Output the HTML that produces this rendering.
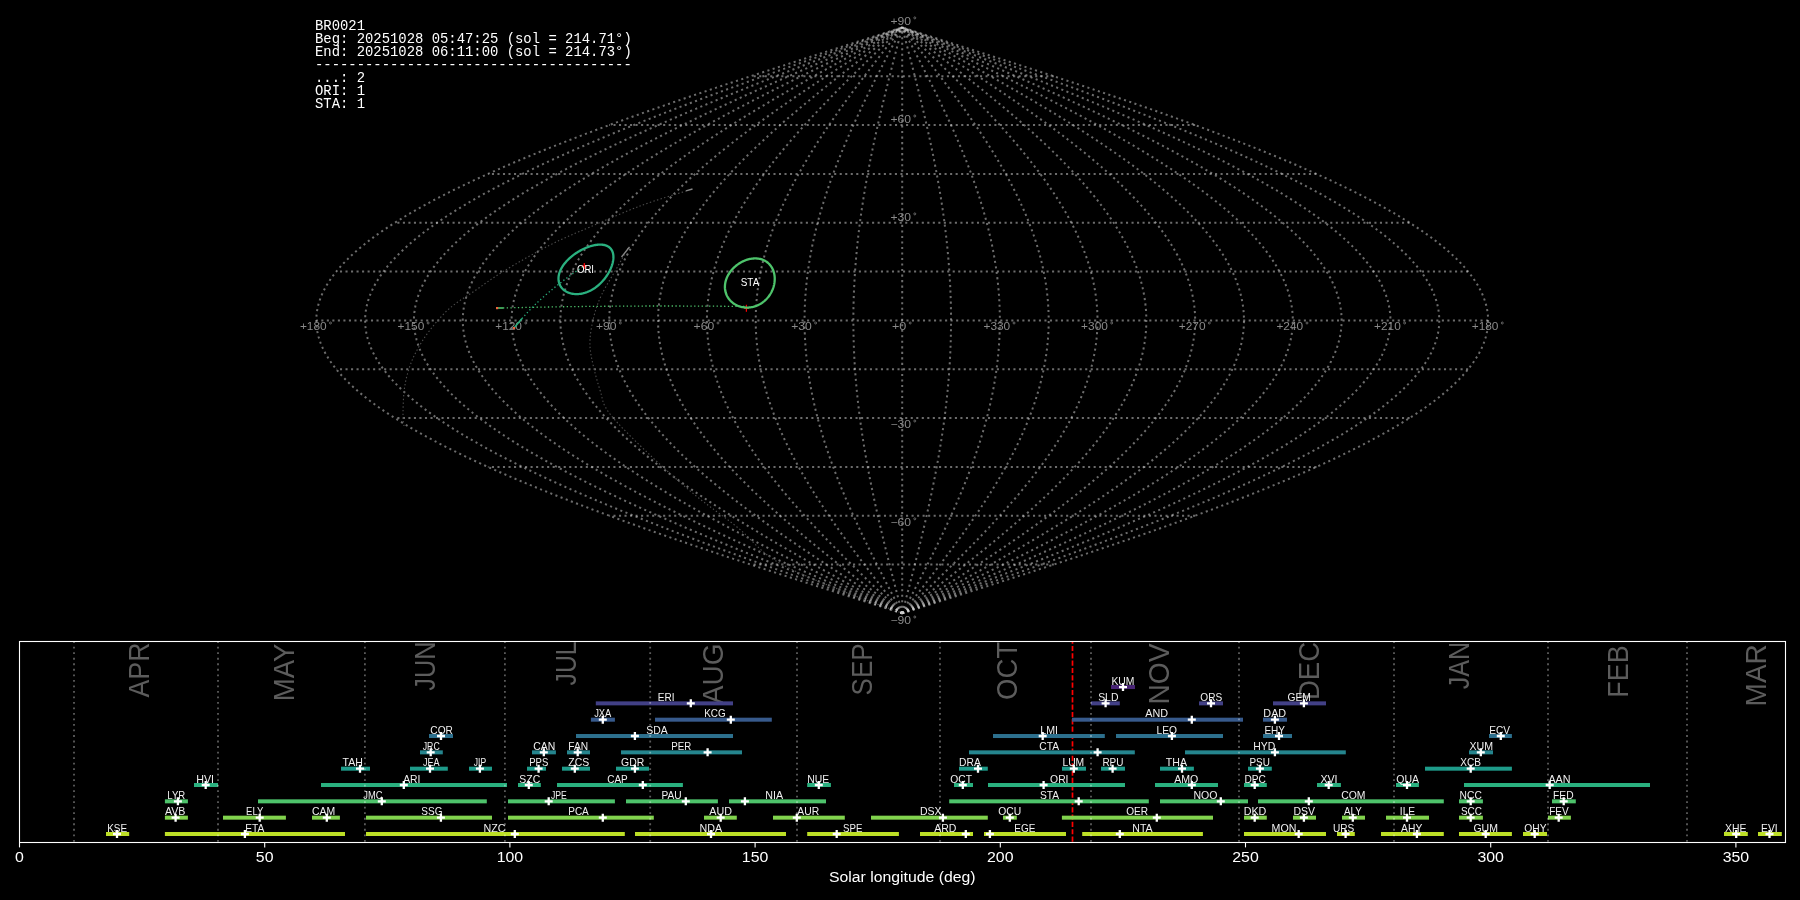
<!DOCTYPE html>
<html><head><meta charset="utf-8"><style>html,body{margin:0;padding:0;background:#000;width:1800px;height:900px;overflow:hidden;position:relative}</style></head><body>
<svg width="1800" height="900" viewBox="0 0 1800 900" style="position:absolute;left:0;top:0;will-change:transform;font-family:'Liberation Sans', sans-serif">
<rect x="0" y="0" width="1800" height="900" fill="#000"/>
<path d="M1053.84,564.52 L1049.63,564.52 L1045.42,564.52 L1041.21,564.52 L1036.99,564.52 L1032.78,564.52 L1028.57,564.52 L1024.36,564.52 L1020.14,564.52 L1015.93,564.52 L1011.72,564.52 L1007.51,564.52 L1003.29,564.52 L999.08,564.52 L994.87,564.52 L990.66,564.52 L986.45,564.52 L982.23,564.52 L978.02,564.52 L973.81,564.52 L969.60,564.52 L965.38,564.52 L961.17,564.52 L956.96,564.52 L952.75,564.52 L948.54,564.52 L944.32,564.52 L940.11,564.52 L935.90,564.52 L931.69,564.52 L927.47,564.52 L923.26,564.52 L919.05,564.52 L914.84,564.52 L910.62,564.52 L906.41,564.52 L902.20,564.52 L897.99,564.52 L893.78,564.52 L889.56,564.52 L885.35,564.52 L881.14,564.52 L876.93,564.52 L872.71,564.52 L868.50,564.52 L864.29,564.52 L860.08,564.52 L855.86,564.52 L851.65,564.52 L847.44,564.52 L843.23,564.52 L839.02,564.52 L834.80,564.52 L830.59,564.52 L826.38,564.52 L822.17,564.52 L817.95,564.52 L813.74,564.52 L809.53,564.52 L805.32,564.52 L801.11,564.52 L796.89,564.52 L792.68,564.52 L788.47,564.52 L784.26,564.52 L780.04,564.52 L775.83,564.52 L771.62,564.52 L767.41,564.52 L763.19,564.52 L758.98,564.52 L754.77,564.52 L750.56,564.52" fill="none" stroke="#d8d8d8" stroke-opacity="0.5" stroke-width="2" stroke-dasharray="2.08 3.44"/>
<path d="M1195.15,515.70 L1187.01,515.70 L1178.88,515.70 L1170.74,515.70 L1162.60,515.70 L1154.46,515.70 L1146.33,515.70 L1138.19,515.70 L1130.05,515.70 L1121.91,515.70 L1113.78,515.70 L1105.64,515.70 L1097.50,515.70 L1089.36,515.70 L1081.23,515.70 L1073.09,515.70 L1064.95,515.70 L1056.81,515.70 L1048.68,515.70 L1040.54,515.70 L1032.40,515.70 L1024.26,515.70 L1016.13,515.70 L1007.99,515.70 L999.85,515.70 L991.71,515.70 L983.58,515.70 L975.44,515.70 L967.30,515.70 L959.16,515.70 L951.03,515.70 L942.89,515.70 L934.75,515.70 L926.61,515.70 L918.48,515.70 L910.34,515.70 L902.20,515.70 L894.06,515.70 L885.93,515.70 L877.79,515.70 L869.65,515.70 L861.51,515.70 L853.38,515.70 L845.24,515.70 L837.10,515.70 L828.96,515.70 L820.83,515.70 L812.69,515.70 L804.55,515.70 L796.41,515.70 L788.27,515.70 L780.14,515.70 L772.00,515.70 L763.86,515.70 L755.73,515.70 L747.59,515.70 L739.45,515.70 L731.31,515.70 L723.17,515.70 L715.04,515.70 L706.90,515.70 L698.76,515.70 L690.62,515.70 L682.49,515.70 L674.35,515.70 L666.21,515.70 L658.08,515.70 L649.94,515.70 L641.80,515.70 L633.66,515.70 L625.52,515.70 L617.39,515.70 L609.25,515.70" fill="none" stroke="#d8d8d8" stroke-opacity="0.5" stroke-width="2" stroke-dasharray="2.08 3.44"/>
<path d="M1316.49,466.88 L1304.99,466.88 L1293.48,466.88 L1281.97,466.88 L1270.46,466.88 L1258.95,466.88 L1247.44,466.88 L1235.94,466.88 L1224.43,466.88 L1212.92,466.88 L1201.41,466.88 L1189.90,466.88 L1178.40,466.88 L1166.89,466.88 L1155.38,466.88 L1143.87,466.88 L1132.36,466.88 L1120.86,466.88 L1109.35,466.88 L1097.84,466.88 L1086.33,466.88 L1074.82,466.88 L1063.31,466.88 L1051.81,466.88 L1040.30,466.88 L1028.79,466.88 L1017.28,466.88 L1005.77,466.88 L994.27,466.88 L982.76,466.88 L971.25,466.88 L959.74,466.88 L948.23,466.88 L936.72,466.88 L925.22,466.88 L913.71,466.88 L902.20,466.88 L890.69,466.88 L879.18,466.88 L867.68,466.88 L856.17,466.88 L844.66,466.88 L833.15,466.88 L821.64,466.88 L810.13,466.88 L798.63,466.88 L787.12,466.88 L775.61,466.88 L764.10,466.88 L752.59,466.88 L741.09,466.88 L729.58,466.88 L718.07,466.88 L706.56,466.88 L695.05,466.88 L683.54,466.88 L672.04,466.88 L660.53,466.88 L649.02,466.88 L637.51,466.88 L626.00,466.88 L614.50,466.88 L602.99,466.88 L591.48,466.88 L579.97,466.88 L568.46,466.88 L556.96,466.88 L545.45,466.88 L533.94,466.88 L522.43,466.88 L510.92,466.88 L499.41,466.88 L487.91,466.88" fill="none" stroke="#d8d8d8" stroke-opacity="0.5" stroke-width="2" stroke-dasharray="2.08 3.44"/>
<path d="M1409.60,418.05 L1395.51,418.05 L1381.42,418.05 L1367.32,418.05 L1353.23,418.05 L1339.13,418.05 L1325.04,418.05 L1310.94,418.05 L1296.85,418.05 L1282.75,418.05 L1268.66,418.05 L1254.56,418.05 L1240.47,418.05 L1226.37,418.05 L1212.28,418.05 L1198.19,418.05 L1184.09,418.05 L1170.00,418.05 L1155.90,418.05 L1141.81,418.05 L1127.71,418.05 L1113.62,418.05 L1099.52,418.05 L1085.43,418.05 L1071.33,418.05 L1057.24,418.05 L1043.15,418.05 L1029.05,418.05 L1014.96,418.05 L1000.86,418.05 L986.77,418.05 L972.67,418.05 L958.58,418.05 L944.48,418.05 L930.39,418.05 L916.29,418.05 L902.20,418.05 L888.11,418.05 L874.01,418.05 L859.92,418.05 L845.82,418.05 L831.73,418.05 L817.63,418.05 L803.54,418.05 L789.44,418.05 L775.35,418.05 L761.25,418.05 L747.16,418.05 L733.07,418.05 L718.97,418.05 L704.88,418.05 L690.78,418.05 L676.69,418.05 L662.59,418.05 L648.50,418.05 L634.40,418.05 L620.31,418.05 L606.21,418.05 L592.12,418.05 L578.03,418.05 L563.93,418.05 L549.84,418.05 L535.74,418.05 L521.65,418.05 L507.55,418.05 L493.46,418.05 L479.36,418.05 L465.27,418.05 L451.17,418.05 L437.08,418.05 L422.98,418.05 L408.89,418.05 L394.80,418.05" fill="none" stroke="#d8d8d8" stroke-opacity="0.5" stroke-width="2" stroke-dasharray="2.08 3.44"/>
<path d="M1468.14,369.22 L1452.42,369.22 L1436.70,369.22 L1420.97,369.22 L1405.25,369.22 L1389.53,369.22 L1373.81,369.22 L1358.09,369.22 L1342.37,369.22 L1326.65,369.22 L1310.93,369.22 L1295.21,369.22 L1279.49,369.22 L1263.77,369.22 L1248.05,369.22 L1232.33,369.22 L1216.61,369.22 L1200.89,369.22 L1185.17,369.22 L1169.45,369.22 L1153.73,369.22 L1138.01,369.22 L1122.29,369.22 L1106.57,369.22 L1090.85,369.22 L1075.12,369.22 L1059.40,369.22 L1043.68,369.22 L1027.96,369.22 L1012.24,369.22 L996.52,369.22 L980.80,369.22 L965.08,369.22 L949.36,369.22 L933.64,369.22 L917.92,369.22 L902.20,369.22 L886.48,369.22 L870.76,369.22 L855.04,369.22 L839.32,369.22 L823.60,369.22 L807.88,369.22 L792.16,369.22 L776.44,369.22 L760.72,369.22 L745.00,369.22 L729.28,369.22 L713.55,369.22 L697.83,369.22 L682.11,369.22 L666.39,369.22 L650.67,369.22 L634.95,369.22 L619.23,369.22 L603.51,369.22 L587.79,369.22 L572.07,369.22 L556.35,369.22 L540.63,369.22 L524.91,369.22 L509.19,369.22 L493.47,369.22 L477.75,369.22 L462.03,369.22 L446.31,369.22 L430.59,369.22 L414.87,369.22 L399.15,369.22 L383.43,369.22 L367.70,369.22 L351.98,369.22 L336.26,369.22" fill="none" stroke="#d8d8d8" stroke-opacity="0.5" stroke-width="2" stroke-dasharray="2.08 3.44"/>
<path d="M1488.10,320.40 L1471.83,320.40 L1455.55,320.40 L1439.28,320.40 L1423.00,320.40 L1406.72,320.40 L1390.45,320.40 L1374.17,320.40 L1357.90,320.40 L1341.62,320.40 L1325.35,320.40 L1309.08,320.40 L1292.80,320.40 L1276.53,320.40 L1260.25,320.40 L1243.97,320.40 L1227.70,320.40 L1211.42,320.40 L1195.15,320.40 L1178.88,320.40 L1162.60,320.40 L1146.33,320.40 L1130.05,320.40 L1113.78,320.40 L1097.50,320.40 L1081.23,320.40 L1064.95,320.40 L1048.67,320.40 L1032.40,320.40 L1016.12,320.40 L999.85,320.40 L983.58,320.40 L967.30,320.40 L951.03,320.40 L934.75,320.40 L918.48,320.40 L902.20,320.40 L885.93,320.40 L869.65,320.40 L853.38,320.40 L837.10,320.40 L820.83,320.40 L804.55,320.40 L788.28,320.40 L772.00,320.40 L755.73,320.40 L739.45,320.40 L723.18,320.40 L706.90,320.40 L690.62,320.40 L674.35,320.40 L658.08,320.40 L641.80,320.40 L625.53,320.40 L609.25,320.40 L592.98,320.40 L576.70,320.40 L560.43,320.40 L544.15,320.40 L527.88,320.40 L511.60,320.40 L495.33,320.40 L479.05,320.40 L462.78,320.40 L446.50,320.40 L430.23,320.40 L413.95,320.40 L397.68,320.40 L381.40,320.40 L365.13,320.40 L348.85,320.40 L332.58,320.40 L316.30,320.40" fill="none" stroke="#d8d8d8" stroke-opacity="0.5" stroke-width="2" stroke-dasharray="2.08 3.44"/>
<path d="M1468.14,271.57 L1452.42,271.57 L1436.70,271.57 L1420.97,271.57 L1405.25,271.57 L1389.53,271.57 L1373.81,271.57 L1358.09,271.57 L1342.37,271.57 L1326.65,271.57 L1310.93,271.57 L1295.21,271.57 L1279.49,271.57 L1263.77,271.57 L1248.05,271.57 L1232.33,271.57 L1216.61,271.57 L1200.89,271.57 L1185.17,271.57 L1169.45,271.57 L1153.73,271.57 L1138.01,271.57 L1122.29,271.57 L1106.57,271.57 L1090.85,271.57 L1075.12,271.57 L1059.40,271.57 L1043.68,271.57 L1027.96,271.57 L1012.24,271.57 L996.52,271.57 L980.80,271.57 L965.08,271.57 L949.36,271.57 L933.64,271.57 L917.92,271.57 L902.20,271.57 L886.48,271.57 L870.76,271.57 L855.04,271.57 L839.32,271.57 L823.60,271.57 L807.88,271.57 L792.16,271.57 L776.44,271.57 L760.72,271.57 L745.00,271.57 L729.28,271.57 L713.55,271.57 L697.83,271.57 L682.11,271.57 L666.39,271.57 L650.67,271.57 L634.95,271.57 L619.23,271.57 L603.51,271.57 L587.79,271.57 L572.07,271.57 L556.35,271.57 L540.63,271.57 L524.91,271.57 L509.19,271.57 L493.47,271.57 L477.75,271.57 L462.03,271.57 L446.31,271.57 L430.59,271.57 L414.87,271.57 L399.15,271.57 L383.43,271.57 L367.70,271.57 L351.98,271.57 L336.26,271.57" fill="none" stroke="#d8d8d8" stroke-opacity="0.5" stroke-width="2" stroke-dasharray="2.08 3.44"/>
<path d="M1409.60,222.75 L1395.51,222.75 L1381.42,222.75 L1367.32,222.75 L1353.23,222.75 L1339.13,222.75 L1325.04,222.75 L1310.94,222.75 L1296.85,222.75 L1282.75,222.75 L1268.66,222.75 L1254.56,222.75 L1240.47,222.75 L1226.37,222.75 L1212.28,222.75 L1198.19,222.75 L1184.09,222.75 L1170.00,222.75 L1155.90,222.75 L1141.81,222.75 L1127.71,222.75 L1113.62,222.75 L1099.52,222.75 L1085.43,222.75 L1071.33,222.75 L1057.24,222.75 L1043.15,222.75 L1029.05,222.75 L1014.96,222.75 L1000.86,222.75 L986.77,222.75 L972.67,222.75 L958.58,222.75 L944.48,222.75 L930.39,222.75 L916.29,222.75 L902.20,222.75 L888.11,222.75 L874.01,222.75 L859.92,222.75 L845.82,222.75 L831.73,222.75 L817.63,222.75 L803.54,222.75 L789.44,222.75 L775.35,222.75 L761.25,222.75 L747.16,222.75 L733.07,222.75 L718.97,222.75 L704.88,222.75 L690.78,222.75 L676.69,222.75 L662.59,222.75 L648.50,222.75 L634.40,222.75 L620.31,222.75 L606.21,222.75 L592.12,222.75 L578.03,222.75 L563.93,222.75 L549.84,222.75 L535.74,222.75 L521.65,222.75 L507.55,222.75 L493.46,222.75 L479.36,222.75 L465.27,222.75 L451.17,222.75 L437.08,222.75 L422.98,222.75 L408.89,222.75 L394.80,222.75" fill="none" stroke="#d8d8d8" stroke-opacity="0.5" stroke-width="2" stroke-dasharray="2.08 3.44"/>
<path d="M1316.49,173.92 L1304.99,173.92 L1293.48,173.92 L1281.97,173.92 L1270.46,173.92 L1258.95,173.92 L1247.44,173.92 L1235.94,173.92 L1224.43,173.92 L1212.92,173.92 L1201.41,173.92 L1189.90,173.92 L1178.40,173.92 L1166.89,173.92 L1155.38,173.92 L1143.87,173.92 L1132.36,173.92 L1120.86,173.92 L1109.35,173.92 L1097.84,173.92 L1086.33,173.92 L1074.82,173.92 L1063.31,173.92 L1051.81,173.92 L1040.30,173.92 L1028.79,173.92 L1017.28,173.92 L1005.77,173.92 L994.27,173.92 L982.76,173.92 L971.25,173.92 L959.74,173.92 L948.23,173.92 L936.72,173.92 L925.22,173.92 L913.71,173.92 L902.20,173.92 L890.69,173.92 L879.18,173.92 L867.68,173.92 L856.17,173.92 L844.66,173.92 L833.15,173.92 L821.64,173.92 L810.13,173.92 L798.63,173.92 L787.12,173.92 L775.61,173.92 L764.10,173.92 L752.59,173.92 L741.09,173.92 L729.58,173.92 L718.07,173.92 L706.56,173.92 L695.05,173.92 L683.54,173.92 L672.04,173.92 L660.53,173.92 L649.02,173.92 L637.51,173.92 L626.00,173.92 L614.50,173.92 L602.99,173.92 L591.48,173.92 L579.97,173.92 L568.46,173.92 L556.96,173.92 L545.45,173.92 L533.94,173.92 L522.43,173.92 L510.92,173.92 L499.41,173.92 L487.91,173.92" fill="none" stroke="#d8d8d8" stroke-opacity="0.5" stroke-width="2" stroke-dasharray="2.08 3.44"/>
<path d="M1195.15,125.10 L1187.01,125.10 L1178.88,125.10 L1170.74,125.10 L1162.60,125.10 L1154.46,125.10 L1146.33,125.10 L1138.19,125.10 L1130.05,125.10 L1121.91,125.10 L1113.78,125.10 L1105.64,125.10 L1097.50,125.10 L1089.36,125.10 L1081.23,125.10 L1073.09,125.10 L1064.95,125.10 L1056.81,125.10 L1048.68,125.10 L1040.54,125.10 L1032.40,125.10 L1024.26,125.10 L1016.13,125.10 L1007.99,125.10 L999.85,125.10 L991.71,125.10 L983.58,125.10 L975.44,125.10 L967.30,125.10 L959.16,125.10 L951.03,125.10 L942.89,125.10 L934.75,125.10 L926.61,125.10 L918.48,125.10 L910.34,125.10 L902.20,125.10 L894.06,125.10 L885.93,125.10 L877.79,125.10 L869.65,125.10 L861.51,125.10 L853.38,125.10 L845.24,125.10 L837.10,125.10 L828.96,125.10 L820.83,125.10 L812.69,125.10 L804.55,125.10 L796.41,125.10 L788.27,125.10 L780.14,125.10 L772.00,125.10 L763.86,125.10 L755.73,125.10 L747.59,125.10 L739.45,125.10 L731.31,125.10 L723.17,125.10 L715.04,125.10 L706.90,125.10 L698.76,125.10 L690.62,125.10 L682.49,125.10 L674.35,125.10 L666.21,125.10 L658.08,125.10 L649.94,125.10 L641.80,125.10 L633.66,125.10 L625.52,125.10 L617.39,125.10 L609.25,125.10" fill="none" stroke="#d8d8d8" stroke-opacity="0.5" stroke-width="2" stroke-dasharray="2.08 3.44"/>
<path d="M1053.84,76.27 L1049.63,76.27 L1045.42,76.27 L1041.21,76.27 L1036.99,76.27 L1032.78,76.27 L1028.57,76.27 L1024.36,76.27 L1020.14,76.27 L1015.93,76.27 L1011.72,76.27 L1007.51,76.27 L1003.29,76.27 L999.08,76.27 L994.87,76.27 L990.66,76.27 L986.45,76.27 L982.23,76.27 L978.02,76.27 L973.81,76.27 L969.60,76.27 L965.38,76.27 L961.17,76.27 L956.96,76.27 L952.75,76.27 L948.54,76.27 L944.32,76.27 L940.11,76.27 L935.90,76.27 L931.69,76.27 L927.47,76.27 L923.26,76.27 L919.05,76.27 L914.84,76.27 L910.62,76.27 L906.41,76.27 L902.20,76.27 L897.99,76.27 L893.78,76.27 L889.56,76.27 L885.35,76.27 L881.14,76.27 L876.93,76.27 L872.71,76.27 L868.50,76.27 L864.29,76.27 L860.08,76.27 L855.86,76.27 L851.65,76.27 L847.44,76.27 L843.23,76.27 L839.02,76.27 L834.80,76.27 L830.59,76.27 L826.38,76.27 L822.17,76.27 L817.95,76.27 L813.74,76.27 L809.53,76.27 L805.32,76.27 L801.11,76.27 L796.89,76.27 L792.68,76.27 L788.47,76.27 L784.26,76.27 L780.04,76.27 L775.83,76.27 L771.62,76.27 L767.41,76.27 L763.19,76.27 L758.98,76.27 L754.77,76.27 L750.56,76.27" fill="none" stroke="#d8d8d8" stroke-opacity="0.5" stroke-width="2" stroke-dasharray="2.08 3.44"/>
<path d="M902.20,613.35 L907.31,611.72 L912.43,610.10 L917.54,608.47 L922.65,606.84 L927.76,605.21 L932.86,603.59 L937.97,601.96 L943.07,600.33 L948.17,598.70 L953.26,597.08 L958.36,595.45 L963.44,593.82 L968.53,592.19 L973.60,590.56 L978.68,588.94 L983.74,587.31 L988.80,585.68 L993.85,584.05 L998.90,582.43 L1003.94,580.80 L1008.97,579.17 L1013.99,577.54 L1019.01,575.92 L1024.02,574.29 L1029.01,572.66 L1034.00,571.03 L1038.98,569.41 L1043.94,567.78 L1048.90,566.15 L1053.84,564.52 L1058.77,562.90 L1063.70,561.27 L1068.60,559.64 L1073.50,558.01 L1078.38,556.39 L1083.25,554.76 L1088.11,553.13 L1092.95,551.50 L1097.78,549.88 L1102.59,548.25 L1107.39,546.62 L1112.17,545.00 L1116.93,543.37 L1121.68,541.74 L1126.41,540.11 L1131.13,538.48 L1135.83,536.86 L1140.51,535.23 L1145.17,533.60 L1149.81,531.97 L1154.44,530.35 L1159.04,528.72 L1163.63,527.09 L1168.19,525.46 L1172.74,523.84 L1177.26,522.21 L1181.77,520.58 L1186.25,518.95 L1190.71,517.33 L1195.15,515.70 L1199.57,514.07 L1203.96,512.44 L1208.33,510.82 L1212.68,509.19 L1217.00,507.56 L1221.30,505.93 L1225.58,504.31 L1229.83,502.68 L1234.06,501.05 L1238.26,499.42 L1242.43,497.80 L1246.58,496.17 L1250.71,494.54 L1254.80,492.91 L1258.87,491.29 L1262.92,489.66 L1266.93,488.03 L1270.92,486.40 L1274.88,484.78 L1278.81,483.15 L1282.71,481.52 L1286.58,479.89 L1290.43,478.27 L1294.24,476.64 L1298.03,475.01 L1301.78,473.38 L1305.51,471.76 L1309.20,470.13 L1312.86,468.50 L1316.49,466.88 L1320.09,465.25 L1323.66,463.62 L1327.20,461.99 L1330.70,460.37 L1334.17,458.74 L1337.61,457.11 L1341.01,455.48 L1344.38,453.85 L1347.72,452.23 L1351.03,450.60 L1354.29,448.97 L1357.53,447.34 L1360.73,445.72 L1363.90,444.09 L1367.03,442.46 L1370.12,440.83 L1373.18,439.21 L1376.20,437.58 L1379.19,435.95 L1382.14,434.32 L1385.06,432.70 L1387.93,431.07 L1390.77,429.44 L1393.58,427.81 L1396.34,426.19 L1399.07,424.56 L1401.76,422.93 L1404.41,421.30 L1407.03,419.68 L1409.60,418.05 L1412.14,416.42 L1414.64,414.79 L1417.10,413.17 L1419.52,411.54 L1421.90,409.91 L1424.24,408.28 L1426.54,406.66 L1428.80,405.03 L1431.02,403.40 L1433.21,401.77 L1435.35,400.15 L1437.45,398.52 L1439.51,396.89 L1441.52,395.26 L1443.50,393.64 L1445.44,392.01 L1447.33,390.38 L1449.18,388.75 L1451.00,387.13 L1452.77,385.50 L1454.49,383.87 L1456.18,382.25 L1457.82,380.62 L1459.42,378.99 L1460.98,377.36 L1462.50,375.73 L1463.97,374.11 L1465.40,372.48 L1466.79,370.85 L1468.14,369.22 L1469.44,367.60 L1470.70,365.97 L1471.91,364.34 L1473.08,362.71 L1474.21,361.09 L1475.30,359.46 L1476.34,357.83 L1477.34,356.20 L1478.29,354.58 L1479.20,352.95 L1480.06,351.32 L1480.89,349.69 L1481.66,348.07 L1482.40,346.44 L1483.09,344.81 L1483.73,343.19 L1484.33,341.56 L1484.89,339.93 L1485.40,338.30 L1485.87,336.67 L1486.29,335.05 L1486.67,333.42 L1487.01,331.79 L1487.30,330.16 L1487.54,328.54 L1487.74,326.91 L1487.90,325.28 L1488.01,323.65 L1488.08,322.03 L1488.10,320.40 L1488.08,318.77 L1488.01,317.14 L1487.90,315.52 L1487.74,313.89 L1487.54,312.26 L1487.30,310.63 L1487.01,309.01 L1486.67,307.38 L1486.29,305.75 L1485.87,304.12 L1485.40,302.50 L1484.89,300.87 L1484.33,299.24 L1483.73,297.61 L1483.09,295.99 L1482.40,294.36 L1481.66,292.73 L1480.89,291.10 L1480.06,289.48 L1479.20,287.85 L1478.29,286.22 L1477.34,284.59 L1476.34,282.97 L1475.30,281.34 L1474.21,279.71 L1473.08,278.08 L1471.91,276.46 L1470.70,274.83 L1469.44,273.20 L1468.14,271.57 L1466.79,269.95 L1465.40,268.32 L1463.97,266.69 L1462.50,265.06 L1460.98,263.44 L1459.42,261.81 L1457.82,260.18 L1456.18,258.55 L1454.49,256.93 L1452.77,255.30 L1451.00,253.67 L1449.18,252.04 L1447.33,250.42 L1445.44,248.79 L1443.50,247.16 L1441.52,245.53 L1439.51,243.91 L1437.45,242.28 L1435.35,240.65 L1433.21,239.02 L1431.02,237.40 L1428.80,235.77 L1426.54,234.14 L1424.24,232.51 L1421.90,230.89 L1419.52,229.26 L1417.10,227.63 L1414.64,226.00 L1412.14,224.38 L1409.60,222.75 L1407.03,221.12 L1404.41,219.49 L1401.76,217.87 L1399.07,216.24 L1396.34,214.61 L1393.58,212.98 L1390.77,211.36 L1387.93,209.73 L1385.06,208.10 L1382.14,206.47 L1379.19,204.85 L1376.20,203.22 L1373.18,201.59 L1370.12,199.96 L1367.03,198.34 L1363.90,196.71 L1360.73,195.08 L1357.53,193.45 L1354.29,191.83 L1351.03,190.20 L1347.72,188.57 L1344.38,186.94 L1341.01,185.32 L1337.61,183.69 L1334.17,182.06 L1330.70,180.43 L1327.20,178.81 L1323.66,177.18 L1320.09,175.55 L1316.49,173.92 L1312.86,172.30 L1309.20,170.67 L1305.51,169.04 L1301.78,167.41 L1298.03,165.79 L1294.24,164.16 L1290.43,162.53 L1286.58,160.90 L1282.71,159.28 L1278.81,157.65 L1274.88,156.02 L1270.92,154.39 L1266.93,152.77 L1262.92,151.14 L1258.87,149.51 L1254.80,147.88 L1250.71,146.26 L1246.58,144.63 L1242.43,143.00 L1238.26,141.37 L1234.06,139.75 L1229.83,138.12 L1225.58,136.49 L1221.30,134.86 L1217.00,133.24 L1212.68,131.61 L1208.33,129.98 L1203.96,128.35 L1199.57,126.73 L1195.15,125.10 L1190.71,123.47 L1186.25,121.84 L1181.77,120.22 L1177.26,118.59 L1172.74,116.96 L1168.19,115.33 L1163.63,113.71 L1159.04,112.08 L1154.44,110.45 L1149.81,108.82 L1145.17,107.20 L1140.51,105.57 L1135.83,103.94 L1131.13,102.31 L1126.41,100.69 L1121.68,99.06 L1116.93,97.43 L1112.17,95.80 L1107.39,94.18 L1102.59,92.55 L1097.78,90.92 L1092.95,89.29 L1088.11,87.67 L1083.25,86.04 L1078.38,84.41 L1073.50,82.78 L1068.60,81.16 L1063.70,79.53 L1058.77,77.90 L1053.84,76.27 L1048.90,74.65 L1043.94,73.02 L1038.98,71.39 L1034.00,69.76 L1029.01,68.14 L1024.02,66.51 L1019.01,64.88 L1013.99,63.25 L1008.97,61.63 L1003.94,60.00 L998.90,58.37 L993.85,56.75 L988.80,55.12 L983.74,53.49 L978.68,51.86 L973.60,50.24 L968.53,48.61 L963.44,46.98 L958.36,45.35 L953.26,43.72 L948.17,42.10 L943.07,40.47 L937.97,38.84 L932.86,37.21 L927.76,35.59 L922.65,33.96 L917.54,32.33 L912.43,30.70 L907.31,29.08 L902.20,27.45" fill="none" stroke="#d8d8d8" stroke-opacity="0.5" stroke-width="2" stroke-dasharray="2.08 3.44"/>
<path d="M902.20,613.35 L906.89,611.72 L911.57,610.10 L916.26,608.47 L920.94,606.84 L925.63,605.21 L930.31,603.59 L934.99,601.96 L939.66,600.33 L944.34,598.70 L949.01,597.08 L953.68,595.45 L958.34,593.82 L963.00,592.19 L967.65,590.56 L972.30,588.94 L976.95,587.31 L981.58,585.68 L986.22,584.05 L990.84,582.43 L995.46,580.80 L1000.07,579.17 L1004.68,577.54 L1009.28,575.92 L1013.86,574.29 L1018.44,572.66 L1023.02,571.03 L1027.58,569.41 L1032.13,567.78 L1036.67,566.15 L1041.21,564.52 L1045.73,562.90 L1050.24,561.27 L1054.74,559.64 L1059.23,558.01 L1063.70,556.39 L1068.17,554.76 L1072.62,553.13 L1077.05,551.50 L1081.48,549.88 L1085.89,548.25 L1090.29,546.62 L1094.67,545.00 L1099.04,543.37 L1103.39,541.74 L1107.73,540.11 L1112.05,538.48 L1116.36,536.86 L1120.65,535.23 L1124.92,533.60 L1129.18,531.97 L1133.42,530.35 L1137.64,528.72 L1141.84,527.09 L1146.03,525.46 L1150.19,523.84 L1154.34,522.21 L1158.47,520.58 L1162.58,518.95 L1166.67,517.33 L1170.74,515.70 L1174.79,514.07 L1178.81,512.44 L1182.82,510.82 L1186.81,509.19 L1190.77,507.56 L1194.71,505.93 L1198.63,504.31 L1202.53,502.68 L1206.40,501.05 L1210.25,499.42 L1214.08,497.80 L1217.88,496.17 L1221.66,494.54 L1225.42,492.91 L1229.15,491.29 L1232.86,489.66 L1236.54,488.03 L1240.19,486.40 L1243.82,484.78 L1247.43,483.15 L1251.00,481.52 L1254.55,479.89 L1258.08,478.27 L1261.57,476.64 L1265.04,475.01 L1268.48,473.38 L1271.90,471.76 L1275.28,470.13 L1278.64,468.50 L1281.97,466.88 L1285.27,465.25 L1288.54,463.62 L1291.78,461.99 L1294.99,460.37 L1298.17,458.74 L1301.32,457.11 L1304.45,455.48 L1307.54,453.85 L1310.60,452.23 L1313.62,450.60 L1316.62,448.97 L1319.59,447.34 L1322.52,445.72 L1325.42,444.09 L1328.29,442.46 L1331.13,440.83 L1333.93,439.21 L1336.70,437.58 L1339.44,435.95 L1342.15,434.32 L1344.82,432.70 L1347.46,431.07 L1350.06,429.44 L1352.63,427.81 L1355.16,426.19 L1357.67,424.56 L1360.13,422.93 L1362.56,421.30 L1364.96,419.68 L1367.32,418.05 L1369.65,416.42 L1371.94,414.79 L1374.19,413.17 L1376.41,411.54 L1378.59,409.91 L1380.74,408.28 L1382.85,406.66 L1384.92,405.03 L1386.96,403.40 L1388.96,401.77 L1390.92,400.15 L1392.84,398.52 L1394.73,396.89 L1396.58,395.26 L1398.39,393.64 L1400.17,392.01 L1401.90,390.38 L1403.60,388.75 L1405.26,387.13 L1406.89,385.50 L1408.47,383.87 L1410.01,382.25 L1411.52,380.62 L1412.99,378.99 L1414.42,377.36 L1415.81,375.73 L1417.16,374.11 L1418.47,372.48 L1419.74,370.85 L1420.97,369.22 L1422.17,367.60 L1423.32,365.97 L1424.44,364.34 L1425.51,362.71 L1426.54,361.09 L1427.54,359.46 L1428.49,357.83 L1429.41,356.20 L1430.28,354.58 L1431.12,352.95 L1431.91,351.32 L1432.66,349.69 L1433.38,348.07 L1434.05,346.44 L1434.68,344.81 L1435.27,343.19 L1435.82,341.56 L1436.33,339.93 L1436.80,338.30 L1437.23,336.67 L1437.62,335.05 L1437.97,333.42 L1438.27,331.79 L1438.54,330.16 L1438.76,328.54 L1438.95,326.91 L1439.09,325.28 L1439.19,323.65 L1439.25,322.03 L1439.28,320.40 L1439.25,318.77 L1439.19,317.14 L1439.09,315.52 L1438.95,313.89 L1438.76,312.26 L1438.54,310.63 L1438.27,309.01 L1437.97,307.38 L1437.62,305.75 L1437.23,304.12 L1436.80,302.50 L1436.33,300.87 L1435.82,299.24 L1435.27,297.61 L1434.68,295.99 L1434.05,294.36 L1433.38,292.73 L1432.66,291.10 L1431.91,289.48 L1431.12,287.85 L1430.28,286.22 L1429.41,284.59 L1428.49,282.97 L1427.54,281.34 L1426.54,279.71 L1425.51,278.08 L1424.44,276.46 L1423.32,274.83 L1422.17,273.20 L1420.97,271.57 L1419.74,269.95 L1418.47,268.32 L1417.16,266.69 L1415.81,265.06 L1414.42,263.44 L1412.99,261.81 L1411.52,260.18 L1410.01,258.55 L1408.47,256.93 L1406.89,255.30 L1405.26,253.67 L1403.60,252.04 L1401.90,250.42 L1400.17,248.79 L1398.39,247.16 L1396.58,245.53 L1394.73,243.91 L1392.84,242.28 L1390.92,240.65 L1388.96,239.02 L1386.96,237.40 L1384.92,235.77 L1382.85,234.14 L1380.74,232.51 L1378.59,230.89 L1376.41,229.26 L1374.19,227.63 L1371.94,226.00 L1369.65,224.38 L1367.32,222.75 L1364.96,221.12 L1362.56,219.49 L1360.13,217.87 L1357.67,216.24 L1355.16,214.61 L1352.63,212.98 L1350.06,211.36 L1347.46,209.73 L1344.82,208.10 L1342.15,206.47 L1339.44,204.85 L1336.70,203.22 L1333.93,201.59 L1331.13,199.96 L1328.29,198.34 L1325.42,196.71 L1322.52,195.08 L1319.59,193.45 L1316.62,191.83 L1313.62,190.20 L1310.60,188.57 L1307.54,186.94 L1304.45,185.32 L1301.32,183.69 L1298.17,182.06 L1294.99,180.43 L1291.78,178.81 L1288.54,177.18 L1285.27,175.55 L1281.97,173.92 L1278.64,172.30 L1275.28,170.67 L1271.90,169.04 L1268.48,167.41 L1265.04,165.79 L1261.57,164.16 L1258.08,162.53 L1254.55,160.90 L1251.00,159.28 L1247.43,157.65 L1243.82,156.02 L1240.19,154.39 L1236.54,152.77 L1232.86,151.14 L1229.15,149.51 L1225.42,147.88 L1221.66,146.26 L1217.88,144.63 L1214.08,143.00 L1210.25,141.37 L1206.40,139.75 L1202.53,138.12 L1198.63,136.49 L1194.71,134.86 L1190.77,133.24 L1186.81,131.61 L1182.82,129.98 L1178.81,128.35 L1174.79,126.73 L1170.74,125.10 L1166.67,123.47 L1162.58,121.84 L1158.47,120.22 L1154.34,118.59 L1150.19,116.96 L1146.03,115.33 L1141.84,113.71 L1137.64,112.08 L1133.42,110.45 L1129.18,108.82 L1124.92,107.20 L1120.65,105.57 L1116.36,103.94 L1112.05,102.31 L1107.73,100.69 L1103.39,99.06 L1099.04,97.43 L1094.67,95.80 L1090.29,94.18 L1085.89,92.55 L1081.48,90.92 L1077.05,89.29 L1072.62,87.67 L1068.17,86.04 L1063.70,84.41 L1059.23,82.78 L1054.74,81.16 L1050.24,79.53 L1045.73,77.90 L1041.21,76.27 L1036.67,74.65 L1032.13,73.02 L1027.58,71.39 L1023.02,69.76 L1018.44,68.14 L1013.86,66.51 L1009.28,64.88 L1004.68,63.25 L1000.07,61.63 L995.46,60.00 L990.84,58.37 L986.22,56.75 L981.58,55.12 L976.95,53.49 L972.30,51.86 L967.65,50.24 L963.00,48.61 L958.34,46.98 L953.68,45.35 L949.01,43.72 L944.34,42.10 L939.66,40.47 L934.99,38.84 L930.31,37.21 L925.63,35.59 L920.94,33.96 L916.26,32.33 L911.57,30.70 L906.89,29.08 L902.20,27.45" fill="none" stroke="#d8d8d8" stroke-opacity="0.5" stroke-width="2" stroke-dasharray="2.08 3.44"/>
<path d="M902.20,613.35 L906.46,611.72 L910.72,610.10 L914.98,608.47 L919.24,606.84 L923.50,605.21 L927.75,603.59 L932.01,601.96 L936.26,600.33 L940.51,598.70 L944.75,597.08 L949.00,595.45 L953.24,593.82 L957.47,592.19 L961.70,590.56 L965.93,588.94 L970.15,587.31 L974.37,585.68 L978.58,584.05 L982.78,582.43 L986.98,580.80 L991.18,579.17 L995.36,577.54 L999.54,575.92 L1003.71,574.29 L1007.88,572.66 L1012.03,571.03 L1016.18,569.41 L1020.32,567.78 L1024.45,566.15 L1028.57,564.52 L1032.68,562.90 L1036.78,561.27 L1040.87,559.64 L1044.95,558.01 L1049.02,556.39 L1053.08,554.76 L1057.12,553.13 L1061.16,551.50 L1065.18,549.88 L1069.19,548.25 L1073.19,546.62 L1077.17,545.00 L1081.14,543.37 L1085.10,541.74 L1089.05,540.11 L1092.97,538.48 L1096.89,536.86 L1100.79,535.23 L1104.67,533.60 L1108.54,531.97 L1112.40,530.35 L1116.23,528.72 L1120.06,527.09 L1123.86,525.46 L1127.65,523.84 L1131.42,522.21 L1135.17,520.58 L1138.91,518.95 L1142.63,517.33 L1146.33,515.70 L1150.01,514.07 L1153.67,512.44 L1157.31,510.82 L1160.93,509.19 L1164.54,507.56 L1168.12,505.93 L1171.68,504.31 L1175.23,502.68 L1178.75,501.05 L1182.25,499.42 L1185.73,497.80 L1189.19,496.17 L1192.62,494.54 L1196.04,492.91 L1199.43,491.29 L1202.80,489.66 L1206.14,488.03 L1209.47,486.40 L1212.77,484.78 L1216.04,483.15 L1219.29,481.52 L1222.52,479.89 L1225.72,478.27 L1228.90,476.64 L1232.06,475.01 L1235.19,473.38 L1238.29,471.76 L1241.37,470.13 L1244.42,468.50 L1247.44,466.88 L1250.44,465.25 L1253.42,463.62 L1256.36,461.99 L1259.28,460.37 L1262.18,458.74 L1265.04,457.11 L1267.88,455.48 L1270.69,453.85 L1273.47,452.23 L1276.22,450.60 L1278.95,448.97 L1281.64,447.34 L1284.31,445.72 L1286.95,444.09 L1289.55,442.46 L1292.13,440.83 L1294.68,439.21 L1297.20,437.58 L1299.69,435.95 L1302.15,434.32 L1304.58,432.70 L1306.98,431.07 L1309.34,429.44 L1311.68,427.81 L1313.99,426.19 L1316.26,424.56 L1318.50,422.93 L1320.71,421.30 L1322.89,419.68 L1325.04,418.05 L1327.15,416.42 L1329.23,414.79 L1331.28,413.17 L1333.30,411.54 L1335.28,409.91 L1337.23,408.28 L1339.15,406.66 L1341.04,405.03 L1342.89,403.40 L1344.70,401.77 L1346.49,400.15 L1348.24,398.52 L1349.95,396.89 L1351.64,395.26 L1353.28,393.64 L1354.90,392.01 L1356.48,390.38 L1358.02,388.75 L1359.53,387.13 L1361.00,385.50 L1362.44,383.87 L1363.85,382.25 L1365.22,380.62 L1366.55,378.99 L1367.85,377.36 L1369.12,375.73 L1370.34,374.11 L1371.54,372.48 L1372.69,370.85 L1373.81,369.22 L1374.90,367.60 L1375.95,365.97 L1376.96,364.34 L1377.94,362.71 L1378.88,361.09 L1379.78,359.46 L1380.65,357.83 L1381.48,356.20 L1382.27,354.58 L1383.03,352.95 L1383.75,351.32 L1384.44,349.69 L1385.09,348.07 L1385.70,346.44 L1386.27,344.81 L1386.81,343.19 L1387.31,341.56 L1387.78,339.93 L1388.20,338.30 L1388.59,336.67 L1388.94,335.05 L1389.26,333.42 L1389.54,331.79 L1389.78,330.16 L1389.99,328.54 L1390.15,326.91 L1390.28,325.28 L1390.38,323.65 L1390.43,322.03 L1390.45,320.40 L1390.43,318.77 L1390.38,317.14 L1390.28,315.52 L1390.15,313.89 L1389.99,312.26 L1389.78,310.63 L1389.54,309.01 L1389.26,307.38 L1388.94,305.75 L1388.59,304.12 L1388.20,302.50 L1387.78,300.87 L1387.31,299.24 L1386.81,297.61 L1386.27,295.99 L1385.70,294.36 L1385.09,292.73 L1384.44,291.10 L1383.75,289.48 L1383.03,287.85 L1382.27,286.22 L1381.48,284.59 L1380.65,282.97 L1379.78,281.34 L1378.88,279.71 L1377.94,278.08 L1376.96,276.46 L1375.95,274.83 L1374.90,273.20 L1373.81,271.57 L1372.69,269.95 L1371.54,268.32 L1370.34,266.69 L1369.12,265.06 L1367.85,263.44 L1366.55,261.81 L1365.22,260.18 L1363.85,258.55 L1362.44,256.93 L1361.00,255.30 L1359.53,253.67 L1358.02,252.04 L1356.48,250.42 L1354.90,248.79 L1353.28,247.16 L1351.64,245.53 L1349.95,243.91 L1348.24,242.28 L1346.49,240.65 L1344.70,239.02 L1342.89,237.40 L1341.04,235.77 L1339.15,234.14 L1337.23,232.51 L1335.28,230.89 L1333.30,229.26 L1331.28,227.63 L1329.23,226.00 L1327.15,224.38 L1325.04,222.75 L1322.89,221.12 L1320.71,219.49 L1318.50,217.87 L1316.26,216.24 L1313.99,214.61 L1311.68,212.98 L1309.34,211.36 L1306.98,209.73 L1304.58,208.10 L1302.15,206.47 L1299.69,204.85 L1297.20,203.22 L1294.68,201.59 L1292.13,199.96 L1289.55,198.34 L1286.95,196.71 L1284.31,195.08 L1281.64,193.45 L1278.95,191.83 L1276.22,190.20 L1273.47,188.57 L1270.69,186.94 L1267.88,185.32 L1265.04,183.69 L1262.18,182.06 L1259.28,180.43 L1256.36,178.81 L1253.42,177.18 L1250.44,175.55 L1247.44,173.92 L1244.42,172.30 L1241.37,170.67 L1238.29,169.04 L1235.19,167.41 L1232.06,165.79 L1228.90,164.16 L1225.72,162.53 L1222.52,160.90 L1219.29,159.28 L1216.04,157.65 L1212.77,156.02 L1209.47,154.39 L1206.14,152.77 L1202.80,151.14 L1199.43,149.51 L1196.04,147.88 L1192.62,146.26 L1189.19,144.63 L1185.73,143.00 L1182.25,141.37 L1178.75,139.75 L1175.23,138.12 L1171.68,136.49 L1168.12,134.86 L1164.54,133.24 L1160.93,131.61 L1157.31,129.98 L1153.67,128.35 L1150.01,126.73 L1146.33,125.10 L1142.63,123.47 L1138.91,121.84 L1135.17,120.22 L1131.42,118.59 L1127.65,116.96 L1123.86,115.33 L1120.06,113.71 L1116.23,112.08 L1112.40,110.45 L1108.54,108.82 L1104.67,107.20 L1100.79,105.57 L1096.89,103.94 L1092.97,102.31 L1089.05,100.69 L1085.10,99.06 L1081.14,97.43 L1077.17,95.80 L1073.19,94.18 L1069.19,92.55 L1065.18,90.92 L1061.16,89.29 L1057.12,87.67 L1053.08,86.04 L1049.02,84.41 L1044.95,82.78 L1040.87,81.16 L1036.78,79.53 L1032.68,77.90 L1028.57,76.27 L1024.45,74.65 L1020.32,73.02 L1016.18,71.39 L1012.03,69.76 L1007.88,68.14 L1003.71,66.51 L999.54,64.88 L995.36,63.25 L991.18,61.63 L986.98,60.00 L982.78,58.37 L978.58,56.75 L974.37,55.12 L970.15,53.49 L965.93,51.86 L961.70,50.24 L957.47,48.61 L953.24,46.98 L949.00,45.35 L944.75,43.72 L940.51,42.10 L936.26,40.47 L932.01,38.84 L927.75,37.21 L923.50,35.59 L919.24,33.96 L914.98,32.33 L910.72,30.70 L906.46,29.08 L902.20,27.45" fill="none" stroke="#d8d8d8" stroke-opacity="0.5" stroke-width="2" stroke-dasharray="2.08 3.44"/>
<path d="M902.20,613.35 L906.03,611.72 L909.87,610.10 L913.70,608.47 L917.54,606.84 L921.37,605.21 L925.20,603.59 L929.03,601.96 L932.85,600.33 L936.68,598.70 L940.50,597.08 L944.32,595.45 L948.13,593.82 L951.94,592.19 L955.75,590.56 L959.56,588.94 L963.36,587.31 L967.15,585.68 L970.94,584.05 L974.73,582.43 L978.51,580.80 L982.28,579.17 L986.05,577.54 L989.81,575.92 L993.56,574.29 L997.31,572.66 L1001.05,571.03 L1004.78,569.41 L1008.51,567.78 L1012.22,566.15 L1015.93,564.52 L1019.63,562.90 L1023.32,561.27 L1027.00,559.64 L1030.68,558.01 L1034.34,556.39 L1037.99,554.76 L1041.63,553.13 L1045.26,551.50 L1048.88,549.88 L1052.49,548.25 L1056.09,546.62 L1059.68,545.00 L1063.25,543.37 L1066.81,541.74 L1070.36,540.11 L1073.90,538.48 L1077.42,536.86 L1080.93,535.23 L1084.43,533.60 L1087.91,531.97 L1091.38,530.35 L1094.83,528.72 L1098.27,527.09 L1101.69,525.46 L1105.10,523.84 L1108.50,522.21 L1111.88,520.58 L1115.24,518.95 L1118.58,517.33 L1121.91,515.70 L1125.23,514.07 L1128.52,512.44 L1131.80,510.82 L1135.06,509.19 L1138.30,507.56 L1141.53,505.93 L1144.73,504.31 L1147.92,502.68 L1151.09,501.05 L1154.24,499.42 L1157.38,497.80 L1160.49,496.17 L1163.58,494.54 L1166.65,492.91 L1169.70,491.29 L1172.74,489.66 L1175.75,488.03 L1178.74,486.40 L1181.71,484.78 L1184.66,483.15 L1187.58,481.52 L1190.49,479.89 L1193.37,478.27 L1196.23,476.64 L1199.07,475.01 L1201.89,473.38 L1204.68,471.76 L1207.45,470.13 L1210.20,468.50 L1212.92,466.88 L1215.62,465.25 L1218.30,463.62 L1220.95,461.99 L1223.58,460.37 L1226.18,458.74 L1228.76,457.11 L1231.31,455.48 L1233.84,453.85 L1236.34,452.23 L1238.82,450.60 L1241.27,448.97 L1243.70,447.34 L1246.10,445.72 L1248.47,444.09 L1250.82,442.46 L1253.14,440.83 L1255.43,439.21 L1257.70,437.58 L1259.94,435.95 L1262.16,434.32 L1264.34,432.70 L1266.50,431.07 L1268.63,429.44 L1270.73,427.81 L1272.81,426.19 L1274.85,424.56 L1276.87,422.93 L1278.86,421.30 L1280.82,419.68 L1282.75,418.05 L1284.66,416.42 L1286.53,414.79 L1288.37,413.17 L1290.19,411.54 L1291.97,409.91 L1293.73,408.28 L1295.46,406.66 L1297.15,405.03 L1298.82,403.40 L1300.45,401.77 L1302.06,400.15 L1303.63,398.52 L1305.18,396.89 L1306.69,395.26 L1308.18,393.64 L1309.63,392.01 L1311.05,390.38 L1312.44,388.75 L1313.80,387.13 L1315.12,385.50 L1316.42,383.87 L1317.68,382.25 L1318.92,380.62 L1320.12,378.99 L1321.29,377.36 L1322.42,375.73 L1323.53,374.11 L1324.60,372.48 L1325.64,370.85 L1326.65,369.22 L1327.63,367.60 L1328.57,365.97 L1329.48,364.34 L1330.36,362.71 L1331.21,361.09 L1332.02,359.46 L1332.80,357.83 L1333.55,356.20 L1334.27,354.58 L1334.95,352.95 L1335.60,351.32 L1336.21,349.69 L1336.80,348.07 L1337.35,346.44 L1337.87,344.81 L1338.35,343.19 L1338.80,341.56 L1339.22,339.93 L1339.60,338.30 L1339.95,336.67 L1340.27,335.05 L1340.55,333.42 L1340.81,331.79 L1341.02,330.16 L1341.21,328.54 L1341.36,326.91 L1341.47,325.28 L1341.56,323.65 L1341.61,322.03 L1341.62,320.40 L1341.61,318.77 L1341.56,317.14 L1341.47,315.52 L1341.36,313.89 L1341.21,312.26 L1341.02,310.63 L1340.81,309.01 L1340.55,307.38 L1340.27,305.75 L1339.95,304.12 L1339.60,302.50 L1339.22,300.87 L1338.80,299.24 L1338.35,297.61 L1337.87,295.99 L1337.35,294.36 L1336.80,292.73 L1336.21,291.10 L1335.60,289.48 L1334.95,287.85 L1334.27,286.22 L1333.55,284.59 L1332.80,282.97 L1332.02,281.34 L1331.21,279.71 L1330.36,278.08 L1329.48,276.46 L1328.57,274.83 L1327.63,273.20 L1326.65,271.57 L1325.64,269.95 L1324.60,268.32 L1323.53,266.69 L1322.42,265.06 L1321.29,263.44 L1320.12,261.81 L1318.92,260.18 L1317.68,258.55 L1316.42,256.93 L1315.12,255.30 L1313.80,253.67 L1312.44,252.04 L1311.05,250.42 L1309.63,248.79 L1308.18,247.16 L1306.69,245.53 L1305.18,243.91 L1303.63,242.28 L1302.06,240.65 L1300.45,239.02 L1298.82,237.40 L1297.15,235.77 L1295.46,234.14 L1293.73,232.51 L1291.97,230.89 L1290.19,229.26 L1288.37,227.63 L1286.53,226.00 L1284.66,224.38 L1282.75,222.75 L1280.82,221.12 L1278.86,219.49 L1276.87,217.87 L1274.85,216.24 L1272.81,214.61 L1270.73,212.98 L1268.63,211.36 L1266.50,209.73 L1264.34,208.10 L1262.16,206.47 L1259.94,204.85 L1257.70,203.22 L1255.43,201.59 L1253.14,199.96 L1250.82,198.34 L1248.47,196.71 L1246.10,195.08 L1243.70,193.45 L1241.27,191.83 L1238.82,190.20 L1236.34,188.57 L1233.84,186.94 L1231.31,185.32 L1228.76,183.69 L1226.18,182.06 L1223.58,180.43 L1220.95,178.81 L1218.30,177.18 L1215.62,175.55 L1212.92,173.92 L1210.20,172.30 L1207.45,170.67 L1204.68,169.04 L1201.89,167.41 L1199.07,165.79 L1196.23,164.16 L1193.37,162.53 L1190.49,160.90 L1187.58,159.28 L1184.66,157.65 L1181.71,156.02 L1178.74,154.39 L1175.75,152.77 L1172.74,151.14 L1169.70,149.51 L1166.65,147.88 L1163.58,146.26 L1160.49,144.63 L1157.38,143.00 L1154.24,141.37 L1151.09,139.75 L1147.92,138.12 L1144.73,136.49 L1141.53,134.86 L1138.30,133.24 L1135.06,131.61 L1131.80,129.98 L1128.52,128.35 L1125.23,126.73 L1121.91,125.10 L1118.58,123.47 L1115.24,121.84 L1111.88,120.22 L1108.50,118.59 L1105.10,116.96 L1101.69,115.33 L1098.27,113.71 L1094.83,112.08 L1091.38,110.45 L1087.91,108.82 L1084.43,107.20 L1080.93,105.57 L1077.42,103.94 L1073.90,102.31 L1070.36,100.69 L1066.81,99.06 L1063.25,97.43 L1059.68,95.80 L1056.09,94.18 L1052.49,92.55 L1048.88,90.92 L1045.26,89.29 L1041.63,87.67 L1037.99,86.04 L1034.34,84.41 L1030.68,82.78 L1027.00,81.16 L1023.32,79.53 L1019.63,77.90 L1015.93,76.27 L1012.22,74.65 L1008.51,73.02 L1004.78,71.39 L1001.05,69.76 L997.31,68.14 L993.56,66.51 L989.81,64.88 L986.05,63.25 L982.28,61.63 L978.51,60.00 L974.73,58.37 L970.94,56.75 L967.15,55.12 L963.36,53.49 L959.56,51.86 L955.75,50.24 L951.94,48.61 L948.13,46.98 L944.32,45.35 L940.50,43.72 L936.68,42.10 L932.85,40.47 L929.03,38.84 L925.20,37.21 L921.37,35.59 L917.54,33.96 L913.70,32.33 L909.87,30.70 L906.03,29.08 L902.20,27.45" fill="none" stroke="#d8d8d8" stroke-opacity="0.5" stroke-width="2" stroke-dasharray="2.08 3.44"/>
<path d="M902.20,613.35 L905.61,611.72 L909.02,610.10 L912.42,608.47 L915.83,606.84 L919.24,605.21 L922.64,603.59 L926.05,601.96 L929.45,600.33 L932.85,598.70 L936.24,597.08 L939.64,595.45 L943.03,593.82 L946.42,592.19 L949.80,590.56 L953.18,588.94 L956.56,587.31 L959.93,585.68 L963.30,584.05 L966.67,582.43 L970.03,580.80 L973.38,579.17 L976.73,577.54 L980.07,575.92 L983.41,574.29 L986.74,572.66 L990.07,571.03 L993.38,569.41 L996.69,567.78 L1000.00,566.15 L1003.29,564.52 L1006.58,562.90 L1009.86,561.27 L1013.14,559.64 L1016.40,558.01 L1019.66,556.39 L1022.90,554.76 L1026.14,553.13 L1029.37,551.50 L1032.58,549.88 L1035.79,548.25 L1038.99,546.62 L1042.18,545.00 L1045.36,543.37 L1048.52,541.74 L1051.68,540.11 L1054.82,538.48 L1057.95,536.86 L1061.07,535.23 L1064.18,533.60 L1067.27,531.97 L1070.36,530.35 L1073.43,528.72 L1076.48,527.09 L1079.53,525.46 L1082.56,523.84 L1085.58,522.21 L1088.58,520.58 L1091.57,518.95 L1094.54,517.33 L1097.50,515.70 L1100.44,514.07 L1103.37,512.44 L1106.29,510.82 L1109.19,509.19 L1112.07,507.56 L1114.94,505.93 L1117.79,504.31 L1120.62,502.68 L1123.44,501.05 L1126.24,499.42 L1129.02,497.80 L1131.79,496.17 L1134.54,494.54 L1137.27,492.91 L1139.98,491.29 L1142.68,489.66 L1145.35,488.03 L1148.01,486.40 L1150.65,484.78 L1153.27,483.15 L1155.87,481.52 L1158.46,479.89 L1161.02,478.27 L1163.56,476.64 L1166.09,475.01 L1168.59,473.38 L1171.07,471.76 L1173.53,470.13 L1175.98,468.50 L1178.40,466.88 L1180.80,465.25 L1183.17,463.62 L1185.53,461.99 L1187.87,460.37 L1190.18,458.74 L1192.47,457.11 L1194.74,455.48 L1196.99,453.85 L1199.21,452.23 L1201.42,450.60 L1203.60,448.97 L1205.75,447.34 L1207.89,445.72 L1210.00,444.09 L1212.08,442.46 L1214.15,440.83 L1216.19,439.21 L1218.20,437.58 L1220.19,435.95 L1222.16,434.32 L1224.10,432.70 L1226.02,431.07 L1227.92,429.44 L1229.78,427.81 L1231.63,426.19 L1233.45,424.56 L1235.24,422.93 L1237.01,421.30 L1238.75,419.68 L1240.47,418.05 L1242.16,416.42 L1243.83,414.79 L1245.47,413.17 L1247.08,411.54 L1248.67,409.91 L1250.23,408.28 L1251.76,406.66 L1253.27,405.03 L1254.75,403.40 L1256.20,401.77 L1257.63,400.15 L1259.03,398.52 L1260.40,396.89 L1261.75,395.26 L1263.07,393.64 L1264.36,392.01 L1265.62,390.38 L1266.86,388.75 L1268.06,387.13 L1269.24,385.50 L1270.40,383.87 L1271.52,382.25 L1272.62,380.62 L1273.68,378.99 L1274.72,377.36 L1275.73,375.73 L1276.71,374.11 L1277.67,372.48 L1278.59,370.85 L1279.49,369.22 L1280.36,367.60 L1281.20,365.97 L1282.01,364.34 L1282.79,362.71 L1283.54,361.09 L1284.26,359.46 L1284.96,357.83 L1285.62,356.20 L1286.26,354.58 L1286.87,352.95 L1287.44,351.32 L1287.99,349.69 L1288.51,348.07 L1289.00,346.44 L1289.46,344.81 L1289.89,343.19 L1290.29,341.56 L1290.66,339.93 L1291.00,338.30 L1291.31,336.67 L1291.60,335.05 L1291.85,333.42 L1292.07,331.79 L1292.26,330.16 L1292.43,328.54 L1292.56,326.91 L1292.67,325.28 L1292.74,323.65 L1292.79,322.03 L1292.80,320.40 L1292.79,318.77 L1292.74,317.14 L1292.67,315.52 L1292.56,313.89 L1292.43,312.26 L1292.26,310.63 L1292.07,309.01 L1291.85,307.38 L1291.60,305.75 L1291.31,304.12 L1291.00,302.50 L1290.66,300.87 L1290.29,299.24 L1289.89,297.61 L1289.46,295.99 L1289.00,294.36 L1288.51,292.73 L1287.99,291.10 L1287.44,289.48 L1286.87,287.85 L1286.26,286.22 L1285.62,284.59 L1284.96,282.97 L1284.26,281.34 L1283.54,279.71 L1282.79,278.08 L1282.01,276.46 L1281.20,274.83 L1280.36,273.20 L1279.49,271.57 L1278.59,269.95 L1277.67,268.32 L1276.71,266.69 L1275.73,265.06 L1274.72,263.44 L1273.68,261.81 L1272.62,260.18 L1271.52,258.55 L1270.40,256.93 L1269.24,255.30 L1268.06,253.67 L1266.86,252.04 L1265.62,250.42 L1264.36,248.79 L1263.07,247.16 L1261.75,245.53 L1260.40,243.91 L1259.03,242.28 L1257.63,240.65 L1256.20,239.02 L1254.75,237.40 L1253.27,235.77 L1251.76,234.14 L1250.23,232.51 L1248.67,230.89 L1247.08,229.26 L1245.47,227.63 L1243.83,226.00 L1242.16,224.38 L1240.47,222.75 L1238.75,221.12 L1237.01,219.49 L1235.24,217.87 L1233.45,216.24 L1231.63,214.61 L1229.78,212.98 L1227.92,211.36 L1226.02,209.73 L1224.10,208.10 L1222.16,206.47 L1220.19,204.85 L1218.20,203.22 L1216.19,201.59 L1214.15,199.96 L1212.08,198.34 L1210.00,196.71 L1207.89,195.08 L1205.75,193.45 L1203.60,191.83 L1201.42,190.20 L1199.21,188.57 L1196.99,186.94 L1194.74,185.32 L1192.47,183.69 L1190.18,182.06 L1187.87,180.43 L1185.53,178.81 L1183.17,177.18 L1180.80,175.55 L1178.40,173.92 L1175.98,172.30 L1173.53,170.67 L1171.07,169.04 L1168.59,167.41 L1166.09,165.79 L1163.56,164.16 L1161.02,162.53 L1158.46,160.90 L1155.87,159.28 L1153.27,157.65 L1150.65,156.02 L1148.01,154.39 L1145.35,152.77 L1142.68,151.14 L1139.98,149.51 L1137.27,147.88 L1134.54,146.26 L1131.79,144.63 L1129.02,143.00 L1126.24,141.37 L1123.44,139.75 L1120.62,138.12 L1117.79,136.49 L1114.94,134.86 L1112.07,133.24 L1109.19,131.61 L1106.29,129.98 L1103.37,128.35 L1100.44,126.73 L1097.50,125.10 L1094.54,123.47 L1091.57,121.84 L1088.58,120.22 L1085.58,118.59 L1082.56,116.96 L1079.53,115.33 L1076.48,113.71 L1073.43,112.08 L1070.36,110.45 L1067.27,108.82 L1064.18,107.20 L1061.07,105.57 L1057.95,103.94 L1054.82,102.31 L1051.68,100.69 L1048.52,99.06 L1045.36,97.43 L1042.18,95.80 L1038.99,94.18 L1035.79,92.55 L1032.58,90.92 L1029.37,89.29 L1026.14,87.67 L1022.90,86.04 L1019.66,84.41 L1016.40,82.78 L1013.14,81.16 L1009.86,79.53 L1006.58,77.90 L1003.29,76.27 L1000.00,74.65 L996.69,73.02 L993.38,71.39 L990.07,69.76 L986.74,68.14 L983.41,66.51 L980.07,64.88 L976.73,63.25 L973.38,61.63 L970.03,60.00 L966.67,58.37 L963.30,56.75 L959.93,55.12 L956.56,53.49 L953.18,51.86 L949.80,50.24 L946.42,48.61 L943.03,46.98 L939.64,45.35 L936.24,43.72 L932.85,42.10 L929.45,40.47 L926.05,38.84 L922.64,37.21 L919.24,35.59 L915.83,33.96 L912.42,32.33 L909.02,30.70 L905.61,29.08 L902.20,27.45" fill="none" stroke="#d8d8d8" stroke-opacity="0.5" stroke-width="2" stroke-dasharray="2.08 3.44"/>
<path d="M902.20,613.35 L905.18,611.72 L908.16,610.10 L911.15,608.47 L914.13,606.84 L917.11,605.21 L920.09,603.59 L923.06,601.96 L926.04,600.33 L929.02,598.70 L931.99,597.08 L934.96,595.45 L937.93,593.82 L940.89,592.19 L943.85,590.56 L946.81,588.94 L949.77,587.31 L952.72,585.68 L955.67,584.05 L958.61,582.43 L961.55,580.80 L964.48,579.17 L967.41,577.54 L970.34,575.92 L973.26,574.29 L976.17,572.66 L979.08,571.03 L981.99,569.41 L984.88,567.78 L987.77,566.15 L990.66,564.52 L993.54,562.90 L996.41,561.27 L999.27,559.64 L1002.13,558.01 L1004.97,556.39 L1007.81,554.76 L1010.65,553.13 L1013.47,551.50 L1016.29,549.88 L1019.09,548.25 L1021.89,546.62 L1024.68,545.00 L1027.46,543.37 L1030.23,541.74 L1032.99,540.11 L1035.74,538.48 L1038.48,536.86 L1041.21,535.23 L1043.93,533.60 L1046.64,531.97 L1049.34,530.35 L1052.02,528.72 L1054.70,527.09 L1057.36,525.46 L1060.01,523.84 L1062.65,522.21 L1065.28,520.58 L1067.90,518.95 L1070.50,517.33 L1073.09,515.70 L1075.66,514.07 L1078.23,512.44 L1080.78,510.82 L1083.31,509.19 L1085.84,507.56 L1088.34,505.93 L1090.84,504.31 L1093.32,502.68 L1095.78,501.05 L1098.23,499.42 L1100.67,497.80 L1103.09,496.17 L1105.50,494.54 L1107.89,492.91 L1110.26,491.29 L1112.62,489.66 L1114.96,488.03 L1117.29,486.40 L1119.60,484.78 L1121.89,483.15 L1124.17,481.52 L1126.42,479.89 L1128.67,478.27 L1130.89,476.64 L1133.10,475.01 L1135.29,473.38 L1137.46,471.76 L1139.62,470.13 L1141.75,468.50 L1143.87,466.88 L1145.97,465.25 L1148.05,463.62 L1150.11,461.99 L1152.16,460.37 L1154.18,458.74 L1156.19,457.11 L1158.17,455.48 L1160.14,453.85 L1162.09,452.23 L1164.01,450.60 L1165.92,448.97 L1167.81,447.34 L1169.68,445.72 L1171.52,444.09 L1173.35,442.46 L1175.15,440.83 L1176.94,439.21 L1178.70,437.58 L1180.44,435.95 L1182.17,434.32 L1183.87,432.70 L1185.54,431.07 L1187.20,429.44 L1188.84,427.81 L1190.45,426.19 L1192.04,424.56 L1193.61,422.93 L1195.16,421.30 L1196.68,419.68 L1198.19,418.05 L1199.67,416.42 L1201.12,414.79 L1202.56,413.17 L1203.97,411.54 L1205.36,409.91 L1206.72,408.28 L1208.07,406.66 L1209.39,405.03 L1210.68,403.40 L1211.95,401.77 L1213.20,400.15 L1214.43,398.52 L1215.63,396.89 L1216.81,395.26 L1217.96,393.64 L1219.09,392.01 L1220.19,390.38 L1221.27,388.75 L1222.33,387.13 L1223.36,385.50 L1224.37,383.87 L1225.35,382.25 L1226.31,380.62 L1227.25,378.99 L1228.16,377.36 L1229.04,375.73 L1229.90,374.11 L1230.74,372.48 L1231.54,370.85 L1232.33,369.22 L1233.09,367.60 L1233.82,365.97 L1234.53,364.34 L1235.22,362.71 L1235.87,361.09 L1236.51,359.46 L1237.11,357.83 L1237.70,356.20 L1238.25,354.58 L1238.78,352.95 L1239.29,351.32 L1239.77,349.69 L1240.22,348.07 L1240.65,346.44 L1241.05,344.81 L1241.43,343.19 L1241.78,341.56 L1242.10,339.93 L1242.40,338.30 L1242.67,336.67 L1242.92,335.05 L1243.14,333.42 L1243.34,331.79 L1243.51,330.16 L1243.65,328.54 L1243.77,326.91 L1243.86,325.28 L1243.92,323.65 L1243.96,322.03 L1243.97,320.40 L1243.96,318.77 L1243.92,317.14 L1243.86,315.52 L1243.77,313.89 L1243.65,312.26 L1243.51,310.63 L1243.34,309.01 L1243.14,307.38 L1242.92,305.75 L1242.67,304.12 L1242.40,302.50 L1242.10,300.87 L1241.78,299.24 L1241.43,297.61 L1241.05,295.99 L1240.65,294.36 L1240.22,292.73 L1239.77,291.10 L1239.29,289.48 L1238.78,287.85 L1238.25,286.22 L1237.70,284.59 L1237.11,282.97 L1236.51,281.34 L1235.87,279.71 L1235.22,278.08 L1234.53,276.46 L1233.82,274.83 L1233.09,273.20 L1232.33,271.57 L1231.54,269.95 L1230.74,268.32 L1229.90,266.69 L1229.04,265.06 L1228.16,263.44 L1227.25,261.81 L1226.31,260.18 L1225.35,258.55 L1224.37,256.93 L1223.36,255.30 L1222.33,253.67 L1221.27,252.04 L1220.19,250.42 L1219.09,248.79 L1217.96,247.16 L1216.81,245.53 L1215.63,243.91 L1214.43,242.28 L1213.20,240.65 L1211.95,239.02 L1210.68,237.40 L1209.39,235.77 L1208.07,234.14 L1206.72,232.51 L1205.36,230.89 L1203.97,229.26 L1202.56,227.63 L1201.12,226.00 L1199.67,224.38 L1198.19,222.75 L1196.68,221.12 L1195.16,219.49 L1193.61,217.87 L1192.04,216.24 L1190.45,214.61 L1188.84,212.98 L1187.20,211.36 L1185.54,209.73 L1183.87,208.10 L1182.17,206.47 L1180.44,204.85 L1178.70,203.22 L1176.94,201.59 L1175.15,199.96 L1173.35,198.34 L1171.52,196.71 L1169.68,195.08 L1167.81,193.45 L1165.92,191.83 L1164.01,190.20 L1162.09,188.57 L1160.14,186.94 L1158.17,185.32 L1156.19,183.69 L1154.18,182.06 L1152.16,180.43 L1150.11,178.81 L1148.05,177.18 L1145.97,175.55 L1143.87,173.92 L1141.75,172.30 L1139.62,170.67 L1137.46,169.04 L1135.29,167.41 L1133.10,165.79 L1130.89,164.16 L1128.67,162.53 L1126.42,160.90 L1124.17,159.28 L1121.89,157.65 L1119.60,156.02 L1117.29,154.39 L1114.96,152.77 L1112.62,151.14 L1110.26,149.51 L1107.89,147.88 L1105.50,146.26 L1103.09,144.63 L1100.67,143.00 L1098.23,141.37 L1095.78,139.75 L1093.32,138.12 L1090.84,136.49 L1088.34,134.86 L1085.84,133.24 L1083.31,131.61 L1080.78,129.98 L1078.23,128.35 L1075.66,126.73 L1073.09,125.10 L1070.50,123.47 L1067.90,121.84 L1065.28,120.22 L1062.65,118.59 L1060.01,116.96 L1057.36,115.33 L1054.70,113.71 L1052.02,112.08 L1049.34,110.45 L1046.64,108.82 L1043.93,107.20 L1041.21,105.57 L1038.48,103.94 L1035.74,102.31 L1032.99,100.69 L1030.23,99.06 L1027.46,97.43 L1024.68,95.80 L1021.89,94.18 L1019.09,92.55 L1016.29,90.92 L1013.47,89.29 L1010.65,87.67 L1007.81,86.04 L1004.97,84.41 L1002.13,82.78 L999.27,81.16 L996.41,79.53 L993.54,77.90 L990.66,76.27 L987.77,74.65 L984.88,73.02 L981.99,71.39 L979.08,69.76 L976.17,68.14 L973.26,66.51 L970.34,64.88 L967.41,63.25 L964.48,61.63 L961.55,60.00 L958.61,58.37 L955.67,56.75 L952.72,55.12 L949.77,53.49 L946.81,51.86 L943.85,50.24 L940.89,48.61 L937.93,46.98 L934.96,45.35 L931.99,43.72 L929.02,42.10 L926.04,40.47 L923.06,38.84 L920.09,37.21 L917.11,35.59 L914.13,33.96 L911.15,32.33 L908.16,30.70 L905.18,29.08 L902.20,27.45" fill="none" stroke="#d8d8d8" stroke-opacity="0.5" stroke-width="2" stroke-dasharray="2.08 3.44"/>
<path d="M902.20,613.35 L904.76,611.72 L907.31,610.10 L909.87,608.47 L912.42,606.84 L914.98,605.21 L917.53,603.59 L920.08,601.96 L922.64,600.33 L925.18,598.70 L927.73,597.08 L930.28,595.45 L932.82,593.82 L935.36,592.19 L937.90,590.56 L940.44,588.94 L942.97,587.31 L945.50,585.68 L948.03,584.05 L950.55,582.43 L953.07,580.80 L955.59,579.17 L958.10,577.54 L960.60,575.92 L963.11,574.29 L965.61,572.66 L968.10,571.03 L970.59,569.41 L973.07,567.78 L975.55,566.15 L978.02,564.52 L980.49,562.90 L982.95,561.27 L985.40,559.64 L987.85,558.01 L990.29,556.39 L992.73,554.76 L995.15,553.13 L997.58,551.50 L999.99,549.88 L1002.39,548.25 L1004.79,546.62 L1007.18,545.00 L1009.57,543.37 L1011.94,541.74 L1014.31,540.11 L1016.66,538.48 L1019.01,536.86 L1021.35,535.23 L1023.68,533.60 L1026.01,531.97 L1028.32,530.35 L1030.62,528.72 L1032.91,527.09 L1035.20,525.46 L1037.47,523.84 L1039.73,522.21 L1041.98,520.58 L1044.22,518.95 L1046.46,517.33 L1048.68,515.70 L1050.88,514.07 L1053.08,512.44 L1055.27,510.82 L1057.44,509.19 L1059.60,507.56 L1061.75,505.93 L1063.89,504.31 L1066.02,502.68 L1068.13,501.05 L1070.23,499.42 L1072.32,497.80 L1074.39,496.17 L1076.45,494.54 L1078.50,492.91 L1080.54,491.29 L1082.56,489.66 L1084.57,488.03 L1086.56,486.40 L1088.54,484.78 L1090.50,483.15 L1092.46,481.52 L1094.39,479.89 L1096.31,478.27 L1098.22,476.64 L1100.11,475.01 L1101.99,473.38 L1103.85,471.76 L1105.70,470.13 L1107.53,468.50 L1109.35,466.88 L1111.15,465.25 L1112.93,463.62 L1114.70,461.99 L1116.45,460.37 L1118.19,458.74 L1119.90,457.11 L1121.61,455.48 L1123.29,453.85 L1124.96,452.23 L1126.61,450.60 L1128.25,448.97 L1129.86,447.34 L1131.47,445.72 L1133.05,444.09 L1134.61,442.46 L1136.16,440.83 L1137.69,439.21 L1139.20,437.58 L1140.70,435.95 L1142.17,434.32 L1143.63,432.70 L1145.07,431.07 L1146.49,429.44 L1147.89,427.81 L1149.27,426.19 L1150.64,424.56 L1151.98,422.93 L1153.31,421.30 L1154.61,419.68 L1155.90,418.05 L1157.17,416.42 L1158.42,414.79 L1159.65,413.17 L1160.86,411.54 L1162.05,409.91 L1163.22,408.28 L1164.37,406.66 L1165.50,405.03 L1166.61,403.40 L1167.70,401.77 L1168.77,400.15 L1169.82,398.52 L1170.85,396.89 L1171.86,395.26 L1172.85,393.64 L1173.82,392.01 L1174.77,390.38 L1175.69,388.75 L1176.60,387.13 L1177.48,385.50 L1178.35,383.87 L1179.19,382.25 L1180.01,380.62 L1180.81,378.99 L1181.59,377.36 L1182.35,375.73 L1183.09,374.11 L1183.80,372.48 L1184.50,370.85 L1185.17,369.22 L1185.82,367.60 L1186.45,365.97 L1187.06,364.34 L1187.64,362.71 L1188.21,361.09 L1188.75,359.46 L1189.27,357.83 L1189.77,356.20 L1190.24,354.58 L1190.70,352.95 L1191.13,351.32 L1191.54,349.69 L1191.93,348.07 L1192.30,346.44 L1192.64,344.81 L1192.97,343.19 L1193.27,341.56 L1193.55,339.93 L1193.80,338.30 L1194.04,336.67 L1194.25,335.05 L1194.44,333.42 L1194.60,331.79 L1194.75,330.16 L1194.87,328.54 L1194.97,326.91 L1195.05,325.28 L1195.11,323.65 L1195.14,322.03 L1195.15,320.40 L1195.14,318.77 L1195.11,317.14 L1195.05,315.52 L1194.97,313.89 L1194.87,312.26 L1194.75,310.63 L1194.60,309.01 L1194.44,307.38 L1194.25,305.75 L1194.04,304.12 L1193.80,302.50 L1193.55,300.87 L1193.27,299.24 L1192.97,297.61 L1192.64,295.99 L1192.30,294.36 L1191.93,292.73 L1191.54,291.10 L1191.13,289.48 L1190.70,287.85 L1190.24,286.22 L1189.77,284.59 L1189.27,282.97 L1188.75,281.34 L1188.21,279.71 L1187.64,278.08 L1187.06,276.46 L1186.45,274.83 L1185.82,273.20 L1185.17,271.57 L1184.50,269.95 L1183.80,268.32 L1183.09,266.69 L1182.35,265.06 L1181.59,263.44 L1180.81,261.81 L1180.01,260.18 L1179.19,258.55 L1178.35,256.93 L1177.48,255.30 L1176.60,253.67 L1175.69,252.04 L1174.77,250.42 L1173.82,248.79 L1172.85,247.16 L1171.86,245.53 L1170.85,243.91 L1169.82,242.28 L1168.77,240.65 L1167.70,239.02 L1166.61,237.40 L1165.50,235.77 L1164.37,234.14 L1163.22,232.51 L1162.05,230.89 L1160.86,229.26 L1159.65,227.63 L1158.42,226.00 L1157.17,224.38 L1155.90,222.75 L1154.61,221.12 L1153.31,219.49 L1151.98,217.87 L1150.64,216.24 L1149.27,214.61 L1147.89,212.98 L1146.49,211.36 L1145.07,209.73 L1143.63,208.10 L1142.17,206.47 L1140.70,204.85 L1139.20,203.22 L1137.69,201.59 L1136.16,199.96 L1134.61,198.34 L1133.05,196.71 L1131.47,195.08 L1129.86,193.45 L1128.25,191.83 L1126.61,190.20 L1124.96,188.57 L1123.29,186.94 L1121.61,185.32 L1119.90,183.69 L1118.19,182.06 L1116.45,180.43 L1114.70,178.81 L1112.93,177.18 L1111.15,175.55 L1109.35,173.92 L1107.53,172.30 L1105.70,170.67 L1103.85,169.04 L1101.99,167.41 L1100.11,165.79 L1098.22,164.16 L1096.31,162.53 L1094.39,160.90 L1092.46,159.28 L1090.50,157.65 L1088.54,156.02 L1086.56,154.39 L1084.57,152.77 L1082.56,151.14 L1080.54,149.51 L1078.50,147.88 L1076.45,146.26 L1074.39,144.63 L1072.32,143.00 L1070.23,141.37 L1068.13,139.75 L1066.02,138.12 L1063.89,136.49 L1061.75,134.86 L1059.60,133.24 L1057.44,131.61 L1055.27,129.98 L1053.08,128.35 L1050.88,126.73 L1048.68,125.10 L1046.46,123.47 L1044.22,121.84 L1041.98,120.22 L1039.73,118.59 L1037.47,116.96 L1035.20,115.33 L1032.91,113.71 L1030.62,112.08 L1028.32,110.45 L1026.01,108.82 L1023.68,107.20 L1021.35,105.57 L1019.01,103.94 L1016.66,102.31 L1014.31,100.69 L1011.94,99.06 L1009.57,97.43 L1007.18,95.80 L1004.79,94.18 L1002.39,92.55 L999.99,90.92 L997.58,89.29 L995.15,87.67 L992.73,86.04 L990.29,84.41 L987.85,82.78 L985.40,81.16 L982.95,79.53 L980.49,77.90 L978.02,76.27 L975.55,74.65 L973.07,73.02 L970.59,71.39 L968.10,69.76 L965.61,68.14 L963.11,66.51 L960.60,64.88 L958.10,63.25 L955.59,61.63 L953.07,60.00 L950.55,58.37 L948.03,56.75 L945.50,55.12 L942.97,53.49 L940.44,51.86 L937.90,50.24 L935.36,48.61 L932.82,46.98 L930.28,45.35 L927.73,43.72 L925.18,42.10 L922.64,40.47 L920.08,38.84 L917.53,37.21 L914.98,35.59 L912.42,33.96 L909.87,32.33 L907.31,30.70 L904.76,29.08 L902.20,27.45" fill="none" stroke="#d8d8d8" stroke-opacity="0.5" stroke-width="2" stroke-dasharray="2.08 3.44"/>
<path d="M902.20,613.35 L904.33,611.72 L906.46,610.10 L908.59,608.47 L910.72,606.84 L912.85,605.21 L914.98,603.59 L917.10,601.96 L919.23,600.33 L921.35,598.70 L923.48,597.08 L925.60,595.45 L927.72,593.82 L929.84,592.19 L931.95,590.56 L934.06,588.94 L936.18,587.31 L938.28,585.68 L940.39,584.05 L942.49,582.43 L944.59,580.80 L946.69,579.17 L948.78,577.54 L950.87,575.92 L952.96,574.29 L955.04,572.66 L957.12,571.03 L959.19,569.41 L961.26,567.78 L963.32,566.15 L965.38,564.52 L967.44,562.90 L969.49,561.27 L971.54,559.64 L973.58,558.01 L975.61,556.39 L977.64,554.76 L979.66,553.13 L981.68,551.50 L983.69,549.88 L985.70,548.25 L987.69,546.62 L989.69,545.00 L991.67,543.37 L993.65,541.74 L995.62,540.11 L997.59,538.48 L999.54,536.86 L1001.49,535.23 L1003.44,533.60 L1005.37,531.97 L1007.30,530.35 L1009.22,528.72 L1011.13,527.09 L1013.03,525.46 L1014.92,523.84 L1016.81,522.21 L1018.69,520.58 L1020.55,518.95 L1022.41,517.33 L1024.26,515.70 L1026.10,514.07 L1027.93,512.44 L1029.75,510.82 L1031.57,509.19 L1033.37,507.56 L1035.16,505.93 L1036.94,504.31 L1038.71,502.68 L1040.47,501.05 L1042.22,499.42 L1043.96,497.80 L1045.69,496.17 L1047.41,494.54 L1049.12,492.91 L1050.81,491.29 L1052.50,489.66 L1054.17,488.03 L1055.83,486.40 L1057.48,484.78 L1059.12,483.15 L1060.75,481.52 L1062.36,479.89 L1063.96,478.27 L1065.55,476.64 L1067.13,475.01 L1068.69,473.38 L1070.24,471.76 L1071.78,470.13 L1073.31,468.50 L1074.82,466.88 L1076.32,465.25 L1077.81,463.62 L1079.28,461.99 L1080.74,460.37 L1082.19,458.74 L1083.62,457.11 L1085.04,455.48 L1086.44,453.85 L1087.83,452.23 L1089.21,450.60 L1090.57,448.97 L1091.92,447.34 L1093.25,445.72 L1094.57,444.09 L1095.88,442.46 L1097.17,440.83 L1098.44,439.21 L1099.70,437.58 L1100.95,435.95 L1102.18,434.32 L1103.39,432.70 L1104.59,431.07 L1105.77,429.44 L1106.94,427.81 L1108.09,426.19 L1109.23,424.56 L1110.35,422.93 L1111.46,421.30 L1112.55,419.68 L1113.62,418.05 L1114.68,416.42 L1115.72,414.79 L1116.74,413.17 L1117.75,411.54 L1118.74,409.91 L1119.72,408.28 L1120.68,406.66 L1121.62,405.03 L1122.54,403.40 L1123.45,401.77 L1124.34,400.15 L1125.22,398.52 L1126.08,396.89 L1126.92,395.26 L1127.74,393.64 L1128.55,392.01 L1129.34,390.38 L1130.11,388.75 L1130.87,387.13 L1131.60,385.50 L1132.32,383.87 L1133.02,382.25 L1133.71,380.62 L1134.38,378.99 L1135.03,377.36 L1135.66,375.73 L1136.27,374.11 L1136.87,372.48 L1137.45,370.85 L1138.01,369.22 L1138.55,367.60 L1139.07,365.97 L1139.58,364.34 L1140.07,362.71 L1140.54,361.09 L1140.99,359.46 L1141.42,357.83 L1141.84,356.20 L1142.24,354.58 L1142.62,352.95 L1142.98,351.32 L1143.32,349.69 L1143.64,348.07 L1143.95,346.44 L1144.24,344.81 L1144.51,343.19 L1144.76,341.56 L1144.99,339.93 L1145.20,338.30 L1145.40,336.67 L1145.57,335.05 L1145.73,333.42 L1145.87,331.79 L1145.99,330.16 L1146.09,328.54 L1146.18,326.91 L1146.24,325.28 L1146.29,323.65 L1146.32,322.03 L1146.33,320.40 L1146.32,318.77 L1146.29,317.14 L1146.24,315.52 L1146.18,313.89 L1146.09,312.26 L1145.99,310.63 L1145.87,309.01 L1145.73,307.38 L1145.57,305.75 L1145.40,304.12 L1145.20,302.50 L1144.99,300.87 L1144.76,299.24 L1144.51,297.61 L1144.24,295.99 L1143.95,294.36 L1143.64,292.73 L1143.32,291.10 L1142.98,289.48 L1142.62,287.85 L1142.24,286.22 L1141.84,284.59 L1141.42,282.97 L1140.99,281.34 L1140.54,279.71 L1140.07,278.08 L1139.58,276.46 L1139.07,274.83 L1138.55,273.20 L1138.01,271.57 L1137.45,269.95 L1136.87,268.32 L1136.27,266.69 L1135.66,265.06 L1135.03,263.44 L1134.38,261.81 L1133.71,260.18 L1133.02,258.55 L1132.32,256.93 L1131.60,255.30 L1130.87,253.67 L1130.11,252.04 L1129.34,250.42 L1128.55,248.79 L1127.74,247.16 L1126.92,245.53 L1126.08,243.91 L1125.22,242.28 L1124.34,240.65 L1123.45,239.02 L1122.54,237.40 L1121.62,235.77 L1120.68,234.14 L1119.72,232.51 L1118.74,230.89 L1117.75,229.26 L1116.74,227.63 L1115.72,226.00 L1114.68,224.38 L1113.62,222.75 L1112.55,221.12 L1111.46,219.49 L1110.35,217.87 L1109.23,216.24 L1108.09,214.61 L1106.94,212.98 L1105.77,211.36 L1104.59,209.73 L1103.39,208.10 L1102.18,206.47 L1100.95,204.85 L1099.70,203.22 L1098.44,201.59 L1097.17,199.96 L1095.88,198.34 L1094.57,196.71 L1093.25,195.08 L1091.92,193.45 L1090.57,191.83 L1089.21,190.20 L1087.83,188.57 L1086.44,186.94 L1085.04,185.32 L1083.62,183.69 L1082.19,182.06 L1080.74,180.43 L1079.28,178.81 L1077.81,177.18 L1076.32,175.55 L1074.82,173.92 L1073.31,172.30 L1071.78,170.67 L1070.24,169.04 L1068.69,167.41 L1067.13,165.79 L1065.55,164.16 L1063.96,162.53 L1062.36,160.90 L1060.75,159.28 L1059.12,157.65 L1057.48,156.02 L1055.83,154.39 L1054.17,152.77 L1052.50,151.14 L1050.81,149.51 L1049.12,147.88 L1047.41,146.26 L1045.69,144.63 L1043.96,143.00 L1042.22,141.37 L1040.47,139.75 L1038.71,138.12 L1036.94,136.49 L1035.16,134.86 L1033.37,133.24 L1031.57,131.61 L1029.75,129.98 L1027.93,128.35 L1026.10,126.73 L1024.26,125.10 L1022.41,123.47 L1020.55,121.84 L1018.69,120.22 L1016.81,118.59 L1014.92,116.96 L1013.03,115.33 L1011.13,113.71 L1009.22,112.08 L1007.30,110.45 L1005.37,108.82 L1003.44,107.20 L1001.49,105.57 L999.54,103.94 L997.59,102.31 L995.62,100.69 L993.65,99.06 L991.67,97.43 L989.69,95.80 L987.69,94.18 L985.70,92.55 L983.69,90.92 L981.68,89.29 L979.66,87.67 L977.64,86.04 L975.61,84.41 L973.58,82.78 L971.54,81.16 L969.49,79.53 L967.44,77.90 L965.38,76.27 L963.32,74.65 L961.26,73.02 L959.19,71.39 L957.12,69.76 L955.04,68.14 L952.96,66.51 L950.87,64.88 L948.78,63.25 L946.69,61.63 L944.59,60.00 L942.49,58.37 L940.39,56.75 L938.28,55.12 L936.18,53.49 L934.06,51.86 L931.95,50.24 L929.84,48.61 L927.72,46.98 L925.60,45.35 L923.48,43.72 L921.35,42.10 L919.23,40.47 L917.10,38.84 L914.98,37.21 L912.85,35.59 L910.72,33.96 L908.59,32.33 L906.46,30.70 L904.33,29.08 L902.20,27.45" fill="none" stroke="#d8d8d8" stroke-opacity="0.5" stroke-width="2" stroke-dasharray="2.08 3.44"/>
<path d="M902.20,613.35 L903.90,611.72 L905.61,610.10 L907.31,608.47 L909.02,606.84 L910.72,605.21 L912.42,603.59 L914.12,601.96 L915.82,600.33 L917.52,598.70 L919.22,597.08 L920.92,595.45 L922.61,593.82 L924.31,592.19 L926.00,590.56 L927.69,588.94 L929.38,587.31 L931.07,585.68 L932.75,584.05 L934.43,582.43 L936.11,580.80 L937.79,579.17 L939.46,577.54 L941.14,575.92 L942.81,574.29 L944.47,572.66 L946.13,571.03 L947.79,569.41 L949.45,567.78 L951.10,566.15 L952.75,564.52 L954.39,562.90 L956.03,561.27 L957.67,559.64 L959.30,558.01 L960.93,556.39 L962.55,554.76 L964.17,553.13 L965.78,551.50 L967.39,549.88 L969.00,548.25 L970.60,546.62 L972.19,545.00 L973.78,543.37 L975.36,541.74 L976.94,540.11 L978.51,538.48 L980.08,536.86 L981.64,535.23 L983.19,533.60 L984.74,531.97 L986.28,530.35 L987.81,528.72 L989.34,527.09 L990.86,525.46 L992.38,523.84 L993.89,522.21 L995.39,520.58 L996.88,518.95 L998.37,517.33 L999.85,515.70 L1001.32,514.07 L1002.79,512.44 L1004.24,510.82 L1005.69,509.19 L1007.13,507.56 L1008.57,505.93 L1009.99,504.31 L1011.41,502.68 L1012.82,501.05 L1014.22,499.42 L1015.61,497.80 L1016.99,496.17 L1018.37,494.54 L1019.73,492.91 L1021.09,491.29 L1022.44,489.66 L1023.78,488.03 L1025.11,486.40 L1026.43,484.78 L1027.74,483.15 L1029.04,481.52 L1030.33,479.89 L1031.61,478.27 L1032.88,476.64 L1034.14,475.01 L1035.39,473.38 L1036.64,471.76 L1037.87,470.13 L1039.09,468.50 L1040.30,466.88 L1041.50,465.25 L1042.69,463.62 L1043.87,461.99 L1045.03,460.37 L1046.19,458.74 L1047.34,457.11 L1048.47,455.48 L1049.59,453.85 L1050.71,452.23 L1051.81,450.60 L1052.90,448.97 L1053.98,447.34 L1055.04,445.72 L1056.10,444.09 L1057.14,442.46 L1058.17,440.83 L1059.19,439.21 L1060.20,437.58 L1061.20,435.95 L1062.18,434.32 L1063.15,432.70 L1064.11,431.07 L1065.06,429.44 L1065.99,427.81 L1066.91,426.19 L1067.82,424.56 L1068.72,422.93 L1069.60,421.30 L1070.48,419.68 L1071.33,418.05 L1072.18,416.42 L1073.01,414.79 L1073.83,413.17 L1074.64,411.54 L1075.43,409.91 L1076.21,408.28 L1076.98,406.66 L1077.73,405.03 L1078.47,403.40 L1079.20,401.77 L1079.92,400.15 L1080.62,398.52 L1081.30,396.89 L1081.97,395.26 L1082.63,393.64 L1083.28,392.01 L1083.91,390.38 L1084.53,388.75 L1085.13,387.13 L1085.72,385.50 L1086.30,383.87 L1086.86,382.25 L1087.41,380.62 L1087.94,378.99 L1088.46,377.36 L1088.97,375.73 L1089.46,374.11 L1089.93,372.48 L1090.40,370.85 L1090.85,369.22 L1091.28,367.60 L1091.70,365.97 L1092.10,364.34 L1092.49,362.71 L1092.87,361.09 L1093.23,359.46 L1093.58,357.83 L1093.91,356.20 L1094.23,354.58 L1094.53,352.95 L1094.82,351.32 L1095.10,349.69 L1095.35,348.07 L1095.60,346.44 L1095.83,344.81 L1096.04,343.19 L1096.24,341.56 L1096.43,339.93 L1096.60,338.30 L1096.76,336.67 L1096.90,335.05 L1097.02,333.42 L1097.14,331.79 L1097.23,330.16 L1097.31,328.54 L1097.38,326.91 L1097.43,325.28 L1097.47,323.65 L1097.49,322.03 L1097.50,320.40 L1097.49,318.77 L1097.47,317.14 L1097.43,315.52 L1097.38,313.89 L1097.31,312.26 L1097.23,310.63 L1097.14,309.01 L1097.02,307.38 L1096.90,305.75 L1096.76,304.12 L1096.60,302.50 L1096.43,300.87 L1096.24,299.24 L1096.04,297.61 L1095.83,295.99 L1095.60,294.36 L1095.35,292.73 L1095.10,291.10 L1094.82,289.48 L1094.53,287.85 L1094.23,286.22 L1093.91,284.59 L1093.58,282.97 L1093.23,281.34 L1092.87,279.71 L1092.49,278.08 L1092.10,276.46 L1091.70,274.83 L1091.28,273.20 L1090.85,271.57 L1090.40,269.95 L1089.93,268.32 L1089.46,266.69 L1088.97,265.06 L1088.46,263.44 L1087.94,261.81 L1087.41,260.18 L1086.86,258.55 L1086.30,256.93 L1085.72,255.30 L1085.13,253.67 L1084.53,252.04 L1083.91,250.42 L1083.28,248.79 L1082.63,247.16 L1081.97,245.53 L1081.30,243.91 L1080.62,242.28 L1079.92,240.65 L1079.20,239.02 L1078.47,237.40 L1077.73,235.77 L1076.98,234.14 L1076.21,232.51 L1075.43,230.89 L1074.64,229.26 L1073.83,227.63 L1073.01,226.00 L1072.18,224.38 L1071.33,222.75 L1070.48,221.12 L1069.60,219.49 L1068.72,217.87 L1067.82,216.24 L1066.91,214.61 L1065.99,212.98 L1065.06,211.36 L1064.11,209.73 L1063.15,208.10 L1062.18,206.47 L1061.20,204.85 L1060.20,203.22 L1059.19,201.59 L1058.17,199.96 L1057.14,198.34 L1056.10,196.71 L1055.04,195.08 L1053.98,193.45 L1052.90,191.83 L1051.81,190.20 L1050.71,188.57 L1049.59,186.94 L1048.47,185.32 L1047.34,183.69 L1046.19,182.06 L1045.03,180.43 L1043.87,178.81 L1042.69,177.18 L1041.50,175.55 L1040.30,173.92 L1039.09,172.30 L1037.87,170.67 L1036.64,169.04 L1035.39,167.41 L1034.14,165.79 L1032.88,164.16 L1031.61,162.53 L1030.33,160.90 L1029.04,159.28 L1027.74,157.65 L1026.43,156.02 L1025.11,154.39 L1023.78,152.77 L1022.44,151.14 L1021.09,149.51 L1019.73,147.88 L1018.37,146.26 L1016.99,144.63 L1015.61,143.00 L1014.22,141.37 L1012.82,139.75 L1011.41,138.12 L1009.99,136.49 L1008.57,134.86 L1007.13,133.24 L1005.69,131.61 L1004.24,129.98 L1002.79,128.35 L1001.32,126.73 L999.85,125.10 L998.37,123.47 L996.88,121.84 L995.39,120.22 L993.89,118.59 L992.38,116.96 L990.86,115.33 L989.34,113.71 L987.81,112.08 L986.28,110.45 L984.74,108.82 L983.19,107.20 L981.64,105.57 L980.08,103.94 L978.51,102.31 L976.94,100.69 L975.36,99.06 L973.78,97.43 L972.19,95.80 L970.60,94.18 L969.00,92.55 L967.39,90.92 L965.78,89.29 L964.17,87.67 L962.55,86.04 L960.93,84.41 L959.30,82.78 L957.67,81.16 L956.03,79.53 L954.39,77.90 L952.75,76.27 L951.10,74.65 L949.45,73.02 L947.79,71.39 L946.13,69.76 L944.47,68.14 L942.81,66.51 L941.14,64.88 L939.46,63.25 L937.79,61.63 L936.11,60.00 L934.43,58.37 L932.75,56.75 L931.07,55.12 L929.38,53.49 L927.69,51.86 L926.00,50.24 L924.31,48.61 L922.61,46.98 L920.92,45.35 L919.22,43.72 L917.52,42.10 L915.82,40.47 L914.12,38.84 L912.42,37.21 L910.72,35.59 L909.02,33.96 L907.31,32.33 L905.61,30.70 L903.90,29.08 L902.20,27.45" fill="none" stroke="#d8d8d8" stroke-opacity="0.5" stroke-width="2" stroke-dasharray="2.08 3.44"/>
<path d="M902.20,613.35 L903.48,611.72 L904.76,610.10 L906.03,608.47 L907.31,606.84 L908.59,605.21 L909.87,603.59 L911.14,601.96 L912.42,600.33 L913.69,598.70 L914.97,597.08 L916.24,595.45 L917.51,593.82 L918.78,592.19 L920.05,590.56 L921.32,588.94 L922.59,587.31 L923.85,585.68 L925.11,584.05 L926.38,582.43 L927.64,580.80 L928.89,579.17 L930.15,577.54 L931.40,575.92 L932.65,574.29 L933.90,572.66 L935.15,571.03 L936.39,569.41 L937.64,567.78 L938.87,566.15 L940.11,564.52 L941.34,562.90 L942.57,561.27 L943.80,559.64 L945.03,558.01 L946.25,556.39 L947.46,554.76 L948.68,553.13 L949.89,551.50 L951.09,549.88 L952.30,548.25 L953.50,546.62 L954.69,545.00 L955.88,543.37 L957.07,541.74 L958.25,540.11 L959.43,538.48 L960.61,536.86 L961.78,535.23 L962.94,533.60 L964.10,531.97 L965.26,530.35 L966.41,528.72 L967.56,527.09 L968.70,525.46 L969.83,523.84 L970.97,522.21 L972.09,520.58 L973.21,518.95 L974.33,517.33 L975.44,515.70 L976.54,514.07 L977.64,512.44 L978.73,510.82 L979.82,509.19 L980.90,507.56 L981.98,505.93 L983.04,504.31 L984.11,502.68 L985.16,501.05 L986.21,499.42 L987.26,497.80 L988.30,496.17 L989.33,494.54 L990.35,492.91 L991.37,491.29 L992.38,489.66 L993.38,488.03 L994.38,486.40 L995.37,484.78 L996.35,483.15 L997.33,481.52 L998.30,479.89 L999.26,478.27 L1000.21,476.64 L1001.16,475.01 L1002.10,473.38 L1003.03,471.76 L1003.95,470.13 L1004.87,468.50 L1005.77,466.88 L1006.67,465.25 L1007.57,463.62 L1008.45,461.99 L1009.33,460.37 L1010.19,458.74 L1011.05,457.11 L1011.90,455.48 L1012.75,453.85 L1013.58,452.23 L1014.41,450.60 L1015.22,448.97 L1016.03,447.34 L1016.83,445.72 L1017.62,444.09 L1018.41,442.46 L1019.18,440.83 L1019.94,439.21 L1020.70,437.58 L1021.45,435.95 L1022.19,434.32 L1022.91,432.70 L1023.63,431.07 L1024.34,429.44 L1025.04,427.81 L1025.74,426.19 L1026.42,424.56 L1027.09,422.93 L1027.75,421.30 L1028.41,419.68 L1029.05,418.05 L1029.69,416.42 L1030.31,414.79 L1030.92,413.17 L1031.53,411.54 L1032.12,409.91 L1032.71,408.28 L1033.29,406.66 L1033.85,405.03 L1034.41,403.40 L1034.95,401.77 L1035.49,400.15 L1036.01,398.52 L1036.53,396.89 L1037.03,395.26 L1037.53,393.64 L1038.01,392.01 L1038.48,390.38 L1038.95,388.75 L1039.40,387.13 L1039.84,385.50 L1040.27,383.87 L1040.69,382.25 L1041.11,380.62 L1041.51,378.99 L1041.90,377.36 L1042.27,375.73 L1042.64,374.11 L1043.00,372.48 L1043.35,370.85 L1043.68,369.22 L1044.01,367.60 L1044.32,365.97 L1044.63,364.34 L1044.92,362.71 L1045.20,361.09 L1045.47,359.46 L1045.73,357.83 L1045.98,356.20 L1046.22,354.58 L1046.45,352.95 L1046.67,351.32 L1046.87,349.69 L1047.07,348.07 L1047.25,346.44 L1047.42,344.81 L1047.58,343.19 L1047.73,341.56 L1047.87,339.93 L1048.00,338.30 L1048.12,336.67 L1048.22,335.05 L1048.32,333.42 L1048.40,331.79 L1048.47,330.16 L1048.54,328.54 L1048.59,326.91 L1048.62,325.28 L1048.65,323.65 L1048.67,322.03 L1048.67,320.40 L1048.67,318.77 L1048.65,317.14 L1048.62,315.52 L1048.59,313.89 L1048.54,312.26 L1048.47,310.63 L1048.40,309.01 L1048.32,307.38 L1048.22,305.75 L1048.12,304.12 L1048.00,302.50 L1047.87,300.87 L1047.73,299.24 L1047.58,297.61 L1047.42,295.99 L1047.25,294.36 L1047.07,292.73 L1046.87,291.10 L1046.67,289.48 L1046.45,287.85 L1046.22,286.22 L1045.98,284.59 L1045.73,282.97 L1045.47,281.34 L1045.20,279.71 L1044.92,278.08 L1044.63,276.46 L1044.32,274.83 L1044.01,273.20 L1043.68,271.57 L1043.35,269.95 L1043.00,268.32 L1042.64,266.69 L1042.27,265.06 L1041.90,263.44 L1041.51,261.81 L1041.11,260.18 L1040.69,258.55 L1040.27,256.93 L1039.84,255.30 L1039.40,253.67 L1038.95,252.04 L1038.48,250.42 L1038.01,248.79 L1037.53,247.16 L1037.03,245.53 L1036.53,243.91 L1036.01,242.28 L1035.49,240.65 L1034.95,239.02 L1034.41,237.40 L1033.85,235.77 L1033.29,234.14 L1032.71,232.51 L1032.12,230.89 L1031.53,229.26 L1030.92,227.63 L1030.31,226.00 L1029.69,224.38 L1029.05,222.75 L1028.41,221.12 L1027.75,219.49 L1027.09,217.87 L1026.42,216.24 L1025.74,214.61 L1025.04,212.98 L1024.34,211.36 L1023.63,209.73 L1022.91,208.10 L1022.19,206.47 L1021.45,204.85 L1020.70,203.22 L1019.94,201.59 L1019.18,199.96 L1018.41,198.34 L1017.62,196.71 L1016.83,195.08 L1016.03,193.45 L1015.22,191.83 L1014.41,190.20 L1013.58,188.57 L1012.75,186.94 L1011.90,185.32 L1011.05,183.69 L1010.19,182.06 L1009.33,180.43 L1008.45,178.81 L1007.57,177.18 L1006.67,175.55 L1005.77,173.92 L1004.87,172.30 L1003.95,170.67 L1003.03,169.04 L1002.10,167.41 L1001.16,165.79 L1000.21,164.16 L999.26,162.53 L998.30,160.90 L997.33,159.28 L996.35,157.65 L995.37,156.02 L994.38,154.39 L993.38,152.77 L992.38,151.14 L991.37,149.51 L990.35,147.88 L989.33,146.26 L988.30,144.63 L987.26,143.00 L986.21,141.37 L985.16,139.75 L984.11,138.12 L983.04,136.49 L981.98,134.86 L980.90,133.24 L979.82,131.61 L978.73,129.98 L977.64,128.35 L976.54,126.73 L975.44,125.10 L974.33,123.47 L973.21,121.84 L972.09,120.22 L970.97,118.59 L969.83,116.96 L968.70,115.33 L967.56,113.71 L966.41,112.08 L965.26,110.45 L964.10,108.82 L962.94,107.20 L961.78,105.57 L960.61,103.94 L959.43,102.31 L958.25,100.69 L957.07,99.06 L955.88,97.43 L954.69,95.80 L953.50,94.18 L952.30,92.55 L951.09,90.92 L949.89,89.29 L948.68,87.67 L947.46,86.04 L946.25,84.41 L945.03,82.78 L943.80,81.16 L942.57,79.53 L941.34,77.90 L940.11,76.27 L938.87,74.65 L937.64,73.02 L936.39,71.39 L935.15,69.76 L933.90,68.14 L932.65,66.51 L931.40,64.88 L930.15,63.25 L928.89,61.63 L927.64,60.00 L926.38,58.37 L925.11,56.75 L923.85,55.12 L922.59,53.49 L921.32,51.86 L920.05,50.24 L918.78,48.61 L917.51,46.98 L916.24,45.35 L914.97,43.72 L913.69,42.10 L912.42,40.47 L911.14,38.84 L909.87,37.21 L908.59,35.59 L907.31,33.96 L906.03,32.33 L904.76,30.70 L903.48,29.08 L902.20,27.45" fill="none" stroke="#d8d8d8" stroke-opacity="0.5" stroke-width="2" stroke-dasharray="2.08 3.44"/>
<path d="M902.20,613.35 L903.05,611.72 L903.90,610.10 L904.76,608.47 L905.61,606.84 L906.46,605.21 L907.31,603.59 L908.16,601.96 L909.01,600.33 L909.86,598.70 L910.71,597.08 L911.56,595.45 L912.41,593.82 L913.25,592.19 L914.10,590.56 L914.95,588.94 L915.79,587.31 L916.63,585.68 L917.48,584.05 L918.32,582.43 L919.16,580.80 L920.00,579.17 L920.83,577.54 L921.67,575.92 L922.50,574.29 L923.34,572.66 L924.17,571.03 L925.00,569.41 L925.82,567.78 L926.65,566.15 L927.47,564.52 L928.30,562.90 L929.12,561.27 L929.93,559.64 L930.75,558.01 L931.56,556.39 L932.38,554.76 L933.18,553.13 L933.99,551.50 L934.80,549.88 L935.60,548.25 L936.40,546.62 L937.19,545.00 L937.99,543.37 L938.78,541.74 L939.57,540.11 L940.35,538.48 L941.14,536.86 L941.92,535.23 L942.69,533.60 L943.47,531.97 L944.24,530.35 L945.01,528.72 L945.77,527.09 L946.53,525.46 L947.29,523.84 L948.04,522.21 L948.79,520.58 L949.54,518.95 L950.29,517.33 L951.03,515.70 L951.76,514.07 L952.49,512.44 L953.22,510.82 L953.95,509.19 L954.67,507.56 L955.38,505.93 L956.10,504.31 L956.81,502.68 L957.51,501.05 L958.21,499.42 L958.91,497.80 L959.60,496.17 L960.28,494.54 L960.97,492.91 L961.65,491.29 L962.32,489.66 L962.99,488.03 L963.65,486.40 L964.31,484.78 L964.97,483.15 L965.62,481.52 L966.26,479.89 L966.90,478.27 L967.54,476.64 L968.17,475.01 L968.80,473.38 L969.42,471.76 L970.03,470.13 L970.64,468.50 L971.25,466.88 L971.85,465.25 L972.44,463.62 L973.03,461.99 L973.62,460.37 L974.20,458.74 L974.77,457.11 L975.34,455.48 L975.90,453.85 L976.45,452.23 L977.00,450.60 L977.55,448.97 L978.09,447.34 L978.62,445.72 L979.15,444.09 L979.67,442.46 L980.19,440.83 L980.70,439.21 L981.20,437.58 L981.70,435.95 L982.19,434.32 L982.68,432.70 L983.16,431.07 L983.63,429.44 L984.10,427.81 L984.56,426.19 L985.01,424.56 L985.46,422.93 L985.90,421.30 L986.34,419.68 L986.77,418.05 L987.19,416.42 L987.61,414.79 L988.02,413.17 L988.42,411.54 L988.82,409.91 L989.21,408.28 L989.59,406.66 L989.97,405.03 L990.34,403.40 L990.70,401.77 L991.06,400.15 L991.41,398.52 L991.75,396.89 L992.09,395.26 L992.42,393.64 L992.74,392.01 L993.06,390.38 L993.36,388.75 L993.67,387.13 L993.96,385.50 L994.25,383.87 L994.53,382.25 L994.80,380.62 L995.07,378.99 L995.33,377.36 L995.58,375.73 L995.83,374.11 L996.07,372.48 L996.30,370.85 L996.52,369.22 L996.74,367.60 L996.95,365.97 L997.15,364.34 L997.35,362.71 L997.54,361.09 L997.72,359.46 L997.89,357.83 L998.06,356.20 L998.21,354.58 L998.37,352.95 L998.51,351.32 L998.65,349.69 L998.78,348.07 L998.90,346.44 L999.01,344.81 L999.12,343.19 L999.22,341.56 L999.32,339.93 L999.40,338.30 L999.48,336.67 L999.55,335.05 L999.61,333.42 L999.67,331.79 L999.72,330.16 L999.76,328.54 L999.79,326.91 L999.82,325.28 L999.84,323.65 L999.85,322.03 L999.85,320.40 L999.85,318.77 L999.84,317.14 L999.82,315.52 L999.79,313.89 L999.76,312.26 L999.72,310.63 L999.67,309.01 L999.61,307.38 L999.55,305.75 L999.48,304.12 L999.40,302.50 L999.32,300.87 L999.22,299.24 L999.12,297.61 L999.01,295.99 L998.90,294.36 L998.78,292.73 L998.65,291.10 L998.51,289.48 L998.37,287.85 L998.21,286.22 L998.06,284.59 L997.89,282.97 L997.72,281.34 L997.54,279.71 L997.35,278.08 L997.15,276.46 L996.95,274.83 L996.74,273.20 L996.52,271.57 L996.30,269.95 L996.07,268.32 L995.83,266.69 L995.58,265.06 L995.33,263.44 L995.07,261.81 L994.80,260.18 L994.53,258.55 L994.25,256.93 L993.96,255.30 L993.67,253.67 L993.36,252.04 L993.06,250.42 L992.74,248.79 L992.42,247.16 L992.09,245.53 L991.75,243.91 L991.41,242.28 L991.06,240.65 L990.70,239.02 L990.34,237.40 L989.97,235.77 L989.59,234.14 L989.21,232.51 L988.82,230.89 L988.42,229.26 L988.02,227.63 L987.61,226.00 L987.19,224.38 L986.77,222.75 L986.34,221.12 L985.90,219.49 L985.46,217.87 L985.01,216.24 L984.56,214.61 L984.10,212.98 L983.63,211.36 L983.16,209.73 L982.68,208.10 L982.19,206.47 L981.70,204.85 L981.20,203.22 L980.70,201.59 L980.19,199.96 L979.67,198.34 L979.15,196.71 L978.62,195.08 L978.09,193.45 L977.55,191.83 L977.00,190.20 L976.45,188.57 L975.90,186.94 L975.34,185.32 L974.77,183.69 L974.20,182.06 L973.62,180.43 L973.03,178.81 L972.44,177.18 L971.85,175.55 L971.25,173.92 L970.64,172.30 L970.03,170.67 L969.42,169.04 L968.80,167.41 L968.17,165.79 L967.54,164.16 L966.90,162.53 L966.26,160.90 L965.62,159.28 L964.97,157.65 L964.31,156.02 L963.65,154.39 L962.99,152.77 L962.32,151.14 L961.65,149.51 L960.97,147.88 L960.28,146.26 L959.60,144.63 L958.91,143.00 L958.21,141.37 L957.51,139.75 L956.81,138.12 L956.10,136.49 L955.38,134.86 L954.67,133.24 L953.95,131.61 L953.22,129.98 L952.49,128.35 L951.76,126.73 L951.03,125.10 L950.29,123.47 L949.54,121.84 L948.79,120.22 L948.04,118.59 L947.29,116.96 L946.53,115.33 L945.77,113.71 L945.01,112.08 L944.24,110.45 L943.47,108.82 L942.69,107.20 L941.92,105.57 L941.14,103.94 L940.35,102.31 L939.57,100.69 L938.78,99.06 L937.99,97.43 L937.19,95.80 L936.40,94.18 L935.60,92.55 L934.80,90.92 L933.99,89.29 L933.18,87.67 L932.38,86.04 L931.56,84.41 L930.75,82.78 L929.93,81.16 L929.12,79.53 L928.30,77.90 L927.47,76.27 L926.65,74.65 L925.82,73.02 L925.00,71.39 L924.17,69.76 L923.34,68.14 L922.50,66.51 L921.67,64.88 L920.83,63.25 L920.00,61.63 L919.16,60.00 L918.32,58.37 L917.48,56.75 L916.63,55.12 L915.79,53.49 L914.95,51.86 L914.10,50.24 L913.25,48.61 L912.41,46.98 L911.56,45.35 L910.71,43.72 L909.86,42.10 L909.01,40.47 L908.16,38.84 L907.31,37.21 L906.46,35.59 L905.61,33.96 L904.76,32.33 L903.90,30.70 L903.05,29.08 L902.20,27.45" fill="none" stroke="#d8d8d8" stroke-opacity="0.5" stroke-width="2" stroke-dasharray="2.08 3.44"/>
<path d="M902.20,613.35 L902.63,611.72 L903.05,610.10 L903.48,608.47 L903.90,606.84 L904.33,605.21 L904.76,603.59 L905.18,601.96 L905.61,600.33 L906.03,598.70 L906.46,597.08 L906.88,595.45 L907.30,593.82 L907.73,592.19 L908.15,590.56 L908.57,588.94 L909.00,587.31 L909.42,585.68 L909.84,584.05 L910.26,582.43 L910.68,580.80 L911.10,579.17 L911.52,577.54 L911.93,575.92 L912.35,574.29 L912.77,572.66 L913.18,571.03 L913.60,569.41 L914.01,567.78 L914.42,566.15 L914.84,564.52 L915.25,562.90 L915.66,561.27 L916.07,559.64 L916.48,558.01 L916.88,556.39 L917.29,554.76 L917.69,553.13 L918.10,551.50 L918.50,549.88 L918.90,548.25 L919.30,546.62 L919.70,545.00 L920.09,543.37 L920.49,541.74 L920.88,540.11 L921.28,538.48 L921.67,536.86 L922.06,535.23 L922.45,533.60 L922.83,531.97 L923.22,530.35 L923.60,528.72 L923.99,527.09 L924.37,525.46 L924.74,523.84 L925.12,522.21 L925.50,520.58 L925.87,518.95 L926.24,517.33 L926.61,515.70 L926.98,514.07 L927.35,512.44 L927.71,510.82 L928.07,509.19 L928.43,507.56 L928.79,505.93 L929.15,504.31 L929.50,502.68 L929.85,501.05 L930.20,499.42 L930.55,497.80 L930.90,496.17 L931.24,494.54 L931.58,492.91 L931.92,491.29 L932.26,489.66 L932.59,488.03 L932.93,486.40 L933.26,484.78 L933.58,483.15 L933.91,481.52 L934.23,479.89 L934.55,478.27 L934.87,476.64 L935.19,475.01 L935.50,473.38 L935.81,471.76 L936.12,470.13 L936.42,468.50 L936.72,466.88 L937.02,465.25 L937.32,463.62 L937.62,461.99 L937.91,460.37 L938.20,458.74 L938.48,457.11 L938.77,455.48 L939.05,453.85 L939.33,452.23 L939.60,450.60 L939.87,448.97 L940.14,447.34 L940.41,445.72 L940.67,444.09 L940.94,442.46 L941.19,440.83 L941.45,439.21 L941.70,437.58 L941.95,435.95 L942.20,434.32 L942.44,432.70 L942.68,431.07 L942.91,429.44 L943.15,427.81 L943.38,426.19 L943.61,424.56 L943.83,422.93 L944.05,421.30 L944.27,419.68 L944.48,418.05 L944.70,416.42 L944.90,414.79 L945.11,413.17 L945.31,411.54 L945.51,409.91 L945.70,408.28 L945.90,406.66 L946.08,405.03 L946.27,403.40 L946.45,401.77 L946.63,400.15 L946.80,398.52 L946.98,396.89 L947.14,395.26 L947.31,393.64 L947.47,392.01 L947.63,390.38 L947.78,388.75 L947.93,387.13 L948.08,385.50 L948.22,383.87 L948.36,382.25 L948.50,380.62 L948.64,378.99 L948.77,377.36 L948.89,375.73 L949.01,374.11 L949.13,372.48 L949.25,370.85 L949.36,369.22 L949.47,367.60 L949.57,365.97 L949.68,364.34 L949.77,362.71 L949.87,361.09 L949.96,359.46 L950.04,357.83 L950.13,356.20 L950.21,354.58 L950.28,352.95 L950.36,351.32 L950.42,349.69 L950.49,348.07 L950.55,346.44 L950.61,344.81 L950.66,343.19 L950.71,341.56 L950.76,339.93 L950.80,338.30 L950.84,336.67 L950.87,335.05 L950.91,333.42 L950.93,331.79 L950.96,330.16 L950.98,328.54 L951.00,326.91 L951.01,325.28 L951.02,323.65 L951.02,322.03 L951.03,320.40 L951.02,318.77 L951.02,317.14 L951.01,315.52 L951.00,313.89 L950.98,312.26 L950.96,310.63 L950.93,309.01 L950.91,307.38 L950.87,305.75 L950.84,304.12 L950.80,302.50 L950.76,300.87 L950.71,299.24 L950.66,297.61 L950.61,295.99 L950.55,294.36 L950.49,292.73 L950.42,291.10 L950.36,289.48 L950.28,287.85 L950.21,286.22 L950.13,284.59 L950.04,282.97 L949.96,281.34 L949.87,279.71 L949.77,278.08 L949.68,276.46 L949.57,274.83 L949.47,273.20 L949.36,271.57 L949.25,269.95 L949.13,268.32 L949.01,266.69 L948.89,265.06 L948.77,263.44 L948.64,261.81 L948.50,260.18 L948.36,258.55 L948.22,256.93 L948.08,255.30 L947.93,253.67 L947.78,252.04 L947.63,250.42 L947.47,248.79 L947.31,247.16 L947.14,245.53 L946.98,243.91 L946.80,242.28 L946.63,240.65 L946.45,239.02 L946.27,237.40 L946.08,235.77 L945.90,234.14 L945.70,232.51 L945.51,230.89 L945.31,229.26 L945.11,227.63 L944.90,226.00 L944.70,224.38 L944.48,222.75 L944.27,221.12 L944.05,219.49 L943.83,217.87 L943.61,216.24 L943.38,214.61 L943.15,212.98 L942.91,211.36 L942.68,209.73 L942.44,208.10 L942.20,206.47 L941.95,204.85 L941.70,203.22 L941.45,201.59 L941.19,199.96 L940.94,198.34 L940.67,196.71 L940.41,195.08 L940.14,193.45 L939.87,191.83 L939.60,190.20 L939.33,188.57 L939.05,186.94 L938.77,185.32 L938.48,183.69 L938.20,182.06 L937.91,180.43 L937.62,178.81 L937.32,177.18 L937.02,175.55 L936.72,173.92 L936.42,172.30 L936.12,170.67 L935.81,169.04 L935.50,167.41 L935.19,165.79 L934.87,164.16 L934.55,162.53 L934.23,160.90 L933.91,159.28 L933.58,157.65 L933.26,156.02 L932.93,154.39 L932.59,152.77 L932.26,151.14 L931.92,149.51 L931.58,147.88 L931.24,146.26 L930.90,144.63 L930.55,143.00 L930.20,141.37 L929.85,139.75 L929.50,138.12 L929.15,136.49 L928.79,134.86 L928.43,133.24 L928.07,131.61 L927.71,129.98 L927.35,128.35 L926.98,126.73 L926.61,125.10 L926.24,123.47 L925.87,121.84 L925.50,120.22 L925.12,118.59 L924.74,116.96 L924.37,115.33 L923.99,113.71 L923.60,112.08 L923.22,110.45 L922.83,108.82 L922.45,107.20 L922.06,105.57 L921.67,103.94 L921.28,102.31 L920.88,100.69 L920.49,99.06 L920.09,97.43 L919.70,95.80 L919.30,94.18 L918.90,92.55 L918.50,90.92 L918.10,89.29 L917.69,87.67 L917.29,86.04 L916.88,84.41 L916.48,82.78 L916.07,81.16 L915.66,79.53 L915.25,77.90 L914.84,76.27 L914.42,74.65 L914.01,73.02 L913.60,71.39 L913.18,69.76 L912.77,68.14 L912.35,66.51 L911.93,64.88 L911.52,63.25 L911.10,61.63 L910.68,60.00 L910.26,58.37 L909.84,56.75 L909.42,55.12 L909.00,53.49 L908.57,51.86 L908.15,50.24 L907.73,48.61 L907.30,46.98 L906.88,45.35 L906.46,43.72 L906.03,42.10 L905.61,40.47 L905.18,38.84 L904.76,37.21 L904.33,35.59 L903.90,33.96 L903.48,32.33 L903.05,30.70 L902.63,29.08 L902.20,27.45" fill="none" stroke="#d8d8d8" stroke-opacity="0.5" stroke-width="2" stroke-dasharray="2.08 3.44"/>
<path d="M902.20,613.35 L902.20,611.72 L902.20,610.10 L902.20,608.47 L902.20,606.84 L902.20,605.21 L902.20,603.59 L902.20,601.96 L902.20,600.33 L902.20,598.70 L902.20,597.08 L902.20,595.45 L902.20,593.82 L902.20,592.19 L902.20,590.56 L902.20,588.94 L902.20,587.31 L902.20,585.68 L902.20,584.05 L902.20,582.43 L902.20,580.80 L902.20,579.17 L902.20,577.54 L902.20,575.92 L902.20,574.29 L902.20,572.66 L902.20,571.03 L902.20,569.41 L902.20,567.78 L902.20,566.15 L902.20,564.52 L902.20,562.90 L902.20,561.27 L902.20,559.64 L902.20,558.01 L902.20,556.39 L902.20,554.76 L902.20,553.13 L902.20,551.50 L902.20,549.88 L902.20,548.25 L902.20,546.62 L902.20,545.00 L902.20,543.37 L902.20,541.74 L902.20,540.11 L902.20,538.48 L902.20,536.86 L902.20,535.23 L902.20,533.60 L902.20,531.97 L902.20,530.35 L902.20,528.72 L902.20,527.09 L902.20,525.46 L902.20,523.84 L902.20,522.21 L902.20,520.58 L902.20,518.95 L902.20,517.33 L902.20,515.70 L902.20,514.07 L902.20,512.44 L902.20,510.82 L902.20,509.19 L902.20,507.56 L902.20,505.93 L902.20,504.31 L902.20,502.68 L902.20,501.05 L902.20,499.42 L902.20,497.80 L902.20,496.17 L902.20,494.54 L902.20,492.91 L902.20,491.29 L902.20,489.66 L902.20,488.03 L902.20,486.40 L902.20,484.78 L902.20,483.15 L902.20,481.52 L902.20,479.89 L902.20,478.27 L902.20,476.64 L902.20,475.01 L902.20,473.38 L902.20,471.76 L902.20,470.13 L902.20,468.50 L902.20,466.88 L902.20,465.25 L902.20,463.62 L902.20,461.99 L902.20,460.37 L902.20,458.74 L902.20,457.11 L902.20,455.48 L902.20,453.85 L902.20,452.23 L902.20,450.60 L902.20,448.97 L902.20,447.34 L902.20,445.72 L902.20,444.09 L902.20,442.46 L902.20,440.83 L902.20,439.21 L902.20,437.58 L902.20,435.95 L902.20,434.32 L902.20,432.70 L902.20,431.07 L902.20,429.44 L902.20,427.81 L902.20,426.19 L902.20,424.56 L902.20,422.93 L902.20,421.30 L902.20,419.68 L902.20,418.05 L902.20,416.42 L902.20,414.79 L902.20,413.17 L902.20,411.54 L902.20,409.91 L902.20,408.28 L902.20,406.66 L902.20,405.03 L902.20,403.40 L902.20,401.77 L902.20,400.15 L902.20,398.52 L902.20,396.89 L902.20,395.26 L902.20,393.64 L902.20,392.01 L902.20,390.38 L902.20,388.75 L902.20,387.13 L902.20,385.50 L902.20,383.87 L902.20,382.25 L902.20,380.62 L902.20,378.99 L902.20,377.36 L902.20,375.73 L902.20,374.11 L902.20,372.48 L902.20,370.85 L902.20,369.22 L902.20,367.60 L902.20,365.97 L902.20,364.34 L902.20,362.71 L902.20,361.09 L902.20,359.46 L902.20,357.83 L902.20,356.20 L902.20,354.58 L902.20,352.95 L902.20,351.32 L902.20,349.69 L902.20,348.07 L902.20,346.44 L902.20,344.81 L902.20,343.19 L902.20,341.56 L902.20,339.93 L902.20,338.30 L902.20,336.67 L902.20,335.05 L902.20,333.42 L902.20,331.79 L902.20,330.16 L902.20,328.54 L902.20,326.91 L902.20,325.28 L902.20,323.65 L902.20,322.03 L902.20,320.40 L902.20,318.77 L902.20,317.14 L902.20,315.52 L902.20,313.89 L902.20,312.26 L902.20,310.63 L902.20,309.01 L902.20,307.38 L902.20,305.75 L902.20,304.12 L902.20,302.50 L902.20,300.87 L902.20,299.24 L902.20,297.61 L902.20,295.99 L902.20,294.36 L902.20,292.73 L902.20,291.10 L902.20,289.48 L902.20,287.85 L902.20,286.22 L902.20,284.59 L902.20,282.97 L902.20,281.34 L902.20,279.71 L902.20,278.08 L902.20,276.46 L902.20,274.83 L902.20,273.20 L902.20,271.57 L902.20,269.95 L902.20,268.32 L902.20,266.69 L902.20,265.06 L902.20,263.44 L902.20,261.81 L902.20,260.18 L902.20,258.55 L902.20,256.93 L902.20,255.30 L902.20,253.67 L902.20,252.04 L902.20,250.42 L902.20,248.79 L902.20,247.16 L902.20,245.53 L902.20,243.91 L902.20,242.28 L902.20,240.65 L902.20,239.02 L902.20,237.40 L902.20,235.77 L902.20,234.14 L902.20,232.51 L902.20,230.89 L902.20,229.26 L902.20,227.63 L902.20,226.00 L902.20,224.38 L902.20,222.75 L902.20,221.12 L902.20,219.49 L902.20,217.87 L902.20,216.24 L902.20,214.61 L902.20,212.98 L902.20,211.36 L902.20,209.73 L902.20,208.10 L902.20,206.47 L902.20,204.85 L902.20,203.22 L902.20,201.59 L902.20,199.96 L902.20,198.34 L902.20,196.71 L902.20,195.08 L902.20,193.45 L902.20,191.83 L902.20,190.20 L902.20,188.57 L902.20,186.94 L902.20,185.32 L902.20,183.69 L902.20,182.06 L902.20,180.43 L902.20,178.81 L902.20,177.18 L902.20,175.55 L902.20,173.92 L902.20,172.30 L902.20,170.67 L902.20,169.04 L902.20,167.41 L902.20,165.79 L902.20,164.16 L902.20,162.53 L902.20,160.90 L902.20,159.28 L902.20,157.65 L902.20,156.02 L902.20,154.39 L902.20,152.77 L902.20,151.14 L902.20,149.51 L902.20,147.88 L902.20,146.26 L902.20,144.63 L902.20,143.00 L902.20,141.37 L902.20,139.75 L902.20,138.12 L902.20,136.49 L902.20,134.86 L902.20,133.24 L902.20,131.61 L902.20,129.98 L902.20,128.35 L902.20,126.73 L902.20,125.10 L902.20,123.47 L902.20,121.84 L902.20,120.22 L902.20,118.59 L902.20,116.96 L902.20,115.33 L902.20,113.71 L902.20,112.08 L902.20,110.45 L902.20,108.82 L902.20,107.20 L902.20,105.57 L902.20,103.94 L902.20,102.31 L902.20,100.69 L902.20,99.06 L902.20,97.43 L902.20,95.80 L902.20,94.18 L902.20,92.55 L902.20,90.92 L902.20,89.29 L902.20,87.67 L902.20,86.04 L902.20,84.41 L902.20,82.78 L902.20,81.16 L902.20,79.53 L902.20,77.90 L902.20,76.27 L902.20,74.65 L902.20,73.02 L902.20,71.39 L902.20,69.76 L902.20,68.14 L902.20,66.51 L902.20,64.88 L902.20,63.25 L902.20,61.63 L902.20,60.00 L902.20,58.37 L902.20,56.75 L902.20,55.12 L902.20,53.49 L902.20,51.86 L902.20,50.24 L902.20,48.61 L902.20,46.98 L902.20,45.35 L902.20,43.72 L902.20,42.10 L902.20,40.47 L902.20,38.84 L902.20,37.21 L902.20,35.59 L902.20,33.96 L902.20,32.33 L902.20,30.70 L902.20,29.08 L902.20,27.45" fill="none" stroke="#d8d8d8" stroke-opacity="0.5" stroke-width="2" stroke-dasharray="2.08 3.44"/>
<path d="M902.20,613.35 L901.77,611.72 L901.35,610.10 L900.92,608.47 L900.50,606.84 L900.07,605.21 L899.64,603.59 L899.22,601.96 L898.79,600.33 L898.37,598.70 L897.94,597.08 L897.52,595.45 L897.10,593.82 L896.67,592.19 L896.25,590.56 L895.83,588.94 L895.40,587.31 L894.98,585.68 L894.56,584.05 L894.14,582.43 L893.72,580.80 L893.30,579.17 L892.88,577.54 L892.47,575.92 L892.05,574.29 L891.63,572.66 L891.22,571.03 L890.80,569.41 L890.39,567.78 L889.98,566.15 L889.56,564.52 L889.15,562.90 L888.74,561.27 L888.33,559.64 L887.92,558.01 L887.52,556.39 L887.11,554.76 L886.71,553.13 L886.30,551.50 L885.90,549.88 L885.50,548.25 L885.10,546.62 L884.70,545.00 L884.31,543.37 L883.91,541.74 L883.52,540.11 L883.12,538.48 L882.73,536.86 L882.34,535.23 L881.95,533.60 L881.57,531.97 L881.18,530.35 L880.80,528.72 L880.41,527.09 L880.03,525.46 L879.66,523.84 L879.28,522.21 L878.90,520.58 L878.53,518.95 L878.16,517.33 L877.79,515.70 L877.42,514.07 L877.05,512.44 L876.69,510.82 L876.33,509.19 L875.97,507.56 L875.61,505.93 L875.25,504.31 L874.90,502.68 L874.55,501.05 L874.20,499.42 L873.85,497.80 L873.50,496.17 L873.16,494.54 L872.82,492.91 L872.48,491.29 L872.14,489.66 L871.81,488.03 L871.47,486.40 L871.14,484.78 L870.82,483.15 L870.49,481.52 L870.17,479.89 L869.85,478.27 L869.53,476.64 L869.21,475.01 L868.90,473.38 L868.59,471.76 L868.28,470.13 L867.98,468.50 L867.68,466.88 L867.38,465.25 L867.08,463.62 L866.78,461.99 L866.49,460.37 L866.20,458.74 L865.92,457.11 L865.63,455.48 L865.35,453.85 L865.07,452.23 L864.80,450.60 L864.53,448.97 L864.26,447.34 L863.99,445.72 L863.73,444.09 L863.46,442.46 L863.21,440.83 L862.95,439.21 L862.70,437.58 L862.45,435.95 L862.20,434.32 L861.96,432.70 L861.72,431.07 L861.49,429.44 L861.25,427.81 L861.02,426.19 L860.79,424.56 L860.57,422.93 L860.35,421.30 L860.13,419.68 L859.92,418.05 L859.70,416.42 L859.50,414.79 L859.29,413.17 L859.09,411.54 L858.89,409.91 L858.70,408.28 L858.50,406.66 L858.32,405.03 L858.13,403.40 L857.95,401.77 L857.77,400.15 L857.60,398.52 L857.42,396.89 L857.26,395.26 L857.09,393.64 L856.93,392.01 L856.77,390.38 L856.62,388.75 L856.47,387.13 L856.32,385.50 L856.18,383.87 L856.04,382.25 L855.90,380.62 L855.76,378.99 L855.63,377.36 L855.51,375.73 L855.39,374.11 L855.27,372.48 L855.15,370.85 L855.04,369.22 L854.93,367.60 L854.83,365.97 L854.72,364.34 L854.63,362.71 L854.53,361.09 L854.44,359.46 L854.36,357.83 L854.27,356.20 L854.19,354.58 L854.12,352.95 L854.04,351.32 L853.98,349.69 L853.91,348.07 L853.85,346.44 L853.79,344.81 L853.74,343.19 L853.69,341.56 L853.64,339.93 L853.60,338.30 L853.56,336.67 L853.53,335.05 L853.49,333.42 L853.47,331.79 L853.44,330.16 L853.42,328.54 L853.40,326.91 L853.39,325.28 L853.38,323.65 L853.38,322.03 L853.38,320.40 L853.38,318.77 L853.38,317.14 L853.39,315.52 L853.40,313.89 L853.42,312.26 L853.44,310.63 L853.47,309.01 L853.49,307.38 L853.53,305.75 L853.56,304.12 L853.60,302.50 L853.64,300.87 L853.69,299.24 L853.74,297.61 L853.79,295.99 L853.85,294.36 L853.91,292.73 L853.98,291.10 L854.04,289.48 L854.12,287.85 L854.19,286.22 L854.27,284.59 L854.36,282.97 L854.44,281.34 L854.53,279.71 L854.63,278.08 L854.72,276.46 L854.83,274.83 L854.93,273.20 L855.04,271.57 L855.15,269.95 L855.27,268.32 L855.39,266.69 L855.51,265.06 L855.63,263.44 L855.76,261.81 L855.90,260.18 L856.04,258.55 L856.18,256.93 L856.32,255.30 L856.47,253.67 L856.62,252.04 L856.77,250.42 L856.93,248.79 L857.09,247.16 L857.26,245.53 L857.42,243.91 L857.60,242.28 L857.77,240.65 L857.95,239.02 L858.13,237.40 L858.32,235.77 L858.50,234.14 L858.70,232.51 L858.89,230.89 L859.09,229.26 L859.29,227.63 L859.50,226.00 L859.70,224.38 L859.92,222.75 L860.13,221.12 L860.35,219.49 L860.57,217.87 L860.79,216.24 L861.02,214.61 L861.25,212.98 L861.49,211.36 L861.72,209.73 L861.96,208.10 L862.20,206.47 L862.45,204.85 L862.70,203.22 L862.95,201.59 L863.21,199.96 L863.46,198.34 L863.73,196.71 L863.99,195.08 L864.26,193.45 L864.53,191.83 L864.80,190.20 L865.07,188.57 L865.35,186.94 L865.63,185.32 L865.92,183.69 L866.20,182.06 L866.49,180.43 L866.78,178.81 L867.08,177.18 L867.38,175.55 L867.68,173.92 L867.98,172.30 L868.28,170.67 L868.59,169.04 L868.90,167.41 L869.21,165.79 L869.53,164.16 L869.85,162.53 L870.17,160.90 L870.49,159.28 L870.82,157.65 L871.14,156.02 L871.47,154.39 L871.81,152.77 L872.14,151.14 L872.48,149.51 L872.82,147.88 L873.16,146.26 L873.50,144.63 L873.85,143.00 L874.20,141.37 L874.55,139.75 L874.90,138.12 L875.25,136.49 L875.61,134.86 L875.97,133.24 L876.33,131.61 L876.69,129.98 L877.05,128.35 L877.42,126.73 L877.79,125.10 L878.16,123.47 L878.53,121.84 L878.90,120.22 L879.28,118.59 L879.66,116.96 L880.03,115.33 L880.41,113.71 L880.80,112.08 L881.18,110.45 L881.57,108.82 L881.95,107.20 L882.34,105.57 L882.73,103.94 L883.12,102.31 L883.52,100.69 L883.91,99.06 L884.31,97.43 L884.70,95.80 L885.10,94.18 L885.50,92.55 L885.90,90.92 L886.30,89.29 L886.71,87.67 L887.11,86.04 L887.52,84.41 L887.92,82.78 L888.33,81.16 L888.74,79.53 L889.15,77.90 L889.56,76.27 L889.98,74.65 L890.39,73.02 L890.80,71.39 L891.22,69.76 L891.63,68.14 L892.05,66.51 L892.47,64.88 L892.88,63.25 L893.30,61.63 L893.72,60.00 L894.14,58.37 L894.56,56.75 L894.98,55.12 L895.40,53.49 L895.83,51.86 L896.25,50.24 L896.67,48.61 L897.10,46.98 L897.52,45.35 L897.94,43.72 L898.37,42.10 L898.79,40.47 L899.22,38.84 L899.64,37.21 L900.07,35.59 L900.50,33.96 L900.92,32.33 L901.35,30.70 L901.77,29.08 L902.20,27.45" fill="none" stroke="#d8d8d8" stroke-opacity="0.5" stroke-width="2" stroke-dasharray="2.08 3.44"/>
<path d="M902.20,613.35 L901.35,611.72 L900.50,610.10 L899.64,608.47 L898.79,606.84 L897.94,605.21 L897.09,603.59 L896.24,601.96 L895.39,600.33 L894.54,598.70 L893.69,597.08 L892.84,595.45 L891.99,593.82 L891.15,592.19 L890.30,590.56 L889.45,588.94 L888.61,587.31 L887.77,585.68 L886.92,584.05 L886.08,582.43 L885.24,580.80 L884.40,579.17 L883.57,577.54 L882.73,575.92 L881.90,574.29 L881.06,572.66 L880.23,571.03 L879.40,569.41 L878.58,567.78 L877.75,566.15 L876.93,564.52 L876.10,562.90 L875.28,561.27 L874.47,559.64 L873.65,558.01 L872.84,556.39 L872.02,554.76 L871.22,553.13 L870.41,551.50 L869.60,549.88 L868.80,548.25 L868.00,546.62 L867.21,545.00 L866.41,543.37 L865.62,541.74 L864.83,540.11 L864.05,538.48 L863.26,536.86 L862.48,535.23 L861.71,533.60 L860.93,531.97 L860.16,530.35 L859.39,528.72 L858.63,527.09 L857.87,525.46 L857.11,523.84 L856.36,522.21 L855.61,520.58 L854.86,518.95 L854.11,517.33 L853.38,515.70 L852.64,514.07 L851.91,512.44 L851.18,510.82 L850.45,509.19 L849.73,507.56 L849.02,505.93 L848.30,504.31 L847.59,502.68 L846.89,501.05 L846.19,499.42 L845.49,497.80 L844.80,496.17 L844.12,494.54 L843.43,492.91 L842.75,491.29 L842.08,489.66 L841.41,488.03 L840.75,486.40 L840.09,484.78 L839.43,483.15 L838.78,481.52 L838.14,479.89 L837.50,478.27 L836.86,476.64 L836.23,475.01 L835.60,473.38 L834.98,471.76 L834.37,470.13 L833.76,468.50 L833.15,466.88 L832.55,465.25 L831.96,463.62 L831.37,461.99 L830.78,460.37 L830.20,458.74 L829.63,457.11 L829.06,455.48 L828.50,453.85 L827.95,452.23 L827.40,450.60 L826.85,448.97 L826.31,447.34 L825.78,445.72 L825.25,444.09 L824.73,442.46 L824.21,440.83 L823.70,439.21 L823.20,437.58 L822.70,435.95 L822.21,434.32 L821.72,432.70 L821.24,431.07 L820.77,429.44 L820.30,427.81 L819.84,426.19 L819.39,424.56 L818.94,422.93 L818.50,421.30 L818.06,419.68 L817.63,418.05 L817.21,416.42 L816.79,414.79 L816.38,413.17 L815.98,411.54 L815.58,409.91 L815.19,408.28 L814.81,406.66 L814.43,405.03 L814.06,403.40 L813.70,401.77 L813.34,400.15 L812.99,398.52 L812.65,396.89 L812.31,395.26 L811.98,393.64 L811.66,392.01 L811.34,390.38 L811.04,388.75 L810.73,387.13 L810.44,385.50 L810.15,383.87 L809.87,382.25 L809.60,380.62 L809.33,378.99 L809.07,377.36 L808.82,375.73 L808.57,374.11 L808.33,372.48 L808.10,370.85 L807.88,369.22 L807.66,367.60 L807.45,365.97 L807.25,364.34 L807.05,362.71 L806.86,361.09 L806.68,359.46 L806.51,357.83 L806.34,356.20 L806.19,354.58 L806.03,352.95 L805.89,351.32 L805.75,349.69 L805.62,348.07 L805.50,346.44 L805.39,344.81 L805.28,343.19 L805.18,341.56 L805.08,339.93 L805.00,338.30 L804.92,336.67 L804.85,335.05 L804.79,333.42 L804.73,331.79 L804.68,330.16 L804.64,328.54 L804.61,326.91 L804.58,325.28 L804.56,323.65 L804.55,322.03 L804.55,320.40 L804.55,318.77 L804.56,317.14 L804.58,315.52 L804.61,313.89 L804.64,312.26 L804.68,310.63 L804.73,309.01 L804.79,307.38 L804.85,305.75 L804.92,304.12 L805.00,302.50 L805.08,300.87 L805.18,299.24 L805.28,297.61 L805.39,295.99 L805.50,294.36 L805.62,292.73 L805.75,291.10 L805.89,289.48 L806.03,287.85 L806.19,286.22 L806.34,284.59 L806.51,282.97 L806.68,281.34 L806.86,279.71 L807.05,278.08 L807.25,276.46 L807.45,274.83 L807.66,273.20 L807.88,271.57 L808.10,269.95 L808.33,268.32 L808.57,266.69 L808.82,265.06 L809.07,263.44 L809.33,261.81 L809.60,260.18 L809.87,258.55 L810.15,256.93 L810.44,255.30 L810.73,253.67 L811.04,252.04 L811.34,250.42 L811.66,248.79 L811.98,247.16 L812.31,245.53 L812.65,243.91 L812.99,242.28 L813.34,240.65 L813.70,239.02 L814.06,237.40 L814.43,235.77 L814.81,234.14 L815.19,232.51 L815.58,230.89 L815.98,229.26 L816.38,227.63 L816.79,226.00 L817.21,224.38 L817.63,222.75 L818.06,221.12 L818.50,219.49 L818.94,217.87 L819.39,216.24 L819.84,214.61 L820.30,212.98 L820.77,211.36 L821.24,209.73 L821.72,208.10 L822.21,206.47 L822.70,204.85 L823.20,203.22 L823.70,201.59 L824.21,199.96 L824.73,198.34 L825.25,196.71 L825.78,195.08 L826.31,193.45 L826.85,191.83 L827.40,190.20 L827.95,188.57 L828.50,186.94 L829.06,185.32 L829.63,183.69 L830.20,182.06 L830.78,180.43 L831.37,178.81 L831.96,177.18 L832.55,175.55 L833.15,173.92 L833.76,172.30 L834.37,170.67 L834.98,169.04 L835.60,167.41 L836.23,165.79 L836.86,164.16 L837.50,162.53 L838.14,160.90 L838.78,159.28 L839.43,157.65 L840.09,156.02 L840.75,154.39 L841.41,152.77 L842.08,151.14 L842.75,149.51 L843.43,147.88 L844.12,146.26 L844.80,144.63 L845.49,143.00 L846.19,141.37 L846.89,139.75 L847.59,138.12 L848.30,136.49 L849.02,134.86 L849.73,133.24 L850.45,131.61 L851.18,129.98 L851.91,128.35 L852.64,126.73 L853.38,125.10 L854.11,123.47 L854.86,121.84 L855.61,120.22 L856.36,118.59 L857.11,116.96 L857.87,115.33 L858.63,113.71 L859.39,112.08 L860.16,110.45 L860.93,108.82 L861.71,107.20 L862.48,105.57 L863.26,103.94 L864.05,102.31 L864.83,100.69 L865.62,99.06 L866.41,97.43 L867.21,95.80 L868.00,94.18 L868.80,92.55 L869.60,90.92 L870.41,89.29 L871.22,87.67 L872.02,86.04 L872.84,84.41 L873.65,82.78 L874.47,81.16 L875.28,79.53 L876.10,77.90 L876.93,76.27 L877.75,74.65 L878.58,73.02 L879.40,71.39 L880.23,69.76 L881.06,68.14 L881.90,66.51 L882.73,64.88 L883.57,63.25 L884.40,61.63 L885.24,60.00 L886.08,58.37 L886.92,56.75 L887.77,55.12 L888.61,53.49 L889.45,51.86 L890.30,50.24 L891.15,48.61 L891.99,46.98 L892.84,45.35 L893.69,43.72 L894.54,42.10 L895.39,40.47 L896.24,38.84 L897.09,37.21 L897.94,35.59 L898.79,33.96 L899.64,32.33 L900.50,30.70 L901.35,29.08 L902.20,27.45" fill="none" stroke="#d8d8d8" stroke-opacity="0.5" stroke-width="2" stroke-dasharray="2.08 3.44"/>
<path d="M902.20,613.35 L900.92,611.72 L899.64,610.10 L898.37,608.47 L897.09,606.84 L895.81,605.21 L894.53,603.59 L893.26,601.96 L891.98,600.33 L890.71,598.70 L889.43,597.08 L888.16,595.45 L886.89,593.82 L885.62,592.19 L884.35,590.56 L883.08,588.94 L881.81,587.31 L880.55,585.68 L879.29,584.05 L878.02,582.43 L876.76,580.80 L875.51,579.17 L874.25,577.54 L873.00,575.92 L871.75,574.29 L870.50,572.66 L869.25,571.03 L868.01,569.41 L866.76,567.78 L865.53,566.15 L864.29,564.52 L863.06,562.90 L861.83,561.27 L860.60,559.64 L859.37,558.01 L858.15,556.39 L856.94,554.76 L855.72,553.13 L854.51,551.50 L853.31,549.88 L852.10,548.25 L850.90,546.62 L849.71,545.00 L848.52,543.37 L847.33,541.74 L846.15,540.11 L844.97,538.48 L843.79,536.86 L842.62,535.23 L841.46,533.60 L840.30,531.97 L839.14,530.35 L837.99,528.72 L836.84,527.09 L835.70,525.46 L834.57,523.84 L833.43,522.21 L832.31,520.58 L831.19,518.95 L830.07,517.33 L828.96,515.70 L827.86,514.07 L826.76,512.44 L825.67,510.82 L824.58,509.19 L823.50,507.56 L822.42,505.93 L821.36,504.31 L820.29,502.68 L819.24,501.05 L818.19,499.42 L817.14,497.80 L816.10,496.17 L815.07,494.54 L814.05,492.91 L813.03,491.29 L812.02,489.66 L811.02,488.03 L810.02,486.40 L809.03,484.78 L808.05,483.15 L807.07,481.52 L806.10,479.89 L805.14,478.27 L804.19,476.64 L803.24,475.01 L802.30,473.38 L801.37,471.76 L800.45,470.13 L799.53,468.50 L798.63,466.88 L797.73,465.25 L796.83,463.62 L795.95,461.99 L795.07,460.37 L794.21,458.74 L793.35,457.11 L792.50,455.48 L791.65,453.85 L790.82,452.23 L789.99,450.60 L789.18,448.97 L788.37,447.34 L787.57,445.72 L786.78,444.09 L785.99,442.46 L785.22,440.83 L784.46,439.21 L783.70,437.58 L782.95,435.95 L782.21,434.32 L781.49,432.70 L780.77,431.07 L780.06,429.44 L779.36,427.81 L778.66,426.19 L777.98,424.56 L777.31,422.93 L776.65,421.30 L775.99,419.68 L775.35,418.05 L774.71,416.42 L774.09,414.79 L773.48,413.17 L772.87,411.54 L772.28,409.91 L771.69,408.28 L771.11,406.66 L770.55,405.03 L769.99,403.40 L769.45,401.77 L768.91,400.15 L768.39,398.52 L767.87,396.89 L767.37,395.26 L766.87,393.64 L766.39,392.01 L765.92,390.38 L765.45,388.75 L765.00,387.13 L764.56,385.50 L764.13,383.87 L763.71,382.25 L763.29,380.62 L762.89,378.99 L762.50,377.36 L762.13,375.73 L761.76,374.11 L761.40,372.48 L761.05,370.85 L760.72,369.22 L760.39,367.60 L760.08,365.97 L759.77,364.34 L759.48,362.71 L759.20,361.09 L758.93,359.46 L758.67,357.83 L758.42,356.20 L758.18,354.58 L757.95,352.95 L757.73,351.32 L757.53,349.69 L757.33,348.07 L757.15,346.44 L756.98,344.81 L756.82,343.19 L756.67,341.56 L756.53,339.93 L756.40,338.30 L756.28,336.67 L756.18,335.05 L756.08,333.42 L756.00,331.79 L755.93,330.16 L755.86,328.54 L755.81,326.91 L755.78,325.28 L755.75,323.65 L755.73,322.03 L755.73,320.40 L755.73,318.77 L755.75,317.14 L755.78,315.52 L755.81,313.89 L755.86,312.26 L755.93,310.63 L756.00,309.01 L756.08,307.38 L756.18,305.75 L756.28,304.12 L756.40,302.50 L756.53,300.87 L756.67,299.24 L756.82,297.61 L756.98,295.99 L757.15,294.36 L757.33,292.73 L757.53,291.10 L757.73,289.48 L757.95,287.85 L758.18,286.22 L758.42,284.59 L758.67,282.97 L758.93,281.34 L759.20,279.71 L759.48,278.08 L759.77,276.46 L760.08,274.83 L760.39,273.20 L760.72,271.57 L761.05,269.95 L761.40,268.32 L761.76,266.69 L762.13,265.06 L762.50,263.44 L762.89,261.81 L763.29,260.18 L763.71,258.55 L764.13,256.93 L764.56,255.30 L765.00,253.67 L765.45,252.04 L765.92,250.42 L766.39,248.79 L766.87,247.16 L767.37,245.53 L767.87,243.91 L768.39,242.28 L768.91,240.65 L769.45,239.02 L769.99,237.40 L770.55,235.77 L771.11,234.14 L771.69,232.51 L772.28,230.89 L772.87,229.26 L773.48,227.63 L774.09,226.00 L774.71,224.38 L775.35,222.75 L775.99,221.12 L776.65,219.49 L777.31,217.87 L777.98,216.24 L778.66,214.61 L779.36,212.98 L780.06,211.36 L780.77,209.73 L781.49,208.10 L782.21,206.47 L782.95,204.85 L783.70,203.22 L784.46,201.59 L785.22,199.96 L785.99,198.34 L786.78,196.71 L787.57,195.08 L788.37,193.45 L789.18,191.83 L789.99,190.20 L790.82,188.57 L791.65,186.94 L792.50,185.32 L793.35,183.69 L794.21,182.06 L795.07,180.43 L795.95,178.81 L796.83,177.18 L797.73,175.55 L798.63,173.92 L799.53,172.30 L800.45,170.67 L801.37,169.04 L802.30,167.41 L803.24,165.79 L804.19,164.16 L805.14,162.53 L806.10,160.90 L807.07,159.28 L808.05,157.65 L809.03,156.02 L810.02,154.39 L811.02,152.77 L812.02,151.14 L813.03,149.51 L814.05,147.88 L815.07,146.26 L816.10,144.63 L817.14,143.00 L818.19,141.37 L819.24,139.75 L820.29,138.12 L821.36,136.49 L822.42,134.86 L823.50,133.24 L824.58,131.61 L825.67,129.98 L826.76,128.35 L827.86,126.73 L828.96,125.10 L830.07,123.47 L831.19,121.84 L832.31,120.22 L833.43,118.59 L834.57,116.96 L835.70,115.33 L836.84,113.71 L837.99,112.08 L839.14,110.45 L840.30,108.82 L841.46,107.20 L842.62,105.57 L843.79,103.94 L844.97,102.31 L846.15,100.69 L847.33,99.06 L848.52,97.43 L849.71,95.80 L850.90,94.18 L852.10,92.55 L853.31,90.92 L854.51,89.29 L855.72,87.67 L856.94,86.04 L858.15,84.41 L859.37,82.78 L860.60,81.16 L861.83,79.53 L863.06,77.90 L864.29,76.27 L865.53,74.65 L866.76,73.02 L868.01,71.39 L869.25,69.76 L870.50,68.14 L871.75,66.51 L873.00,64.88 L874.25,63.25 L875.51,61.63 L876.76,60.00 L878.02,58.37 L879.29,56.75 L880.55,55.12 L881.81,53.49 L883.08,51.86 L884.35,50.24 L885.62,48.61 L886.89,46.98 L888.16,45.35 L889.43,43.72 L890.71,42.10 L891.98,40.47 L893.26,38.84 L894.53,37.21 L895.81,35.59 L897.09,33.96 L898.37,32.33 L899.64,30.70 L900.92,29.08 L902.20,27.45" fill="none" stroke="#d8d8d8" stroke-opacity="0.5" stroke-width="2" stroke-dasharray="2.08 3.44"/>
<path d="M902.20,613.35 L900.50,611.72 L898.79,610.10 L897.09,608.47 L895.38,606.84 L893.68,605.21 L891.98,603.59 L890.28,601.96 L888.58,600.33 L886.88,598.70 L885.18,597.08 L883.48,595.45 L881.79,593.82 L880.09,592.19 L878.40,590.56 L876.71,588.94 L875.02,587.31 L873.33,585.68 L871.65,584.05 L869.97,582.43 L868.29,580.80 L866.61,579.17 L864.94,577.54 L863.26,575.92 L861.59,574.29 L859.93,572.66 L858.27,571.03 L856.61,569.41 L854.95,567.78 L853.30,566.15 L851.65,564.52 L850.01,562.90 L848.37,561.27 L846.73,559.64 L845.10,558.01 L843.47,556.39 L841.85,554.76 L840.23,553.13 L838.62,551.50 L837.01,549.88 L835.40,548.25 L833.80,546.62 L832.21,545.00 L830.62,543.37 L829.04,541.74 L827.46,540.11 L825.89,538.48 L824.32,536.86 L822.76,535.23 L821.21,533.60 L819.66,531.97 L818.12,530.35 L816.59,528.72 L815.06,527.09 L813.54,525.46 L812.02,523.84 L810.51,522.21 L809.01,520.58 L807.52,518.95 L806.03,517.33 L804.55,515.70 L803.08,514.07 L801.61,512.44 L800.16,510.82 L798.71,509.19 L797.27,507.56 L795.83,505.93 L794.41,504.31 L792.99,502.68 L791.58,501.05 L790.18,499.42 L788.79,497.80 L787.41,496.17 L786.03,494.54 L784.67,492.91 L783.31,491.29 L781.96,489.66 L780.62,488.03 L779.29,486.40 L777.97,484.78 L776.66,483.15 L775.36,481.52 L774.07,479.89 L772.79,478.27 L771.52,476.64 L770.26,475.01 L769.01,473.38 L767.76,471.76 L766.53,470.13 L765.31,468.50 L764.10,466.88 L762.90,465.25 L761.71,463.62 L760.53,461.99 L759.37,460.37 L758.21,458.74 L757.06,457.11 L755.93,455.48 L754.81,453.85 L753.69,452.23 L752.59,450.60 L751.50,448.97 L750.42,447.34 L749.36,445.72 L748.30,444.09 L747.26,442.46 L746.23,440.83 L745.21,439.21 L744.20,437.58 L743.20,435.95 L742.22,434.32 L741.25,432.70 L740.29,431.07 L739.34,429.44 L738.41,427.81 L737.49,426.19 L736.58,424.56 L735.68,422.93 L734.80,421.30 L733.92,419.68 L733.07,418.05 L732.22,416.42 L731.39,414.79 L730.57,413.17 L729.76,411.54 L728.97,409.91 L728.19,408.28 L727.42,406.66 L726.67,405.03 L725.93,403.40 L725.20,401.77 L724.48,400.15 L723.78,398.52 L723.10,396.89 L722.43,395.26 L721.77,393.64 L721.12,392.01 L720.49,390.38 L719.87,388.75 L719.27,387.13 L718.68,385.50 L718.10,383.87 L717.54,382.25 L716.99,380.62 L716.46,378.99 L715.94,377.36 L715.43,375.73 L714.94,374.11 L714.47,372.48 L714.00,370.85 L713.55,369.22 L713.12,367.60 L712.70,365.97 L712.30,364.34 L711.91,362.71 L711.53,361.09 L711.17,359.46 L710.82,357.83 L710.49,356.20 L710.17,354.58 L709.87,352.95 L709.58,351.32 L709.30,349.69 L709.05,348.07 L708.80,346.44 L708.57,344.81 L708.36,343.19 L708.16,341.56 L707.97,339.93 L707.80,338.30 L707.64,336.67 L707.50,335.05 L707.38,333.42 L707.26,331.79 L707.17,330.16 L707.09,328.54 L707.02,326.91 L706.97,325.28 L706.93,323.65 L706.91,322.03 L706.90,320.40 L706.91,318.77 L706.93,317.14 L706.97,315.52 L707.02,313.89 L707.09,312.26 L707.17,310.63 L707.26,309.01 L707.38,307.38 L707.50,305.75 L707.64,304.12 L707.80,302.50 L707.97,300.87 L708.16,299.24 L708.36,297.61 L708.57,295.99 L708.80,294.36 L709.05,292.73 L709.30,291.10 L709.58,289.48 L709.87,287.85 L710.17,286.22 L710.49,284.59 L710.82,282.97 L711.17,281.34 L711.53,279.71 L711.91,278.08 L712.30,276.46 L712.70,274.83 L713.12,273.20 L713.55,271.57 L714.00,269.95 L714.47,268.32 L714.94,266.69 L715.43,265.06 L715.94,263.44 L716.46,261.81 L716.99,260.18 L717.54,258.55 L718.10,256.93 L718.68,255.30 L719.27,253.67 L719.87,252.04 L720.49,250.42 L721.12,248.79 L721.77,247.16 L722.43,245.53 L723.10,243.91 L723.78,242.28 L724.48,240.65 L725.20,239.02 L725.93,237.40 L726.67,235.77 L727.42,234.14 L728.19,232.51 L728.97,230.89 L729.76,229.26 L730.57,227.63 L731.39,226.00 L732.22,224.38 L733.07,222.75 L733.92,221.12 L734.80,219.49 L735.68,217.87 L736.58,216.24 L737.49,214.61 L738.41,212.98 L739.34,211.36 L740.29,209.73 L741.25,208.10 L742.22,206.47 L743.20,204.85 L744.20,203.22 L745.21,201.59 L746.23,199.96 L747.26,198.34 L748.30,196.71 L749.36,195.08 L750.42,193.45 L751.50,191.83 L752.59,190.20 L753.69,188.57 L754.81,186.94 L755.93,185.32 L757.06,183.69 L758.21,182.06 L759.37,180.43 L760.53,178.81 L761.71,177.18 L762.90,175.55 L764.10,173.92 L765.31,172.30 L766.53,170.67 L767.76,169.04 L769.01,167.41 L770.26,165.79 L771.52,164.16 L772.79,162.53 L774.07,160.90 L775.36,159.28 L776.66,157.65 L777.97,156.02 L779.29,154.39 L780.62,152.77 L781.96,151.14 L783.31,149.51 L784.67,147.88 L786.03,146.26 L787.41,144.63 L788.79,143.00 L790.18,141.37 L791.58,139.75 L792.99,138.12 L794.41,136.49 L795.83,134.86 L797.27,133.24 L798.71,131.61 L800.16,129.98 L801.61,128.35 L803.08,126.73 L804.55,125.10 L806.03,123.47 L807.52,121.84 L809.01,120.22 L810.51,118.59 L812.02,116.96 L813.54,115.33 L815.06,113.71 L816.59,112.08 L818.12,110.45 L819.66,108.82 L821.21,107.20 L822.76,105.57 L824.32,103.94 L825.89,102.31 L827.46,100.69 L829.04,99.06 L830.62,97.43 L832.21,95.80 L833.80,94.18 L835.40,92.55 L837.01,90.92 L838.62,89.29 L840.23,87.67 L841.85,86.04 L843.47,84.41 L845.10,82.78 L846.73,81.16 L848.37,79.53 L850.01,77.90 L851.65,76.27 L853.30,74.65 L854.95,73.02 L856.61,71.39 L858.27,69.76 L859.93,68.14 L861.59,66.51 L863.26,64.88 L864.94,63.25 L866.61,61.63 L868.29,60.00 L869.97,58.37 L871.65,56.75 L873.33,55.12 L875.02,53.49 L876.71,51.86 L878.40,50.24 L880.09,48.61 L881.79,46.98 L883.48,45.35 L885.18,43.72 L886.88,42.10 L888.58,40.47 L890.28,38.84 L891.98,37.21 L893.68,35.59 L895.38,33.96 L897.09,32.33 L898.79,30.70 L900.50,29.08 L902.20,27.45" fill="none" stroke="#d8d8d8" stroke-opacity="0.5" stroke-width="2" stroke-dasharray="2.08 3.44"/>
<path d="M902.20,613.35 L900.07,611.72 L897.94,610.10 L895.81,608.47 L893.68,606.84 L891.55,605.21 L889.42,603.59 L887.30,601.96 L885.17,600.33 L883.05,598.70 L880.92,597.08 L878.80,595.45 L876.68,593.82 L874.56,592.19 L872.45,590.56 L870.34,588.94 L868.22,587.31 L866.12,585.68 L864.01,584.05 L861.91,582.43 L859.81,580.80 L857.71,579.17 L855.62,577.54 L853.53,575.92 L851.44,574.29 L849.36,572.66 L847.28,571.03 L845.21,569.41 L843.14,567.78 L841.08,566.15 L839.02,564.52 L836.96,562.90 L834.91,561.27 L832.86,559.64 L830.82,558.01 L828.79,556.39 L826.76,554.76 L824.74,553.13 L822.72,551.50 L820.71,549.88 L818.70,548.25 L816.71,546.62 L814.71,545.00 L812.73,543.37 L810.75,541.74 L808.78,540.11 L806.81,538.48 L804.86,536.86 L802.91,535.23 L800.96,533.60 L799.03,531.97 L797.10,530.35 L795.18,528.72 L793.27,527.09 L791.37,525.46 L789.48,523.84 L787.59,522.21 L785.71,520.58 L783.85,518.95 L781.99,517.33 L780.14,515.70 L778.30,514.07 L776.47,512.44 L774.65,510.82 L772.83,509.19 L771.03,507.56 L769.24,505.93 L767.46,504.31 L765.69,502.68 L763.93,501.05 L762.18,499.42 L760.44,497.80 L758.71,496.17 L756.99,494.54 L755.28,492.91 L753.59,491.29 L751.90,489.66 L750.23,488.03 L748.57,486.40 L746.92,484.78 L745.28,483.15 L743.65,481.52 L742.04,479.89 L740.44,478.27 L738.85,476.64 L737.27,475.01 L735.71,473.38 L734.16,471.76 L732.62,470.13 L731.09,468.50 L729.58,466.88 L728.08,465.25 L726.59,463.62 L725.12,461.99 L723.66,460.37 L722.21,458.74 L720.78,457.11 L719.36,455.48 L717.96,453.85 L716.57,452.23 L715.19,450.60 L713.83,448.97 L712.48,447.34 L711.15,445.72 L709.83,444.09 L708.52,442.46 L707.23,440.83 L705.96,439.21 L704.70,437.58 L703.45,435.95 L702.22,434.32 L701.01,432.70 L699.81,431.07 L698.63,429.44 L697.46,427.81 L696.31,426.19 L695.17,424.56 L694.05,422.93 L692.94,421.30 L691.85,419.68 L690.78,418.05 L689.72,416.42 L688.68,414.79 L687.66,413.17 L686.65,411.54 L685.66,409.91 L684.68,408.28 L683.72,406.66 L682.78,405.03 L681.86,403.40 L680.95,401.77 L680.06,400.15 L679.18,398.52 L678.32,396.89 L677.48,395.26 L676.66,393.64 L675.85,392.01 L675.06,390.38 L674.29,388.75 L673.53,387.13 L672.80,385.50 L672.08,383.87 L671.38,382.25 L670.69,380.62 L670.02,378.99 L669.37,377.36 L668.74,375.73 L668.13,374.11 L667.53,372.48 L666.95,370.85 L666.39,369.22 L665.85,367.60 L665.33,365.97 L664.82,364.34 L664.33,362.71 L663.86,361.09 L663.41,359.46 L662.98,357.83 L662.56,356.20 L662.16,354.58 L661.78,352.95 L661.42,351.32 L661.08,349.69 L660.76,348.07 L660.45,346.44 L660.16,344.81 L659.89,343.19 L659.64,341.56 L659.41,339.93 L659.20,338.30 L659.00,336.67 L658.83,335.05 L658.67,333.42 L658.53,331.79 L658.41,330.16 L658.31,328.54 L658.22,326.91 L658.16,325.28 L658.11,323.65 L658.08,322.03 L658.08,320.40 L658.08,318.77 L658.11,317.14 L658.16,315.52 L658.22,313.89 L658.31,312.26 L658.41,310.63 L658.53,309.01 L658.67,307.38 L658.83,305.75 L659.00,304.12 L659.20,302.50 L659.41,300.87 L659.64,299.24 L659.89,297.61 L660.16,295.99 L660.45,294.36 L660.76,292.73 L661.08,291.10 L661.42,289.48 L661.78,287.85 L662.16,286.22 L662.56,284.59 L662.98,282.97 L663.41,281.34 L663.86,279.71 L664.33,278.08 L664.82,276.46 L665.33,274.83 L665.85,273.20 L666.39,271.57 L666.95,269.95 L667.53,268.32 L668.13,266.69 L668.74,265.06 L669.37,263.44 L670.02,261.81 L670.69,260.18 L671.38,258.55 L672.08,256.93 L672.80,255.30 L673.53,253.67 L674.29,252.04 L675.06,250.42 L675.85,248.79 L676.66,247.16 L677.48,245.53 L678.32,243.91 L679.18,242.28 L680.06,240.65 L680.95,239.02 L681.86,237.40 L682.78,235.77 L683.72,234.14 L684.68,232.51 L685.66,230.89 L686.65,229.26 L687.66,227.63 L688.68,226.00 L689.72,224.38 L690.78,222.75 L691.85,221.12 L692.94,219.49 L694.05,217.87 L695.17,216.24 L696.31,214.61 L697.46,212.98 L698.63,211.36 L699.81,209.73 L701.01,208.10 L702.22,206.47 L703.45,204.85 L704.70,203.22 L705.96,201.59 L707.23,199.96 L708.52,198.34 L709.83,196.71 L711.15,195.08 L712.48,193.45 L713.83,191.83 L715.19,190.20 L716.57,188.57 L717.96,186.94 L719.36,185.32 L720.78,183.69 L722.21,182.06 L723.66,180.43 L725.12,178.81 L726.59,177.18 L728.08,175.55 L729.58,173.92 L731.09,172.30 L732.62,170.67 L734.16,169.04 L735.71,167.41 L737.27,165.79 L738.85,164.16 L740.44,162.53 L742.04,160.90 L743.65,159.28 L745.28,157.65 L746.92,156.02 L748.57,154.39 L750.23,152.77 L751.90,151.14 L753.59,149.51 L755.28,147.88 L756.99,146.26 L758.71,144.63 L760.44,143.00 L762.18,141.37 L763.93,139.75 L765.69,138.12 L767.46,136.49 L769.24,134.86 L771.03,133.24 L772.83,131.61 L774.65,129.98 L776.47,128.35 L778.30,126.73 L780.14,125.10 L781.99,123.47 L783.85,121.84 L785.71,120.22 L787.59,118.59 L789.48,116.96 L791.37,115.33 L793.27,113.71 L795.18,112.08 L797.10,110.45 L799.03,108.82 L800.96,107.20 L802.91,105.57 L804.86,103.94 L806.81,102.31 L808.78,100.69 L810.75,99.06 L812.73,97.43 L814.71,95.80 L816.71,94.18 L818.70,92.55 L820.71,90.92 L822.72,89.29 L824.74,87.67 L826.76,86.04 L828.79,84.41 L830.82,82.78 L832.86,81.16 L834.91,79.53 L836.96,77.90 L839.02,76.27 L841.08,74.65 L843.14,73.02 L845.21,71.39 L847.28,69.76 L849.36,68.14 L851.44,66.51 L853.53,64.88 L855.62,63.25 L857.71,61.63 L859.81,60.00 L861.91,58.37 L864.01,56.75 L866.12,55.12 L868.22,53.49 L870.34,51.86 L872.45,50.24 L874.56,48.61 L876.68,46.98 L878.80,45.35 L880.92,43.72 L883.05,42.10 L885.17,40.47 L887.30,38.84 L889.42,37.21 L891.55,35.59 L893.68,33.96 L895.81,32.33 L897.94,30.70 L900.07,29.08 L902.20,27.45" fill="none" stroke="#d8d8d8" stroke-opacity="0.5" stroke-width="2" stroke-dasharray="2.08 3.44"/>
<path d="M902.20,613.35 L899.64,611.72 L897.09,610.10 L894.53,608.47 L891.98,606.84 L889.42,605.21 L886.87,603.59 L884.32,601.96 L881.76,600.33 L879.22,598.70 L876.67,597.08 L874.12,595.45 L871.58,593.82 L869.04,592.19 L866.50,590.56 L863.96,588.94 L861.43,587.31 L858.90,585.68 L856.37,584.05 L853.85,582.43 L851.33,580.80 L848.81,579.17 L846.30,577.54 L843.80,575.92 L841.29,574.29 L838.79,572.66 L836.30,571.03 L833.81,569.41 L831.33,567.78 L828.85,566.15 L826.38,564.52 L823.91,562.90 L821.45,561.27 L819.00,559.64 L816.55,558.01 L814.11,556.39 L811.67,554.76 L809.25,553.13 L806.82,551.50 L804.41,549.88 L802.01,548.25 L799.61,546.62 L797.22,545.00 L794.83,543.37 L792.46,541.74 L790.09,540.11 L787.74,538.48 L785.39,536.86 L783.05,535.23 L780.72,533.60 L778.39,531.97 L776.08,530.35 L773.78,528.72 L771.49,527.09 L769.20,525.46 L766.93,523.84 L764.67,522.21 L762.42,520.58 L760.18,518.95 L757.94,517.33 L755.73,515.70 L753.52,514.07 L751.32,512.44 L749.13,510.82 L746.96,509.19 L744.80,507.56 L742.65,505.93 L740.51,504.31 L738.38,502.68 L736.27,501.05 L734.17,499.42 L732.08,497.80 L730.01,496.17 L727.95,494.54 L725.90,492.91 L723.86,491.29 L721.84,489.66 L719.83,488.03 L717.84,486.40 L715.86,484.78 L713.90,483.15 L711.94,481.52 L710.01,479.89 L708.09,478.27 L706.18,476.64 L704.29,475.01 L702.41,473.38 L700.55,471.76 L698.70,470.13 L696.87,468.50 L695.05,466.88 L693.25,465.25 L691.47,463.62 L689.70,461.99 L687.95,460.37 L686.21,458.74 L684.50,457.11 L682.79,455.48 L681.11,453.85 L679.44,452.23 L677.79,450.60 L676.15,448.97 L674.54,447.34 L672.93,445.72 L671.35,444.09 L669.79,442.46 L668.24,440.83 L666.71,439.21 L665.20,437.58 L663.70,435.95 L662.23,434.32 L660.77,432.70 L659.33,431.07 L657.91,429.44 L656.51,427.81 L655.13,426.19 L653.76,424.56 L652.42,422.93 L651.09,421.30 L649.79,419.68 L648.50,418.05 L647.23,416.42 L645.98,414.79 L644.75,413.17 L643.54,411.54 L642.35,409.91 L641.18,408.28 L640.03,406.66 L638.90,405.03 L637.79,403.40 L636.70,401.77 L635.63,400.15 L634.58,398.52 L633.55,396.89 L632.54,395.26 L631.55,393.64 L630.58,392.01 L629.63,390.38 L628.71,388.75 L627.80,387.13 L626.92,385.50 L626.05,383.87 L625.21,382.25 L624.39,380.62 L623.59,378.99 L622.81,377.36 L622.05,375.73 L621.31,374.11 L620.60,372.48 L619.90,370.85 L619.23,369.22 L618.58,367.60 L617.95,365.97 L617.34,364.34 L616.76,362.71 L616.19,361.09 L615.65,359.46 L615.13,357.83 L614.63,356.20 L614.16,354.58 L613.70,352.95 L613.27,351.32 L612.86,349.69 L612.47,348.07 L612.10,346.44 L611.76,344.81 L611.43,343.19 L611.13,341.56 L610.85,339.93 L610.60,338.30 L610.36,336.67 L610.15,335.05 L609.96,333.42 L609.80,331.79 L609.65,330.16 L609.53,328.54 L609.43,326.91 L609.35,325.28 L609.29,323.65 L609.26,322.03 L609.25,320.40 L609.26,318.77 L609.29,317.14 L609.35,315.52 L609.43,313.89 L609.53,312.26 L609.65,310.63 L609.80,309.01 L609.96,307.38 L610.15,305.75 L610.36,304.12 L610.60,302.50 L610.85,300.87 L611.13,299.24 L611.43,297.61 L611.76,295.99 L612.10,294.36 L612.47,292.73 L612.86,291.10 L613.27,289.48 L613.70,287.85 L614.16,286.22 L614.63,284.59 L615.13,282.97 L615.65,281.34 L616.19,279.71 L616.76,278.08 L617.34,276.46 L617.95,274.83 L618.58,273.20 L619.23,271.57 L619.90,269.95 L620.60,268.32 L621.31,266.69 L622.05,265.06 L622.81,263.44 L623.59,261.81 L624.39,260.18 L625.21,258.55 L626.05,256.93 L626.92,255.30 L627.80,253.67 L628.71,252.04 L629.63,250.42 L630.58,248.79 L631.55,247.16 L632.54,245.53 L633.55,243.91 L634.58,242.28 L635.63,240.65 L636.70,239.02 L637.79,237.40 L638.90,235.77 L640.03,234.14 L641.18,232.51 L642.35,230.89 L643.54,229.26 L644.75,227.63 L645.98,226.00 L647.23,224.38 L648.50,222.75 L649.79,221.12 L651.09,219.49 L652.42,217.87 L653.76,216.24 L655.13,214.61 L656.51,212.98 L657.91,211.36 L659.33,209.73 L660.77,208.10 L662.23,206.47 L663.70,204.85 L665.20,203.22 L666.71,201.59 L668.24,199.96 L669.79,198.34 L671.35,196.71 L672.93,195.08 L674.54,193.45 L676.15,191.83 L677.79,190.20 L679.44,188.57 L681.11,186.94 L682.79,185.32 L684.50,183.69 L686.21,182.06 L687.95,180.43 L689.70,178.81 L691.47,177.18 L693.25,175.55 L695.05,173.92 L696.87,172.30 L698.70,170.67 L700.55,169.04 L702.41,167.41 L704.29,165.79 L706.18,164.16 L708.09,162.53 L710.01,160.90 L711.94,159.28 L713.90,157.65 L715.86,156.02 L717.84,154.39 L719.83,152.77 L721.84,151.14 L723.86,149.51 L725.90,147.88 L727.95,146.26 L730.01,144.63 L732.08,143.00 L734.17,141.37 L736.27,139.75 L738.38,138.12 L740.51,136.49 L742.65,134.86 L744.80,133.24 L746.96,131.61 L749.13,129.98 L751.32,128.35 L753.52,126.73 L755.73,125.10 L757.94,123.47 L760.18,121.84 L762.42,120.22 L764.67,118.59 L766.93,116.96 L769.20,115.33 L771.49,113.71 L773.78,112.08 L776.08,110.45 L778.39,108.82 L780.72,107.20 L783.05,105.57 L785.39,103.94 L787.74,102.31 L790.09,100.69 L792.46,99.06 L794.83,97.43 L797.22,95.80 L799.61,94.18 L802.01,92.55 L804.41,90.92 L806.82,89.29 L809.25,87.67 L811.67,86.04 L814.11,84.41 L816.55,82.78 L819.00,81.16 L821.45,79.53 L823.91,77.90 L826.38,76.27 L828.85,74.65 L831.33,73.02 L833.81,71.39 L836.30,69.76 L838.79,68.14 L841.29,66.51 L843.80,64.88 L846.30,63.25 L848.81,61.63 L851.33,60.00 L853.85,58.37 L856.37,56.75 L858.90,55.12 L861.43,53.49 L863.96,51.86 L866.50,50.24 L869.04,48.61 L871.58,46.98 L874.12,45.35 L876.67,43.72 L879.22,42.10 L881.76,40.47 L884.32,38.84 L886.87,37.21 L889.42,35.59 L891.98,33.96 L894.53,32.33 L897.09,30.70 L899.64,29.08 L902.20,27.45" fill="none" stroke="#d8d8d8" stroke-opacity="0.5" stroke-width="2" stroke-dasharray="2.08 3.44"/>
<path d="M902.20,613.35 L899.22,611.72 L896.24,610.10 L893.25,608.47 L890.27,606.84 L887.29,605.21 L884.31,603.59 L881.34,601.96 L878.36,600.33 L875.38,598.70 L872.41,597.08 L869.44,595.45 L866.47,593.82 L863.51,592.19 L860.55,590.56 L857.59,588.94 L854.63,587.31 L851.68,585.68 L848.73,584.05 L845.79,582.43 L842.85,580.80 L839.92,579.17 L836.99,577.54 L834.06,575.92 L831.14,574.29 L828.23,572.66 L825.32,571.03 L822.41,569.41 L819.52,567.78 L816.63,566.15 L813.74,564.52 L810.86,562.90 L807.99,561.27 L805.13,559.64 L802.27,558.01 L799.43,556.39 L796.59,554.76 L793.75,553.13 L790.93,551.50 L788.11,549.88 L785.31,548.25 L782.51,546.62 L779.72,545.00 L776.94,543.37 L774.17,541.74 L771.41,540.11 L768.66,538.48 L765.92,536.86 L763.19,535.23 L760.47,533.60 L757.76,531.97 L755.06,530.35 L752.38,528.72 L749.70,527.09 L747.04,525.46 L744.39,523.84 L741.75,522.21 L739.12,520.58 L736.50,518.95 L733.90,517.33 L731.31,515.70 L728.74,514.07 L726.17,512.44 L723.62,510.82 L721.09,509.19 L718.56,507.56 L716.06,505.93 L713.56,504.31 L711.08,502.68 L708.62,501.05 L706.17,499.42 L703.73,497.80 L701.31,496.17 L698.90,494.54 L696.51,492.91 L694.14,491.29 L691.78,489.66 L689.44,488.03 L687.11,486.40 L684.80,484.78 L682.51,483.15 L680.23,481.52 L677.98,479.89 L675.73,478.27 L673.51,476.64 L671.30,475.01 L669.11,473.38 L666.94,471.76 L664.78,470.13 L662.65,468.50 L660.53,466.88 L658.43,465.25 L656.35,463.62 L654.29,461.99 L652.24,460.37 L650.22,458.74 L648.21,457.11 L646.23,455.48 L644.26,453.85 L642.31,452.23 L640.39,450.60 L638.48,448.97 L636.59,447.34 L634.72,445.72 L632.88,444.09 L631.05,442.46 L629.25,440.83 L627.46,439.21 L625.70,437.58 L623.96,435.95 L622.23,434.32 L620.53,432.70 L618.86,431.07 L617.20,429.44 L615.56,427.81 L613.95,426.19 L612.36,424.56 L610.79,422.93 L609.24,421.30 L607.72,419.68 L606.21,418.05 L604.73,416.42 L603.28,414.79 L601.84,413.17 L600.43,411.54 L599.04,409.91 L597.68,408.28 L596.33,406.66 L595.01,405.03 L593.72,403.40 L592.45,401.77 L591.20,400.15 L589.97,398.52 L588.77,396.89 L587.59,395.26 L586.44,393.64 L585.31,392.01 L584.21,390.38 L583.13,388.75 L582.07,387.13 L581.04,385.50 L580.03,383.87 L579.05,382.25 L578.09,380.62 L577.15,378.99 L576.24,377.36 L575.36,375.73 L574.50,374.11 L573.66,372.48 L572.86,370.85 L572.07,369.22 L571.31,367.60 L570.58,365.97 L569.87,364.34 L569.18,362.71 L568.53,361.09 L567.89,359.46 L567.29,357.83 L566.70,356.20 L566.15,354.58 L565.62,352.95 L565.11,351.32 L564.63,349.69 L564.18,348.07 L563.75,346.44 L563.35,344.81 L562.97,343.19 L562.62,341.56 L562.30,339.93 L562.00,338.30 L561.73,336.67 L561.48,335.05 L561.26,333.42 L561.06,331.79 L560.89,330.16 L560.75,328.54 L560.63,326.91 L560.54,325.28 L560.48,323.65 L560.44,322.03 L560.43,320.40 L560.44,318.77 L560.48,317.14 L560.54,315.52 L560.63,313.89 L560.75,312.26 L560.89,310.63 L561.06,309.01 L561.26,307.38 L561.48,305.75 L561.73,304.12 L562.00,302.50 L562.30,300.87 L562.62,299.24 L562.97,297.61 L563.35,295.99 L563.75,294.36 L564.18,292.73 L564.63,291.10 L565.11,289.48 L565.62,287.85 L566.15,286.22 L566.70,284.59 L567.29,282.97 L567.89,281.34 L568.53,279.71 L569.18,278.08 L569.87,276.46 L570.58,274.83 L571.31,273.20 L572.07,271.57 L572.86,269.95 L573.66,268.32 L574.50,266.69 L575.36,265.06 L576.24,263.44 L577.15,261.81 L578.09,260.18 L579.05,258.55 L580.03,256.93 L581.04,255.30 L582.07,253.67 L583.13,252.04 L584.21,250.42 L585.31,248.79 L586.44,247.16 L587.59,245.53 L588.77,243.91 L589.97,242.28 L591.20,240.65 L592.45,239.02 L593.72,237.40 L595.01,235.77 L596.33,234.14 L597.68,232.51 L599.04,230.89 L600.43,229.26 L601.84,227.63 L603.28,226.00 L604.73,224.38 L606.21,222.75 L607.72,221.12 L609.24,219.49 L610.79,217.87 L612.36,216.24 L613.95,214.61 L615.56,212.98 L617.20,211.36 L618.86,209.73 L620.53,208.10 L622.23,206.47 L623.96,204.85 L625.70,203.22 L627.46,201.59 L629.25,199.96 L631.05,198.34 L632.88,196.71 L634.72,195.08 L636.59,193.45 L638.48,191.83 L640.39,190.20 L642.31,188.57 L644.26,186.94 L646.23,185.32 L648.21,183.69 L650.22,182.06 L652.24,180.43 L654.29,178.81 L656.35,177.18 L658.43,175.55 L660.53,173.92 L662.65,172.30 L664.78,170.67 L666.94,169.04 L669.11,167.41 L671.30,165.79 L673.51,164.16 L675.73,162.53 L677.98,160.90 L680.23,159.28 L682.51,157.65 L684.80,156.02 L687.11,154.39 L689.44,152.77 L691.78,151.14 L694.14,149.51 L696.51,147.88 L698.90,146.26 L701.31,144.63 L703.73,143.00 L706.17,141.37 L708.62,139.75 L711.08,138.12 L713.56,136.49 L716.06,134.86 L718.56,133.24 L721.09,131.61 L723.62,129.98 L726.17,128.35 L728.74,126.73 L731.31,125.10 L733.90,123.47 L736.50,121.84 L739.12,120.22 L741.75,118.59 L744.39,116.96 L747.04,115.33 L749.70,113.71 L752.38,112.08 L755.06,110.45 L757.76,108.82 L760.47,107.20 L763.19,105.57 L765.92,103.94 L768.66,102.31 L771.41,100.69 L774.17,99.06 L776.94,97.43 L779.72,95.80 L782.51,94.18 L785.31,92.55 L788.11,90.92 L790.93,89.29 L793.75,87.67 L796.59,86.04 L799.43,84.41 L802.27,82.78 L805.13,81.16 L807.99,79.53 L810.86,77.90 L813.74,76.27 L816.63,74.65 L819.52,73.02 L822.41,71.39 L825.32,69.76 L828.23,68.14 L831.14,66.51 L834.06,64.88 L836.99,63.25 L839.92,61.63 L842.85,60.00 L845.79,58.37 L848.73,56.75 L851.68,55.12 L854.63,53.49 L857.59,51.86 L860.55,50.24 L863.51,48.61 L866.47,46.98 L869.44,45.35 L872.41,43.72 L875.38,42.10 L878.36,40.47 L881.34,38.84 L884.31,37.21 L887.29,35.59 L890.27,33.96 L893.25,32.33 L896.24,30.70 L899.22,29.08 L902.20,27.45" fill="none" stroke="#d8d8d8" stroke-opacity="0.5" stroke-width="2" stroke-dasharray="2.08 3.44"/>
<path d="M902.20,613.35 L898.79,611.72 L895.38,610.10 L891.98,608.47 L888.57,606.84 L885.16,605.21 L881.76,603.59 L878.35,601.96 L874.95,600.33 L871.55,598.70 L868.16,597.08 L864.76,595.45 L861.37,593.82 L857.98,592.19 L854.60,590.56 L851.22,588.94 L847.84,587.31 L844.47,585.68 L841.10,584.05 L837.73,582.43 L834.37,580.80 L831.02,579.17 L827.67,577.54 L824.33,575.92 L820.99,574.29 L817.66,572.66 L814.33,571.03 L811.02,569.41 L807.71,567.78 L804.40,566.15 L801.11,564.52 L797.82,562.90 L794.54,561.27 L791.26,559.64 L788.00,558.01 L784.74,556.39 L781.50,554.76 L778.26,553.13 L775.03,551.50 L771.82,549.88 L768.61,548.25 L765.41,546.62 L762.22,545.00 L759.04,543.37 L755.88,541.74 L752.72,540.11 L749.58,538.48 L746.45,536.86 L743.33,535.23 L740.22,533.60 L737.13,531.97 L734.04,530.35 L730.97,528.72 L727.92,527.09 L724.87,525.46 L721.84,523.84 L718.82,522.21 L715.82,520.58 L712.83,518.95 L709.86,517.33 L706.90,515.70 L703.96,514.07 L701.03,512.44 L698.11,510.82 L695.21,509.19 L692.33,507.56 L689.46,505.93 L686.61,504.31 L683.78,502.68 L680.96,501.05 L678.16,499.42 L675.38,497.80 L672.61,496.17 L669.86,494.54 L667.13,492.91 L664.42,491.29 L661.72,489.66 L659.05,488.03 L656.39,486.40 L653.75,484.78 L651.13,483.15 L648.53,481.52 L645.94,479.89 L643.38,478.27 L640.84,476.64 L638.31,475.01 L635.81,473.38 L633.33,471.76 L630.87,470.13 L628.42,468.50 L626.00,466.88 L623.60,465.25 L621.23,463.62 L618.87,461.99 L616.53,460.37 L614.22,458.74 L611.93,457.11 L609.66,455.48 L607.41,453.85 L605.19,452.23 L602.98,450.60 L600.80,448.97 L598.65,447.34 L596.51,445.72 L594.40,444.09 L592.32,442.46 L590.25,440.83 L588.21,439.21 L586.20,437.58 L584.21,435.95 L582.24,434.32 L580.30,432.70 L578.38,431.07 L576.48,429.44 L574.62,427.81 L572.77,426.19 L570.95,424.56 L569.16,422.93 L567.39,421.30 L565.65,419.68 L563.93,418.05 L562.24,416.42 L560.57,414.79 L558.93,413.17 L557.32,411.54 L555.73,409.91 L554.17,408.28 L552.64,406.66 L551.13,405.03 L549.65,403.40 L548.20,401.77 L546.77,400.15 L545.37,398.52 L544.00,396.89 L542.65,395.26 L541.33,393.64 L540.04,392.01 L538.78,390.38 L537.54,388.75 L536.34,387.13 L535.16,385.50 L534.00,383.87 L532.88,382.25 L531.78,380.62 L530.72,378.99 L529.68,377.36 L528.67,375.73 L527.69,374.11 L526.73,372.48 L525.81,370.85 L524.91,369.22 L524.04,367.60 L523.20,365.97 L522.39,364.34 L521.61,362.71 L520.86,361.09 L520.14,359.46 L519.44,357.83 L518.78,356.20 L518.14,354.58 L517.53,352.95 L516.96,351.32 L516.41,349.69 L515.89,348.07 L515.40,346.44 L514.94,344.81 L514.51,343.19 L514.11,341.56 L513.74,339.93 L513.40,338.30 L513.09,336.67 L512.80,335.05 L512.55,333.42 L512.33,331.79 L512.14,330.16 L511.97,328.54 L511.84,326.91 L511.73,325.28 L511.66,323.65 L511.61,322.03 L511.60,320.40 L511.61,318.77 L511.66,317.14 L511.73,315.52 L511.84,313.89 L511.97,312.26 L512.14,310.63 L512.33,309.01 L512.55,307.38 L512.80,305.75 L513.09,304.12 L513.40,302.50 L513.74,300.87 L514.11,299.24 L514.51,297.61 L514.94,295.99 L515.40,294.36 L515.89,292.73 L516.41,291.10 L516.96,289.48 L517.53,287.85 L518.14,286.22 L518.78,284.59 L519.44,282.97 L520.14,281.34 L520.86,279.71 L521.61,278.08 L522.39,276.46 L523.20,274.83 L524.04,273.20 L524.91,271.57 L525.81,269.95 L526.73,268.32 L527.69,266.69 L528.67,265.06 L529.68,263.44 L530.72,261.81 L531.78,260.18 L532.88,258.55 L534.00,256.93 L535.16,255.30 L536.34,253.67 L537.54,252.04 L538.78,250.42 L540.04,248.79 L541.33,247.16 L542.65,245.53 L544.00,243.91 L545.37,242.28 L546.77,240.65 L548.20,239.02 L549.65,237.40 L551.13,235.77 L552.64,234.14 L554.17,232.51 L555.73,230.89 L557.32,229.26 L558.93,227.63 L560.57,226.00 L562.24,224.38 L563.93,222.75 L565.65,221.12 L567.39,219.49 L569.16,217.87 L570.95,216.24 L572.77,214.61 L574.62,212.98 L576.48,211.36 L578.38,209.73 L580.30,208.10 L582.24,206.47 L584.21,204.85 L586.20,203.22 L588.21,201.59 L590.25,199.96 L592.32,198.34 L594.40,196.71 L596.51,195.08 L598.65,193.45 L600.80,191.83 L602.98,190.20 L605.19,188.57 L607.41,186.94 L609.66,185.32 L611.93,183.69 L614.22,182.06 L616.53,180.43 L618.87,178.81 L621.23,177.18 L623.60,175.55 L626.00,173.92 L628.42,172.30 L630.87,170.67 L633.33,169.04 L635.81,167.41 L638.31,165.79 L640.84,164.16 L643.38,162.53 L645.94,160.90 L648.53,159.28 L651.13,157.65 L653.75,156.02 L656.39,154.39 L659.05,152.77 L661.72,151.14 L664.42,149.51 L667.13,147.88 L669.86,146.26 L672.61,144.63 L675.38,143.00 L678.16,141.37 L680.96,139.75 L683.78,138.12 L686.61,136.49 L689.46,134.86 L692.33,133.24 L695.21,131.61 L698.11,129.98 L701.03,128.35 L703.96,126.73 L706.90,125.10 L709.86,123.47 L712.83,121.84 L715.82,120.22 L718.82,118.59 L721.84,116.96 L724.87,115.33 L727.92,113.71 L730.97,112.08 L734.04,110.45 L737.13,108.82 L740.22,107.20 L743.33,105.57 L746.45,103.94 L749.58,102.31 L752.72,100.69 L755.88,99.06 L759.04,97.43 L762.22,95.80 L765.41,94.18 L768.61,92.55 L771.82,90.92 L775.03,89.29 L778.26,87.67 L781.50,86.04 L784.74,84.41 L788.00,82.78 L791.26,81.16 L794.54,79.53 L797.82,77.90 L801.11,76.27 L804.40,74.65 L807.71,73.02 L811.02,71.39 L814.33,69.76 L817.66,68.14 L820.99,66.51 L824.33,64.88 L827.67,63.25 L831.02,61.63 L834.37,60.00 L837.73,58.37 L841.10,56.75 L844.47,55.12 L847.84,53.49 L851.22,51.86 L854.60,50.24 L857.98,48.61 L861.37,46.98 L864.76,45.35 L868.16,43.72 L871.55,42.10 L874.95,40.47 L878.35,38.84 L881.76,37.21 L885.16,35.59 L888.57,33.96 L891.98,32.33 L895.38,30.70 L898.79,29.08 L902.20,27.45" fill="none" stroke="#d8d8d8" stroke-opacity="0.5" stroke-width="2" stroke-dasharray="2.08 3.44"/>
<path d="M902.20,613.35 L898.37,611.72 L894.53,610.10 L890.70,608.47 L886.86,606.84 L883.03,605.21 L879.20,603.59 L875.37,601.96 L871.55,600.33 L867.72,598.70 L863.90,597.08 L860.08,595.45 L856.27,593.82 L852.46,592.19 L848.65,590.56 L844.84,588.94 L841.04,587.31 L837.25,585.68 L833.46,584.05 L829.67,582.43 L825.89,580.80 L822.12,579.17 L818.35,577.54 L814.59,575.92 L810.84,574.29 L807.09,572.66 L803.35,571.03 L799.62,569.41 L795.89,567.78 L792.18,566.15 L788.47,564.52 L784.77,562.90 L781.08,561.27 L777.40,559.64 L773.72,558.01 L770.06,556.39 L766.41,554.76 L762.77,553.13 L759.14,551.50 L755.52,549.88 L751.91,548.25 L748.31,546.62 L744.72,545.00 L741.15,543.37 L737.59,541.74 L734.04,540.11 L730.50,538.48 L726.98,536.86 L723.47,535.23 L719.97,533.60 L716.49,531.97 L713.02,530.35 L709.57,528.72 L706.13,527.09 L702.71,525.46 L699.30,523.84 L695.90,522.21 L692.52,520.58 L689.16,518.95 L685.82,517.33 L682.49,515.70 L679.17,514.07 L675.88,512.44 L672.60,510.82 L669.34,509.19 L666.10,507.56 L662.87,505.93 L659.67,504.31 L656.48,502.68 L653.31,501.05 L650.16,499.42 L647.02,497.80 L643.91,496.17 L640.82,494.54 L637.75,492.91 L634.70,491.29 L631.66,489.66 L628.65,488.03 L625.66,486.40 L622.69,484.78 L619.74,483.15 L616.82,481.52 L613.91,479.89 L611.03,478.27 L608.17,476.64 L605.33,475.01 L602.51,473.38 L599.72,471.76 L596.95,470.13 L594.20,468.50 L591.48,466.88 L588.78,465.25 L586.10,463.62 L583.45,461.99 L580.82,460.37 L578.22,458.74 L575.64,457.11 L573.09,455.48 L570.56,453.85 L568.06,452.23 L565.58,450.60 L563.13,448.97 L560.70,447.34 L558.30,445.72 L555.93,444.09 L553.58,442.46 L551.26,440.83 L548.97,439.21 L546.70,437.58 L544.46,435.95 L542.24,434.32 L540.06,432.70 L537.90,431.07 L535.77,429.44 L533.67,427.81 L531.59,426.19 L529.55,424.56 L527.53,422.93 L525.54,421.30 L523.58,419.68 L521.65,418.05 L519.74,416.42 L517.87,414.79 L516.03,413.17 L514.21,411.54 L512.43,409.91 L510.67,408.28 L508.94,406.66 L507.25,405.03 L505.58,403.40 L503.95,401.77 L502.34,400.15 L500.77,398.52 L499.22,396.89 L497.71,395.26 L496.22,393.64 L494.77,392.01 L493.35,390.38 L491.96,388.75 L490.60,387.13 L489.28,385.50 L487.98,383.87 L486.72,382.25 L485.48,380.62 L484.28,378.99 L483.11,377.36 L481.98,375.73 L480.87,374.11 L479.80,372.48 L478.76,370.85 L477.75,369.22 L476.77,367.60 L475.83,365.97 L474.92,364.34 L474.04,362.71 L473.19,361.09 L472.38,359.46 L471.60,357.83 L470.85,356.20 L470.13,354.58 L469.45,352.95 L468.80,351.32 L468.19,349.69 L467.60,348.07 L467.05,346.44 L466.53,344.81 L466.05,343.19 L465.60,341.56 L465.18,339.93 L464.80,338.30 L464.45,336.67 L464.13,335.05 L463.85,333.42 L463.59,331.79 L463.38,330.16 L463.19,328.54 L463.04,326.91 L462.93,325.28 L462.84,323.65 L462.79,322.03 L462.78,320.40 L462.79,318.77 L462.84,317.14 L462.93,315.52 L463.04,313.89 L463.19,312.26 L463.38,310.63 L463.59,309.01 L463.85,307.38 L464.13,305.75 L464.45,304.12 L464.80,302.50 L465.18,300.87 L465.60,299.24 L466.05,297.61 L466.53,295.99 L467.05,294.36 L467.60,292.73 L468.19,291.10 L468.80,289.48 L469.45,287.85 L470.13,286.22 L470.85,284.59 L471.60,282.97 L472.38,281.34 L473.19,279.71 L474.04,278.08 L474.92,276.46 L475.83,274.83 L476.77,273.20 L477.75,271.57 L478.76,269.95 L479.80,268.32 L480.87,266.69 L481.98,265.06 L483.11,263.44 L484.28,261.81 L485.48,260.18 L486.72,258.55 L487.98,256.93 L489.28,255.30 L490.60,253.67 L491.96,252.04 L493.35,250.42 L494.77,248.79 L496.22,247.16 L497.71,245.53 L499.22,243.91 L500.77,242.28 L502.34,240.65 L503.95,239.02 L505.58,237.40 L507.25,235.77 L508.94,234.14 L510.67,232.51 L512.43,230.89 L514.21,229.26 L516.03,227.63 L517.87,226.00 L519.74,224.38 L521.65,222.75 L523.58,221.12 L525.54,219.49 L527.53,217.87 L529.55,216.24 L531.59,214.61 L533.67,212.98 L535.77,211.36 L537.90,209.73 L540.06,208.10 L542.24,206.47 L544.46,204.85 L546.70,203.22 L548.97,201.59 L551.26,199.96 L553.58,198.34 L555.93,196.71 L558.30,195.08 L560.70,193.45 L563.13,191.83 L565.58,190.20 L568.06,188.57 L570.56,186.94 L573.09,185.32 L575.64,183.69 L578.22,182.06 L580.82,180.43 L583.45,178.81 L586.10,177.18 L588.78,175.55 L591.48,173.92 L594.20,172.30 L596.95,170.67 L599.72,169.04 L602.51,167.41 L605.33,165.79 L608.17,164.16 L611.03,162.53 L613.91,160.90 L616.82,159.28 L619.74,157.65 L622.69,156.02 L625.66,154.39 L628.65,152.77 L631.66,151.14 L634.70,149.51 L637.75,147.88 L640.82,146.26 L643.91,144.63 L647.02,143.00 L650.16,141.37 L653.31,139.75 L656.48,138.12 L659.67,136.49 L662.87,134.86 L666.10,133.24 L669.34,131.61 L672.60,129.98 L675.88,128.35 L679.17,126.73 L682.49,125.10 L685.82,123.47 L689.16,121.84 L692.52,120.22 L695.90,118.59 L699.30,116.96 L702.71,115.33 L706.13,113.71 L709.57,112.08 L713.02,110.45 L716.49,108.82 L719.97,107.20 L723.47,105.57 L726.98,103.94 L730.50,102.31 L734.04,100.69 L737.59,99.06 L741.15,97.43 L744.72,95.80 L748.31,94.18 L751.91,92.55 L755.52,90.92 L759.14,89.29 L762.77,87.67 L766.41,86.04 L770.06,84.41 L773.72,82.78 L777.40,81.16 L781.08,79.53 L784.77,77.90 L788.47,76.27 L792.18,74.65 L795.89,73.02 L799.62,71.39 L803.35,69.76 L807.09,68.14 L810.84,66.51 L814.59,64.88 L818.35,63.25 L822.12,61.63 L825.89,60.00 L829.67,58.37 L833.46,56.75 L837.25,55.12 L841.04,53.49 L844.84,51.86 L848.65,50.24 L852.46,48.61 L856.27,46.98 L860.08,45.35 L863.90,43.72 L867.72,42.10 L871.55,40.47 L875.37,38.84 L879.20,37.21 L883.03,35.59 L886.86,33.96 L890.70,32.33 L894.53,30.70 L898.37,29.08 L902.20,27.45" fill="none" stroke="#d8d8d8" stroke-opacity="0.5" stroke-width="2" stroke-dasharray="2.08 3.44"/>
<path d="M902.20,613.35 L897.94,611.72 L893.68,610.10 L889.42,608.47 L885.16,606.84 L880.90,605.21 L876.65,603.59 L872.39,601.96 L868.14,600.33 L863.89,598.70 L859.65,597.08 L855.40,595.45 L851.16,593.82 L846.93,592.19 L842.70,590.56 L838.47,588.94 L834.25,587.31 L830.03,585.68 L825.82,584.05 L821.62,582.43 L817.42,580.80 L813.22,579.17 L809.04,577.54 L804.86,575.92 L800.69,574.29 L796.52,572.66 L792.37,571.03 L788.22,569.41 L784.08,567.78 L779.95,566.15 L775.83,564.52 L771.72,562.90 L767.62,561.27 L763.53,559.64 L759.45,558.01 L755.38,556.39 L751.32,554.76 L747.28,553.13 L743.24,551.50 L739.22,549.88 L735.21,548.25 L731.21,546.62 L727.23,545.00 L723.26,543.37 L719.30,541.74 L715.35,540.11 L711.43,538.48 L707.51,536.86 L703.61,535.23 L699.73,533.60 L695.86,531.97 L692.00,530.35 L688.17,528.72 L684.34,527.09 L680.54,525.46 L676.75,523.84 L672.98,522.21 L669.23,520.58 L665.49,518.95 L661.77,517.33 L658.08,515.70 L654.39,514.07 L650.73,512.44 L647.09,510.82 L643.47,509.19 L639.86,507.56 L636.28,505.93 L632.72,504.31 L629.17,502.68 L625.65,501.05 L622.15,499.42 L618.67,497.80 L615.21,496.17 L611.78,494.54 L608.36,492.91 L604.97,491.29 L601.60,489.66 L598.26,488.03 L594.93,486.40 L591.63,484.78 L588.36,483.15 L585.11,481.52 L581.88,479.89 L578.68,478.27 L575.50,476.64 L572.34,475.01 L569.21,473.38 L566.11,471.76 L563.03,470.13 L559.98,468.50 L556.96,466.88 L553.96,465.25 L550.98,463.62 L548.04,461.99 L545.12,460.37 L542.22,458.74 L539.36,457.11 L536.52,455.48 L533.71,453.85 L530.93,452.23 L528.18,450.60 L525.45,448.97 L522.76,447.34 L520.09,445.72 L517.45,444.09 L514.85,442.46 L512.27,440.83 L509.72,439.21 L507.20,437.58 L504.71,435.95 L502.25,434.32 L499.82,432.70 L497.42,431.07 L495.06,429.44 L492.72,427.81 L490.41,426.19 L488.14,424.56 L485.90,422.93 L483.69,421.30 L481.51,419.68 L479.36,418.05 L477.25,416.42 L475.17,414.79 L473.12,413.17 L471.10,411.54 L469.12,409.91 L467.17,408.28 L465.25,406.66 L463.36,405.03 L461.51,403.40 L459.70,401.77 L457.91,400.15 L456.16,398.52 L454.45,396.89 L452.76,395.26 L451.12,393.64 L449.50,392.01 L447.92,390.38 L446.38,388.75 L444.87,387.13 L443.40,385.50 L441.96,383.87 L440.55,382.25 L439.18,380.62 L437.85,378.99 L436.55,377.36 L435.28,375.73 L434.06,374.11 L432.86,372.48 L431.71,370.85 L430.59,369.22 L429.50,367.60 L428.45,365.97 L427.44,364.34 L426.46,362.71 L425.52,361.09 L424.62,359.46 L423.75,357.83 L422.92,356.20 L422.13,354.58 L421.37,352.95 L420.65,351.32 L419.96,349.69 L419.31,348.07 L418.70,346.44 L418.13,344.81 L417.59,343.19 L417.09,341.56 L416.62,339.93 L416.20,338.30 L415.81,336.67 L415.46,335.05 L415.14,333.42 L414.86,331.79 L414.62,330.16 L414.41,328.54 L414.25,326.91 L414.12,325.28 L414.02,323.65 L413.97,322.03 L413.95,320.40 L413.97,318.77 L414.02,317.14 L414.12,315.52 L414.25,313.89 L414.41,312.26 L414.62,310.63 L414.86,309.01 L415.14,307.38 L415.46,305.75 L415.81,304.12 L416.20,302.50 L416.62,300.87 L417.09,299.24 L417.59,297.61 L418.13,295.99 L418.70,294.36 L419.31,292.73 L419.96,291.10 L420.65,289.48 L421.37,287.85 L422.13,286.22 L422.92,284.59 L423.75,282.97 L424.62,281.34 L425.52,279.71 L426.46,278.08 L427.44,276.46 L428.45,274.83 L429.50,273.20 L430.59,271.57 L431.71,269.95 L432.86,268.32 L434.06,266.69 L435.28,265.06 L436.55,263.44 L437.85,261.81 L439.18,260.18 L440.55,258.55 L441.96,256.93 L443.40,255.30 L444.87,253.67 L446.38,252.04 L447.92,250.42 L449.50,248.79 L451.12,247.16 L452.76,245.53 L454.45,243.91 L456.16,242.28 L457.91,240.65 L459.70,239.02 L461.51,237.40 L463.36,235.77 L465.25,234.14 L467.17,232.51 L469.12,230.89 L471.10,229.26 L473.12,227.63 L475.17,226.00 L477.25,224.38 L479.36,222.75 L481.51,221.12 L483.69,219.49 L485.90,217.87 L488.14,216.24 L490.41,214.61 L492.72,212.98 L495.06,211.36 L497.42,209.73 L499.82,208.10 L502.25,206.47 L504.71,204.85 L507.20,203.22 L509.72,201.59 L512.27,199.96 L514.85,198.34 L517.45,196.71 L520.09,195.08 L522.76,193.45 L525.45,191.83 L528.18,190.20 L530.93,188.57 L533.71,186.94 L536.52,185.32 L539.36,183.69 L542.22,182.06 L545.12,180.43 L548.04,178.81 L550.98,177.18 L553.96,175.55 L556.96,173.92 L559.98,172.30 L563.03,170.67 L566.11,169.04 L569.21,167.41 L572.34,165.79 L575.50,164.16 L578.68,162.53 L581.88,160.90 L585.11,159.28 L588.36,157.65 L591.63,156.02 L594.93,154.39 L598.26,152.77 L601.60,151.14 L604.97,149.51 L608.36,147.88 L611.78,146.26 L615.21,144.63 L618.67,143.00 L622.15,141.37 L625.65,139.75 L629.17,138.12 L632.72,136.49 L636.28,134.86 L639.86,133.24 L643.47,131.61 L647.09,129.98 L650.73,128.35 L654.39,126.73 L658.08,125.10 L661.77,123.47 L665.49,121.84 L669.23,120.22 L672.98,118.59 L676.75,116.96 L680.54,115.33 L684.34,113.71 L688.17,112.08 L692.00,110.45 L695.86,108.82 L699.73,107.20 L703.61,105.57 L707.51,103.94 L711.43,102.31 L715.35,100.69 L719.30,99.06 L723.26,97.43 L727.23,95.80 L731.21,94.18 L735.21,92.55 L739.22,90.92 L743.24,89.29 L747.28,87.67 L751.32,86.04 L755.38,84.41 L759.45,82.78 L763.53,81.16 L767.62,79.53 L771.72,77.90 L775.83,76.27 L779.95,74.65 L784.08,73.02 L788.22,71.39 L792.37,69.76 L796.52,68.14 L800.69,66.51 L804.86,64.88 L809.04,63.25 L813.22,61.63 L817.42,60.00 L821.62,58.37 L825.82,56.75 L830.03,55.12 L834.25,53.49 L838.47,51.86 L842.70,50.24 L846.93,48.61 L851.16,46.98 L855.40,45.35 L859.65,43.72 L863.89,42.10 L868.14,40.47 L872.39,38.84 L876.65,37.21 L880.90,35.59 L885.16,33.96 L889.42,32.33 L893.68,30.70 L897.94,29.08 L902.20,27.45" fill="none" stroke="#d8d8d8" stroke-opacity="0.5" stroke-width="2" stroke-dasharray="2.08 3.44"/>
<path d="M902.20,613.35 L897.51,611.72 L892.83,610.10 L888.14,608.47 L883.46,606.84 L878.77,605.21 L874.09,603.59 L869.41,601.96 L864.74,600.33 L860.06,598.70 L855.39,597.08 L850.72,595.45 L846.06,593.82 L841.40,592.19 L836.75,590.56 L832.10,588.94 L827.45,587.31 L822.82,585.68 L818.18,584.05 L813.56,582.43 L808.94,580.80 L804.33,579.17 L799.72,577.54 L795.12,575.92 L790.54,574.29 L785.96,572.66 L781.38,571.03 L776.82,569.41 L772.27,567.78 L767.73,566.15 L763.19,564.52 L758.67,562.90 L754.16,561.27 L749.66,559.64 L745.17,558.01 L740.70,556.39 L736.23,554.76 L731.78,553.13 L727.35,551.50 L722.92,549.88 L718.51,548.25 L714.11,546.62 L709.73,545.00 L705.36,543.37 L701.01,541.74 L696.67,540.11 L692.35,538.48 L688.04,536.86 L683.75,535.23 L679.48,533.60 L675.22,531.97 L670.98,530.35 L666.76,528.72 L662.56,527.09 L658.37,525.46 L654.21,523.84 L650.06,522.21 L645.93,520.58 L641.82,518.95 L637.73,517.33 L633.66,515.70 L629.61,514.07 L625.59,512.44 L621.58,510.82 L617.59,509.19 L613.63,507.56 L609.69,505.93 L605.77,504.31 L601.87,502.68 L598.00,501.05 L594.15,499.42 L590.32,497.80 L586.52,496.17 L582.74,494.54 L578.98,492.91 L575.25,491.29 L571.54,489.66 L567.86,488.03 L564.21,486.40 L560.58,484.78 L556.97,483.15 L553.40,481.52 L549.85,479.89 L546.32,478.27 L542.83,476.64 L539.36,475.01 L535.92,473.38 L532.50,471.76 L529.12,470.13 L525.76,468.50 L522.43,466.88 L519.13,465.25 L515.86,463.62 L512.62,461.99 L509.41,460.37 L506.23,458.74 L503.08,457.11 L499.95,455.48 L496.86,453.85 L493.80,452.23 L490.78,450.60 L487.78,448.97 L484.81,447.34 L481.88,445.72 L478.98,444.09 L476.11,442.46 L473.27,440.83 L470.47,439.21 L467.70,437.58 L464.96,435.95 L462.25,434.32 L459.58,432.70 L456.94,431.07 L454.34,429.44 L451.77,427.81 L449.24,426.19 L446.73,424.56 L444.27,422.93 L441.84,421.30 L439.44,419.68 L437.08,418.05 L434.75,416.42 L432.46,414.79 L430.21,413.17 L427.99,411.54 L425.81,409.91 L423.66,408.28 L421.55,406.66 L419.48,405.03 L417.44,403.40 L415.44,401.77 L413.48,400.15 L411.56,398.52 L409.67,396.89 L407.82,395.26 L406.01,393.64 L404.23,392.01 L402.50,390.38 L400.80,388.75 L399.14,387.13 L397.51,385.50 L395.93,383.87 L394.39,382.25 L392.88,380.62 L391.41,378.99 L389.98,377.36 L388.59,375.73 L387.24,374.11 L385.93,372.48 L384.66,370.85 L383.43,369.22 L382.23,367.60 L381.08,365.97 L379.96,364.34 L378.89,362.71 L377.86,361.09 L376.86,359.46 L375.91,357.83 L374.99,356.20 L374.12,354.58 L373.28,352.95 L372.49,351.32 L371.74,349.69 L371.02,348.07 L370.35,346.44 L369.72,344.81 L369.13,343.19 L368.58,341.56 L368.07,339.93 L367.60,338.30 L367.17,336.67 L366.78,335.05 L366.43,333.42 L366.13,331.79 L365.86,330.16 L365.64,328.54 L365.45,326.91 L365.31,325.28 L365.21,323.65 L365.15,322.03 L365.13,320.40 L365.15,318.77 L365.21,317.14 L365.31,315.52 L365.45,313.89 L365.64,312.26 L365.86,310.63 L366.13,309.01 L366.43,307.38 L366.78,305.75 L367.17,304.12 L367.60,302.50 L368.07,300.87 L368.58,299.24 L369.13,297.61 L369.72,295.99 L370.35,294.36 L371.02,292.73 L371.74,291.10 L372.49,289.48 L373.28,287.85 L374.12,286.22 L374.99,284.59 L375.91,282.97 L376.86,281.34 L377.86,279.71 L378.89,278.08 L379.96,276.46 L381.08,274.83 L382.23,273.20 L383.43,271.57 L384.66,269.95 L385.93,268.32 L387.24,266.69 L388.59,265.06 L389.98,263.44 L391.41,261.81 L392.88,260.18 L394.39,258.55 L395.93,256.93 L397.51,255.30 L399.14,253.67 L400.80,252.04 L402.50,250.42 L404.23,248.79 L406.01,247.16 L407.82,245.53 L409.67,243.91 L411.56,242.28 L413.48,240.65 L415.44,239.02 L417.44,237.40 L419.48,235.77 L421.55,234.14 L423.66,232.51 L425.81,230.89 L427.99,229.26 L430.21,227.63 L432.46,226.00 L434.75,224.38 L437.08,222.75 L439.44,221.12 L441.84,219.49 L444.27,217.87 L446.73,216.24 L449.24,214.61 L451.77,212.98 L454.34,211.36 L456.94,209.73 L459.58,208.10 L462.25,206.47 L464.96,204.85 L467.70,203.22 L470.47,201.59 L473.27,199.96 L476.11,198.34 L478.98,196.71 L481.88,195.08 L484.81,193.45 L487.78,191.83 L490.78,190.20 L493.80,188.57 L496.86,186.94 L499.95,185.32 L503.08,183.69 L506.23,182.06 L509.41,180.43 L512.62,178.81 L515.86,177.18 L519.13,175.55 L522.43,173.92 L525.76,172.30 L529.12,170.67 L532.50,169.04 L535.92,167.41 L539.36,165.79 L542.83,164.16 L546.32,162.53 L549.85,160.90 L553.40,159.28 L556.97,157.65 L560.58,156.02 L564.21,154.39 L567.86,152.77 L571.54,151.14 L575.25,149.51 L578.98,147.88 L582.74,146.26 L586.52,144.63 L590.32,143.00 L594.15,141.37 L598.00,139.75 L601.87,138.12 L605.77,136.49 L609.69,134.86 L613.63,133.24 L617.59,131.61 L621.58,129.98 L625.59,128.35 L629.61,126.73 L633.66,125.10 L637.73,123.47 L641.82,121.84 L645.93,120.22 L650.06,118.59 L654.21,116.96 L658.37,115.33 L662.56,113.71 L666.76,112.08 L670.98,110.45 L675.22,108.82 L679.48,107.20 L683.75,105.57 L688.04,103.94 L692.35,102.31 L696.67,100.69 L701.01,99.06 L705.36,97.43 L709.73,95.80 L714.11,94.18 L718.51,92.55 L722.92,90.92 L727.35,89.29 L731.78,87.67 L736.23,86.04 L740.70,84.41 L745.17,82.78 L749.66,81.16 L754.16,79.53 L758.67,77.90 L763.19,76.27 L767.73,74.65 L772.27,73.02 L776.82,71.39 L781.38,69.76 L785.96,68.14 L790.54,66.51 L795.12,64.88 L799.72,63.25 L804.33,61.63 L808.94,60.00 L813.56,58.37 L818.18,56.75 L822.82,55.12 L827.45,53.49 L832.10,51.86 L836.75,50.24 L841.40,48.61 L846.06,46.98 L850.72,45.35 L855.39,43.72 L860.06,42.10 L864.74,40.47 L869.41,38.84 L874.09,37.21 L878.77,35.59 L883.46,33.96 L888.14,32.33 L892.83,30.70 L897.51,29.08 L902.20,27.45" fill="none" stroke="#d8d8d8" stroke-opacity="0.5" stroke-width="2" stroke-dasharray="2.08 3.44"/>
<path d="M902.20,613.35 L897.09,611.72 L891.97,610.10 L886.86,608.47 L881.75,606.84 L876.64,605.21 L871.54,603.59 L866.43,601.96 L861.33,600.33 L856.23,598.70 L851.14,597.08 L846.04,595.45 L840.96,593.82 L835.87,592.19 L830.80,590.56 L825.72,588.94 L820.66,587.31 L815.60,585.68 L810.55,584.05 L805.50,582.43 L800.46,580.80 L795.43,579.17 L790.41,577.54 L785.39,575.92 L780.38,574.29 L775.39,572.66 L770.40,571.03 L765.42,569.41 L760.46,567.78 L755.50,566.15 L750.56,564.52 L745.63,562.90 L740.70,561.27 L735.80,559.64 L730.90,558.01 L726.02,556.39 L721.15,554.76 L716.29,553.13 L711.45,551.50 L706.62,549.88 L701.81,548.25 L697.01,546.62 L692.23,545.00 L687.47,543.37 L682.72,541.74 L677.99,540.11 L673.27,538.48 L668.57,536.86 L663.89,535.23 L659.23,533.60 L654.59,531.97 L649.96,530.35 L645.36,528.72 L640.77,527.09 L636.21,525.46 L631.66,523.84 L627.14,522.21 L622.63,520.58 L618.15,518.95 L613.69,517.33 L609.25,515.70 L604.83,514.07 L600.44,512.44 L596.07,510.82 L591.72,509.19 L587.40,507.56 L583.10,505.93 L578.82,504.31 L574.57,502.68 L570.34,501.05 L566.14,499.42 L561.97,497.80 L557.82,496.17 L553.69,494.54 L549.60,492.91 L545.53,491.29 L541.48,489.66 L537.47,488.03 L533.48,486.40 L529.52,484.78 L525.59,483.15 L521.69,481.52 L517.82,479.89 L513.97,478.27 L510.16,476.64 L506.37,475.01 L502.62,473.38 L498.89,471.76 L495.20,470.13 L491.54,468.50 L487.91,466.88 L484.31,465.25 L480.74,463.62 L477.20,461.99 L473.70,460.37 L470.23,458.74 L466.79,457.11 L463.39,455.48 L460.02,453.85 L456.68,452.23 L453.37,450.60 L450.11,448.97 L446.87,447.34 L443.67,445.72 L440.50,444.09 L437.37,442.46 L434.28,440.83 L431.22,439.21 L428.20,437.58 L425.21,435.95 L422.26,434.32 L419.34,432.70 L416.47,431.07 L413.63,429.44 L410.82,427.81 L408.06,426.19 L405.33,424.56 L402.64,422.93 L399.99,421.30 L397.37,419.68 L394.80,418.05 L392.26,416.42 L389.76,414.79 L387.30,413.17 L384.88,411.54 L382.50,409.91 L380.16,408.28 L377.86,406.66 L375.60,405.03 L373.38,403.40 L371.19,401.77 L369.05,400.15 L366.95,398.52 L364.89,396.89 L362.88,395.26 L360.90,393.64 L358.96,392.01 L357.07,390.38 L355.22,388.75 L353.40,387.13 L351.63,385.50 L349.91,383.87 L348.22,382.25 L346.58,380.62 L344.98,378.99 L343.42,377.36 L341.90,375.73 L340.43,374.11 L339.00,372.48 L337.61,370.85 L336.26,369.22 L334.96,367.60 L333.70,365.97 L332.49,364.34 L331.32,362.71 L330.19,361.09 L329.10,359.46 L328.06,357.83 L327.06,356.20 L326.11,354.58 L325.20,352.95 L324.34,351.32 L323.51,349.69 L322.74,348.07 L322.00,346.44 L321.31,344.81 L320.67,343.19 L320.07,341.56 L319.51,339.93 L319.00,338.30 L318.53,336.67 L318.11,335.05 L317.73,333.42 L317.39,331.79 L317.10,330.16 L316.86,328.54 L316.66,326.91 L316.50,325.28 L316.39,323.65 L316.32,322.03 L316.30,320.40 L316.32,318.77 L316.39,317.14 L316.50,315.52 L316.66,313.89 L316.86,312.26 L317.10,310.63 L317.39,309.01 L317.73,307.38 L318.11,305.75 L318.53,304.12 L319.00,302.50 L319.51,300.87 L320.07,299.24 L320.67,297.61 L321.31,295.99 L322.00,294.36 L322.74,292.73 L323.51,291.10 L324.34,289.48 L325.20,287.85 L326.11,286.22 L327.06,284.59 L328.06,282.97 L329.10,281.34 L330.19,279.71 L331.32,278.08 L332.49,276.46 L333.70,274.83 L334.96,273.20 L336.26,271.57 L337.61,269.95 L339.00,268.32 L340.43,266.69 L341.90,265.06 L343.42,263.44 L344.98,261.81 L346.58,260.18 L348.22,258.55 L349.91,256.93 L351.63,255.30 L353.40,253.67 L355.22,252.04 L357.07,250.42 L358.96,248.79 L360.90,247.16 L362.88,245.53 L364.89,243.91 L366.95,242.28 L369.05,240.65 L371.19,239.02 L373.38,237.40 L375.60,235.77 L377.86,234.14 L380.16,232.51 L382.50,230.89 L384.88,229.26 L387.30,227.63 L389.76,226.00 L392.26,224.38 L394.80,222.75 L397.37,221.12 L399.99,219.49 L402.64,217.87 L405.33,216.24 L408.06,214.61 L410.82,212.98 L413.63,211.36 L416.47,209.73 L419.34,208.10 L422.26,206.47 L425.21,204.85 L428.20,203.22 L431.22,201.59 L434.28,199.96 L437.37,198.34 L440.50,196.71 L443.67,195.08 L446.87,193.45 L450.11,191.83 L453.37,190.20 L456.68,188.57 L460.02,186.94 L463.39,185.32 L466.79,183.69 L470.23,182.06 L473.70,180.43 L477.20,178.81 L480.74,177.18 L484.31,175.55 L487.91,173.92 L491.54,172.30 L495.20,170.67 L498.89,169.04 L502.62,167.41 L506.37,165.79 L510.16,164.16 L513.97,162.53 L517.82,160.90 L521.69,159.28 L525.59,157.65 L529.52,156.02 L533.48,154.39 L537.47,152.77 L541.48,151.14 L545.53,149.51 L549.60,147.88 L553.69,146.26 L557.82,144.63 L561.97,143.00 L566.14,141.37 L570.34,139.75 L574.57,138.12 L578.82,136.49 L583.10,134.86 L587.40,133.24 L591.72,131.61 L596.07,129.98 L600.44,128.35 L604.83,126.73 L609.25,125.10 L613.69,123.47 L618.15,121.84 L622.63,120.22 L627.14,118.59 L631.66,116.96 L636.21,115.33 L640.77,113.71 L645.36,112.08 L649.96,110.45 L654.59,108.82 L659.23,107.20 L663.89,105.57 L668.57,103.94 L673.27,102.31 L677.99,100.69 L682.72,99.06 L687.47,97.43 L692.23,95.80 L697.01,94.18 L701.81,92.55 L706.62,90.92 L711.45,89.29 L716.29,87.67 L721.15,86.04 L726.02,84.41 L730.90,82.78 L735.80,81.16 L740.70,79.53 L745.63,77.90 L750.56,76.27 L755.50,74.65 L760.46,73.02 L765.42,71.39 L770.40,69.76 L775.39,68.14 L780.38,66.51 L785.39,64.88 L790.41,63.25 L795.43,61.63 L800.46,60.00 L805.50,58.37 L810.55,56.75 L815.60,55.12 L820.66,53.49 L825.72,51.86 L830.80,50.24 L835.87,48.61 L840.96,46.98 L846.04,45.35 L851.14,43.72 L856.23,42.10 L861.33,40.47 L866.43,38.84 L871.54,37.21 L876.64,35.59 L881.75,33.96 L886.86,32.33 L891.97,30.70 L897.09,29.08 L902.20,27.45" fill="none" stroke="#d8d8d8" stroke-opacity="0.5" stroke-width="2" stroke-dasharray="2.08 3.44"/>
<text x="890.41" y="24.90" font-size="10.30" fill="#8a8a8a" text-anchor="start" textLength="20.58" lengthAdjust="spacingAndGlyphs" >+90</text>
<circle cx="914.79" cy="17.90" r="1.0" fill="none" stroke="#8a8a8a" stroke-width="0.7"/>
<text x="890.41" y="123.00" font-size="10.30" fill="#8a8a8a" text-anchor="start" textLength="20.58" lengthAdjust="spacingAndGlyphs" >+60</text>
<circle cx="914.79" cy="116.00" r="1.0" fill="none" stroke="#8a8a8a" stroke-width="0.7"/>
<text x="890.41" y="220.90" font-size="10.30" fill="#8a8a8a" text-anchor="start" textLength="20.58" lengthAdjust="spacingAndGlyphs" >+30</text>
<circle cx="914.79" cy="213.90" r="1.0" fill="none" stroke="#8a8a8a" stroke-width="0.7"/>
<text x="890.41" y="428.00" font-size="10.30" fill="#8a8a8a" text-anchor="start" textLength="20.58" lengthAdjust="spacingAndGlyphs" >−30</text>
<circle cx="914.79" cy="421.00" r="1.0" fill="none" stroke="#8a8a8a" stroke-width="0.7"/>
<text x="890.41" y="525.80" font-size="10.30" fill="#8a8a8a" text-anchor="start" textLength="20.58" lengthAdjust="spacingAndGlyphs" >−60</text>
<circle cx="914.79" cy="518.80" r="1.0" fill="none" stroke="#8a8a8a" stroke-width="0.7"/>
<text x="890.41" y="624.00" font-size="10.30" fill="#8a8a8a" text-anchor="start" textLength="20.58" lengthAdjust="spacingAndGlyphs" >−90</text>
<circle cx="914.79" cy="617.00" r="1.0" fill="none" stroke="#8a8a8a" stroke-width="0.7"/>
<text x="1471.71" y="330.00" font-size="10.30" fill="#8a8a8a" text-anchor="start" textLength="26.78" lengthAdjust="spacingAndGlyphs" >+180</text>
<circle cx="1502.29" cy="323.00" r="1.0" fill="none" stroke="#8a8a8a" stroke-width="0.7"/>
<text x="1374.06" y="330.00" font-size="10.30" fill="#8a8a8a" text-anchor="start" textLength="26.78" lengthAdjust="spacingAndGlyphs" >+210</text>
<circle cx="1404.64" cy="323.00" r="1.0" fill="none" stroke="#8a8a8a" stroke-width="0.7"/>
<text x="1276.41" y="330.00" font-size="10.30" fill="#8a8a8a" text-anchor="start" textLength="26.78" lengthAdjust="spacingAndGlyphs" >+240</text>
<circle cx="1306.99" cy="323.00" r="1.0" fill="none" stroke="#8a8a8a" stroke-width="0.7"/>
<text x="1178.76" y="330.00" font-size="10.30" fill="#8a8a8a" text-anchor="start" textLength="26.78" lengthAdjust="spacingAndGlyphs" >+270</text>
<circle cx="1209.34" cy="323.00" r="1.0" fill="none" stroke="#8a8a8a" stroke-width="0.7"/>
<text x="1081.11" y="330.00" font-size="10.30" fill="#8a8a8a" text-anchor="start" textLength="26.78" lengthAdjust="spacingAndGlyphs" >+300</text>
<circle cx="1111.69" cy="323.00" r="1.0" fill="none" stroke="#8a8a8a" stroke-width="0.7"/>
<text x="983.46" y="330.00" font-size="10.30" fill="#8a8a8a" text-anchor="start" textLength="26.78" lengthAdjust="spacingAndGlyphs" >+330</text>
<circle cx="1014.04" cy="323.00" r="1.0" fill="none" stroke="#8a8a8a" stroke-width="0.7"/>
<text x="892.01" y="330.00" font-size="10.30" fill="#8a8a8a" text-anchor="start" textLength="14.38" lengthAdjust="spacingAndGlyphs" >+0</text>
<circle cx="910.19" cy="323.00" r="1.0" fill="none" stroke="#8a8a8a" stroke-width="0.7"/>
<text x="791.26" y="330.00" font-size="10.30" fill="#8a8a8a" text-anchor="start" textLength="20.58" lengthAdjust="spacingAndGlyphs" >+30</text>
<circle cx="815.64" cy="323.00" r="1.0" fill="none" stroke="#8a8a8a" stroke-width="0.7"/>
<text x="693.61" y="330.00" font-size="10.30" fill="#8a8a8a" text-anchor="start" textLength="20.58" lengthAdjust="spacingAndGlyphs" >+60</text>
<circle cx="717.99" cy="323.00" r="1.0" fill="none" stroke="#8a8a8a" stroke-width="0.7"/>
<text x="595.96" y="330.00" font-size="10.30" fill="#8a8a8a" text-anchor="start" textLength="20.58" lengthAdjust="spacingAndGlyphs" >+90</text>
<circle cx="620.34" cy="323.00" r="1.0" fill="none" stroke="#8a8a8a" stroke-width="0.7"/>
<text x="495.21" y="330.00" font-size="10.30" fill="#8a8a8a" text-anchor="start" textLength="26.78" lengthAdjust="spacingAndGlyphs" >+120</text>
<circle cx="525.79" cy="323.00" r="1.0" fill="none" stroke="#8a8a8a" stroke-width="0.7"/>
<text x="397.56" y="330.00" font-size="10.30" fill="#8a8a8a" text-anchor="start" textLength="26.78" lengthAdjust="spacingAndGlyphs" >+150</text>
<circle cx="428.14" cy="323.00" r="1.0" fill="none" stroke="#8a8a8a" stroke-width="0.7"/>
<text x="299.91" y="330.00" font-size="10.30" fill="#8a8a8a" text-anchor="start" textLength="26.78" lengthAdjust="spacingAndGlyphs" >+180</text>
<circle cx="330.49" cy="323.00" r="1.0" fill="none" stroke="#8a8a8a" stroke-width="0.7"/>
<path d="M404,426 C403.8,424.3 403.0,421.7 403,416 C403.0,410.3 403.2,399.3 404,392 C404.8,384.7 406.0,378.7 408,372 C410.0,365.3 412.3,359.0 416,352 C419.7,345.0 424.3,337.3 430,330 C435.7,322.7 442.3,314.7 450,308 C457.7,301.3 467.0,296.2 476,290 C485.0,283.8 491.7,278.5 504,271 C516.3,263.5 535.7,252.3 550,245 C564.3,237.7 575.0,233.5 590,227 C605.0,220.5 624.0,212.0 640,206 C656.0,200.0 678.3,193.5 686,191" fill="none" stroke="#4e4e4e" stroke-width="1.1" stroke-dasharray="1.4 2.3"/>
<path d="M628,248 C626.3,251.0 622.3,258.3 618,266 C613.7,273.7 606.0,285.7 602,294 C598.0,302.3 596.0,308.3 594,316 C592.0,323.7 590.3,332.7 590,340 C589.7,347.3 590.3,351.7 592,360 C593.7,368.3 597.0,381.0 600,390 C603.0,399.0 601.5,403.0 610,414 C618.5,425.0 636.8,442.5 651,456 C665.2,469.5 680.7,483.2 695,495 C709.3,506.8 723.5,516.0 737,527 C750.5,538.0 758.8,550.5 776,561 C793.2,571.5 819.0,581.3 840,590 C861.0,598.7 891.7,609.2 902,613" fill="none" stroke="#4e4e4e" stroke-width="1.1" stroke-dasharray="1.4 2.3"/>
<path d="M686,190.8 L692.5,189" stroke="#888" stroke-width="1.3"/>
<path d="M621.5,257 L629.5,247" stroke="#888" stroke-width="1.3"/>
<path d="M503,308 Q620,305 746,306.5" fill="none" stroke="#4ec36b" stroke-width="1.3" stroke-dasharray="1.3 2.45"/>
<path d="M497,308 L503,308" stroke="#4ec36b" stroke-width="1.6"/>
<path d="M522,318.5 Q545,292 584,266" fill="none" stroke="#2ab07f" stroke-width="1.3" stroke-dasharray="1.3 2.45"/>
<path d="M514,328 L522,318.5" stroke="#2ab07f" stroke-width="1.6"/>
<rect x="496" y="307" width="2.2" height="2.2" fill="#f0643c"/>
<rect x="513" y="327" width="2.2" height="2.2" fill="#f0643c"/>
<path d="M584.3,263 L584.3,269 M581.8,266.1 L586.8,266.1" stroke="#ff0000" stroke-width="1.2"/>
<path d="M746.4,304.8 L746.4,311.8 M744,308.3 L748.8,308.3" stroke="#ff0000" stroke-width="1.2"/>
<path d="M600.16,244.60 L599.29,244.62 L598.39,244.67 L597.48,244.75 L596.55,244.86 L595.60,245.00 L594.63,245.17 L593.65,245.37 L592.66,245.61 L591.65,245.87 L590.64,246.16 L589.61,246.48 L588.58,246.83 L587.54,247.21 L586.50,247.62 L585.45,248.06 L584.41,248.52 L583.36,249.00 L582.31,249.52 L581.27,250.05 L580.24,250.62 L579.21,251.20 L578.19,251.81 L577.18,252.43 L576.19,253.08 L575.20,253.75 L574.24,254.44 L573.29,255.15 L572.35,255.87 L571.44,256.61 L570.55,257.36 L569.68,258.13 L568.84,258.91 L568.02,259.71 L567.23,260.51 L566.47,261.33 L565.74,262.15 L565.04,262.98 L564.37,263.82 L563.73,264.67 L563.12,265.52 L562.55,266.38 L562.02,267.24 L561.52,268.10 L561.06,268.96 L560.63,269.82 L560.25,270.68 L559.90,271.54 L559.59,272.39 L559.31,273.24 L559.08,274.09 L558.88,274.93 L558.73,275.76 L558.61,276.58 L558.54,277.40 L558.50,278.20 L558.50,279.00 L558.54,279.78 L558.61,280.55 L558.73,281.31 L558.88,282.05 L559.07,282.77 L559.29,283.48 L559.55,284.18 L559.84,284.85 L560.17,285.51 L560.53,286.14 L560.93,286.76 L561.35,287.36 L561.81,287.93 L562.29,288.48 L562.81,289.01 L563.35,289.52 L563.92,290.00 L564.51,290.46 L565.13,290.89 L565.77,291.30 L566.44,291.68 L567.13,292.04 L567.83,292.36 L568.56,292.66 L569.30,292.94 L570.06,293.18 L570.84,293.40 L571.63,293.59 L572.44,293.75 L573.26,293.88 L574.09,293.98 L574.93,294.05 L575.78,294.10 L576.63,294.11 L577.50,294.10 L578.37,294.05 L579.25,293.98 L580.13,293.88 L581.01,293.75 L581.90,293.59 L582.79,293.40 L583.67,293.18 L584.56,292.94 L585.45,292.66 L586.33,292.36 L587.21,292.04 L588.09,291.68 L588.96,291.30 L589.83,290.89 L590.69,290.46 L591.55,290.00 L592.39,289.52 L593.23,289.01 L594.06,288.48 L594.88,287.93 L595.69,287.36 L596.49,286.76 L597.28,286.14 L598.05,285.51 L598.81,284.85 L599.56,284.18 L600.30,283.48 L601.02,282.77 L601.73,282.05 L602.42,281.31 L603.09,280.55 L603.75,279.78 L604.39,279.00 L605.01,278.20 L605.61,277.40 L606.20,276.58 L606.77,275.76 L607.31,274.93 L607.84,274.09 L608.35,273.24 L608.83,272.39 L609.29,271.54 L609.74,270.68 L610.15,269.82 L610.55,268.96 L610.92,268.10 L611.27,267.24 L611.59,266.38 L611.89,265.52 L612.16,264.67 L612.41,263.82 L612.63,262.98 L612.82,262.15 L612.99,261.33 L613.13,260.51 L613.24,259.71 L613.33,258.91 L613.38,258.13 L613.41,257.36 L613.40,256.61 L613.37,255.87 L613.31,255.15 L613.22,254.44 L613.09,253.75 L612.94,253.08 L612.75,252.43 L612.54,251.81 L612.29,251.20 L612.01,250.62 L611.70,250.05 L611.36,249.52 L610.99,249.00 L610.59,248.52 L610.16,248.06 L609.69,247.62 L609.20,247.21 L608.67,246.83 L608.11,246.48 L607.53,246.16 L606.91,245.87 L606.27,245.61 L605.60,245.37 L604.90,245.17 L604.17,245.00 L603.42,244.86 L602.64,244.75 L601.84,244.67 L601.01,244.62 Z" fill="none" stroke="#2ab07f" stroke-width="2.3"/>
<path d="M755.23,258.42 L754.37,258.43 L753.50,258.48 L752.63,258.55 L751.75,258.66 L750.87,258.80 L749.98,258.97 L749.09,259.17 L748.21,259.40 L747.32,259.66 L746.43,259.95 L745.55,260.26 L744.67,260.61 L743.79,260.98 L742.93,261.38 L742.07,261.81 L741.21,262.26 L740.37,262.74 L739.54,263.25 L738.72,263.78 L737.92,264.33 L737.13,264.90 L736.36,265.50 L735.60,266.12 L734.86,266.76 L734.14,267.42 L733.44,268.10 L732.77,268.79 L732.11,269.51 L731.48,270.24 L730.87,270.98 L730.29,271.74 L729.73,272.51 L729.20,273.30 L728.70,274.10 L728.23,274.90 L727.79,275.72 L727.37,276.54 L726.99,277.38 L726.64,278.21 L726.32,279.06 L726.03,279.91 L725.77,280.76 L725.55,281.61 L725.36,282.47 L725.20,283.32 L725.08,284.18 L724.99,285.03 L724.93,285.88 L724.91,286.73 L724.92,287.57 L724.96,288.40 L725.04,289.23 L725.15,290.05 L725.29,290.86 L725.47,291.67 L725.68,292.46 L725.92,293.24 L726.19,294.01 L726.50,294.76 L726.83,295.50 L727.20,296.23 L727.59,296.93 L728.01,297.63 L728.46,298.30 L728.94,298.96 L729.44,299.59 L729.97,300.21 L730.53,300.81 L731.11,301.38 L731.71,301.93 L732.33,302.46 L732.98,302.97 L733.64,303.45 L734.33,303.91 L735.03,304.34 L735.75,304.75 L736.49,305.13 L737.24,305.49 L738.01,305.82 L738.79,306.12 L739.58,306.39 L740.38,306.64 L741.20,306.86 L742.02,307.05 L742.85,307.21 L743.69,307.34 L744.53,307.44 L745.38,307.51 L746.23,307.56 L747.09,307.57 L747.94,307.56 L748.80,307.51 L749.66,307.44 L750.51,307.34 L751.36,307.21 L752.21,307.05 L753.06,306.86 L753.90,306.64 L754.73,306.39 L755.56,306.12 L756.38,305.82 L757.19,305.49 L757.99,305.13 L758.78,304.75 L759.56,304.34 L760.32,303.91 L761.08,303.45 L761.82,302.97 L762.54,302.46 L763.25,301.93 L763.95,301.38 L764.62,300.81 L765.28,300.21 L765.93,299.59 L766.55,298.96 L767.16,298.30 L767.74,297.63 L768.31,296.93 L768.85,296.23 L769.37,295.50 L769.87,294.76 L770.35,294.01 L770.81,293.24 L771.24,292.46 L771.65,291.67 L772.03,290.86 L772.40,290.05 L772.73,289.23 L773.04,288.40 L773.33,287.57 L773.59,286.73 L773.82,285.88 L774.03,285.03 L774.21,284.18 L774.36,283.32 L774.49,282.47 L774.59,281.61 L774.66,280.76 L774.71,279.91 L774.73,279.06 L774.72,278.21 L774.69,277.38 L774.62,276.54 L774.53,275.72 L774.41,274.90 L774.27,274.10 L774.10,273.30 L773.90,272.51 L773.67,271.74 L773.42,270.98 L773.14,270.24 L772.83,269.51 L772.50,268.79 L772.14,268.10 L771.76,267.42 L771.35,266.76 L770.92,266.12 L770.46,265.50 L769.97,264.90 L769.47,264.33 L768.94,263.78 L768.38,263.25 L767.81,262.74 L767.21,262.26 L766.59,261.81 L765.95,261.38 L765.29,260.98 L764.61,260.61 L763.92,260.26 L763.20,259.95 L762.47,259.66 L761.72,259.40 L760.95,259.17 L760.17,258.97 L759.38,258.80 L758.57,258.66 L757.75,258.55 L756.92,258.48 L756.08,258.43 Z" fill="none" stroke="#4ec36b" stroke-width="2.3"/>
<text x="585.50" y="273.20" font-size="11.77" fill="#ffffff" text-anchor="middle" textLength="17.10" lengthAdjust="spacingAndGlyphs" >ORI</text>
<text x="750.00" y="286.40" font-size="11.77" fill="#ffffff" text-anchor="middle" textLength="18.53" lengthAdjust="spacingAndGlyphs" >STA</text>
<text x="315.0" y="30.00" font-family="'Liberation Mono', monospace" font-size="14.6" fill="#ffffff" textLength="50.01" lengthAdjust="spacingAndGlyphs" xml:space="preserve">BR0021</text>
<text x="315.0" y="42.95" font-family="'Liberation Mono', monospace" font-size="14.6" fill="#ffffff" textLength="316.73" lengthAdjust="spacingAndGlyphs" xml:space="preserve">Beg: 20251028 05:47:25 (sol = 214.71°)</text>
<text x="315.0" y="55.90" font-family="'Liberation Mono', monospace" font-size="14.6" fill="#ffffff" textLength="316.73" lengthAdjust="spacingAndGlyphs" xml:space="preserve">End: 20251028 06:11:00 (sol = 214.73°)</text>
<text x="315.0" y="68.85" font-family="'Liberation Mono', monospace" font-size="14.6" fill="#ffffff" textLength="316.73" lengthAdjust="spacingAndGlyphs" xml:space="preserve">--------------------------------------</text>
<text x="315.0" y="81.80" font-family="'Liberation Mono', monospace" font-size="14.6" fill="#ffffff" textLength="50.01" lengthAdjust="spacingAndGlyphs" xml:space="preserve">...: 2</text>
<text x="315.0" y="94.75" font-family="'Liberation Mono', monospace" font-size="14.6" fill="#ffffff" textLength="50.01" lengthAdjust="spacingAndGlyphs" xml:space="preserve">ORI: 1</text>
<text x="315.0" y="107.70" font-family="'Liberation Mono', monospace" font-size="14.6" fill="#ffffff" textLength="50.01" lengthAdjust="spacingAndGlyphs" xml:space="preserve">STA: 1</text>
<text x="0" y="0" transform="translate(148.90,642.50) rotate(-90)" font-size="30.32" fill="#5c5c5c" text-anchor="end" textLength="55.00" lengthAdjust="spacingAndGlyphs">APR</text>
<text x="0" y="0" transform="translate(294.00,643.50) rotate(-90)" font-size="30.32" fill="#5c5c5c" text-anchor="end" textLength="57.75" lengthAdjust="spacingAndGlyphs">MAY</text>
<text x="0" y="0" transform="translate(434.90,641.50) rotate(-90)" font-size="30.32" fill="#5c5c5c" text-anchor="end" textLength="49.27" lengthAdjust="spacingAndGlyphs">JUN</text>
<text x="0" y="0" transform="translate(576.00,641.50) rotate(-90)" font-size="30.32" fill="#5c5c5c" text-anchor="end" textLength="43.97" lengthAdjust="spacingAndGlyphs">JUL</text>
<text x="0" y="0" transform="translate(723.30,643.50) rotate(-90)" font-size="30.32" fill="#5c5c5c" text-anchor="end" textLength="60.80" lengthAdjust="spacingAndGlyphs">AUG</text>
<text x="0" y="0" transform="translate(872.00,643.50) rotate(-90)" font-size="30.32" fill="#5c5c5c" text-anchor="end" textLength="51.88" lengthAdjust="spacingAndGlyphs">SEP</text>
<text x="0" y="0" transform="translate(1016.70,641.80) rotate(-90)" font-size="30.32" fill="#5c5c5c" text-anchor="end" textLength="58.17" lengthAdjust="spacingAndGlyphs">OCT</text>
<text x="0" y="0" transform="translate(1169.30,643.50) rotate(-90)" font-size="30.32" fill="#5c5c5c" text-anchor="end" textLength="61.09" lengthAdjust="spacingAndGlyphs">NOV</text>
<text x="0" y="0" transform="translate(1319.00,641.80) rotate(-90)" font-size="30.32" fill="#5c5c5c" text-anchor="end" textLength="58.28" lengthAdjust="spacingAndGlyphs">DEC</text>
<text x="0" y="0" transform="translate(1469.00,641.80) rotate(-90)" font-size="30.32" fill="#5c5c5c" text-anchor="end" textLength="47.44" lengthAdjust="spacingAndGlyphs">JAN</text>
<text x="0" y="0" transform="translate(1628.00,645.30) rotate(-90)" font-size="30.32" fill="#5c5c5c" text-anchor="end" textLength="52.53" lengthAdjust="spacingAndGlyphs">FEB</text>
<text x="0" y="0" transform="translate(1766.00,644.20) rotate(-90)" font-size="30.32" fill="#5c5c5c" text-anchor="end" textLength="62.20" lengthAdjust="spacingAndGlyphs">MAR</text>
<path d="M1072.5,842.5 L1072.5,641.5" stroke="#ff0000" stroke-width="1.7" stroke-dasharray="5.2 2.13" stroke-dashoffset="-0.8"/>
<rect x="106.00" y="832.00" width="23.20" height="4" fill="#bddf26"/><rect x="164.90" y="832.00" width="180.10" height="4" fill="#bddf26"/><rect x="366.00" y="832.00" width="258.80" height="4" fill="#bddf26"/><rect x="635.00" y="832.00" width="151.00" height="4" fill="#bddf26"/><rect x="807.20" y="832.00" width="91.70" height="4" fill="#bddf26"/><rect x="920.00" y="832.00" width="53.00" height="4" fill="#bddf26"/><rect x="984.00" y="832.00" width="82.00" height="4" fill="#bddf26"/><rect x="1082.20" y="832.00" width="120.70" height="4" fill="#bddf26"/><rect x="1244.00" y="832.00" width="82.00" height="4" fill="#bddf26"/><rect x="1337.00" y="832.00" width="17.80" height="4" fill="#bddf26"/><rect x="1381.00" y="832.00" width="62.80" height="4" fill="#bddf26"/><rect x="1459.00" y="832.00" width="52.90" height="4" fill="#bddf26"/><rect x="1523.00" y="832.00" width="24.00" height="4" fill="#bddf26"/><rect x="1724.00" y="832.00" width="23.80" height="4" fill="#bddf26"/><rect x="1758.00" y="832.00" width="23.80" height="4" fill="#bddf26"/><rect x="164.90" y="815.67" width="23.00" height="4" fill="#81d34d"/><rect x="223.00" y="815.67" width="62.90" height="4" fill="#81d34d"/><rect x="312.00" y="815.67" width="27.90" height="4" fill="#81d34d"/><rect x="366.00" y="815.67" width="126.00" height="4" fill="#81d34d"/><rect x="508.00" y="815.67" width="145.80" height="4" fill="#81d34d"/><rect x="704.00" y="815.67" width="32.80" height="4" fill="#81d34d"/><rect x="773.00" y="815.67" width="71.80" height="4" fill="#81d34d"/><rect x="871.00" y="815.67" width="116.80" height="4" fill="#81d34d"/><rect x="1003.00" y="815.67" width="13.80" height="4" fill="#81d34d"/><rect x="1061.90" y="815.67" width="151.10" height="4" fill="#81d34d"/><rect x="1244.00" y="815.67" width="22.80" height="4" fill="#81d34d"/><rect x="1293.00" y="815.67" width="23.00" height="4" fill="#81d34d"/><rect x="1342.00" y="815.67" width="23.00" height="4" fill="#81d34d"/><rect x="1386.00" y="815.67" width="43.00" height="4" fill="#81d34d"/><rect x="1459.00" y="815.67" width="23.90" height="4" fill="#81d34d"/><rect x="1548.00" y="815.67" width="22.90" height="4" fill="#81d34d"/><rect x="164.90" y="799.34" width="23.00" height="4" fill="#4ec36b"/><rect x="258.00" y="799.34" width="228.80" height="4" fill="#4ec36b"/><rect x="508.00" y="799.34" width="106.90" height="4" fill="#4ec36b"/><rect x="626.00" y="799.34" width="91.90" height="4" fill="#4ec36b"/><rect x="729.00" y="799.34" width="97.00" height="4" fill="#4ec36b"/><rect x="949.20" y="799.34" width="199.60" height="4" fill="#4ec36b"/><rect x="1160.00" y="799.34" width="88.00" height="4" fill="#4ec36b"/><rect x="1258.00" y="799.34" width="185.80" height="4" fill="#4ec36b"/><rect x="1459.00" y="799.34" width="23.90" height="4" fill="#4ec36b"/><rect x="1552.00" y="799.34" width="23.80" height="4" fill="#4ec36b"/><rect x="194.00" y="783.01" width="24.00" height="4" fill="#2ab07f"/><rect x="321.00" y="783.01" width="186.00" height="4" fill="#2ab07f"/><rect x="518.00" y="783.01" width="22.80" height="4" fill="#2ab07f"/><rect x="557.00" y="783.01" width="125.90" height="4" fill="#2ab07f"/><rect x="807.20" y="783.01" width="23.70" height="4" fill="#2ab07f"/><rect x="954.00" y="783.01" width="19.00" height="4" fill="#2ab07f"/><rect x="988.00" y="783.01" width="137.00" height="4" fill="#2ab07f"/><rect x="1155.00" y="783.01" width="63.00" height="4" fill="#2ab07f"/><rect x="1244.00" y="783.01" width="22.80" height="4" fill="#2ab07f"/><rect x="1317.00" y="783.01" width="23.90" height="4" fill="#2ab07f"/><rect x="1396.00" y="783.01" width="22.90" height="4" fill="#2ab07f"/><rect x="1464.00" y="783.01" width="186.00" height="4" fill="#2ab07f"/><rect x="341.00" y="766.68" width="29.00" height="4" fill="#1e9b8a"/><rect x="410.00" y="766.68" width="37.80" height="4" fill="#1e9b8a"/><rect x="469.00" y="766.68" width="23.00" height="4" fill="#1e9b8a"/><rect x="527.00" y="766.68" width="19.00" height="4" fill="#1e9b8a"/><rect x="562.00" y="766.68" width="28.00" height="4" fill="#1e9b8a"/><rect x="616.00" y="766.68" width="33.00" height="4" fill="#1e9b8a"/><rect x="959.00" y="766.68" width="28.80" height="4" fill="#1e9b8a"/><rect x="1062.00" y="766.68" width="24.00" height="4" fill="#1e9b8a"/><rect x="1101.00" y="766.68" width="24.00" height="4" fill="#1e9b8a"/><rect x="1160.00" y="766.68" width="33.90" height="4" fill="#1e9b8a"/><rect x="1248.00" y="766.68" width="23.80" height="4" fill="#1e9b8a"/><rect x="1425.00" y="766.68" width="86.90" height="4" fill="#1e9b8a"/><rect x="420.00" y="750.35" width="22.80" height="4" fill="#25858e"/><rect x="532.00" y="750.35" width="23.90" height="4" fill="#25858e"/><rect x="567.00" y="750.35" width="23.00" height="4" fill="#25858e"/><rect x="621.00" y="750.35" width="121.00" height="4" fill="#25858e"/><rect x="969.00" y="750.35" width="165.80" height="4" fill="#25858e"/><rect x="1185.00" y="750.35" width="160.80" height="4" fill="#25858e"/><rect x="1469.00" y="750.35" width="24.00" height="4" fill="#25858e"/><rect x="429.00" y="734.02" width="24.00" height="4" fill="#2d708e"/><rect x="576.00" y="734.02" width="157.00" height="4" fill="#2d708e"/><rect x="993.00" y="734.02" width="111.80" height="4" fill="#2d708e"/><rect x="1116.00" y="734.02" width="107.00" height="4" fill="#2d708e"/><rect x="1263.00" y="734.02" width="29.00" height="4" fill="#2d708e"/><rect x="1489.00" y="734.02" width="22.90" height="4" fill="#2d708e"/><rect x="590.90" y="717.69" width="24.00" height="4" fill="#375a8c"/><rect x="655.00" y="717.69" width="116.80" height="4" fill="#375a8c"/><rect x="1072.00" y="717.69" width="171.00" height="4" fill="#375a8c"/><rect x="1263.00" y="717.69" width="24.00" height="4" fill="#375a8c"/><rect x="595.80" y="701.36" width="137.20" height="4" fill="#424086"/><rect x="1091.00" y="701.36" width="28.80" height="4" fill="#424086"/><rect x="1199.00" y="701.36" width="24.00" height="4" fill="#424086"/><rect x="1273.00" y="701.36" width="53.00" height="4" fill="#424086"/><rect x="1111.00" y="685.03" width="24.00" height="4" fill="#482475"/>
<path d="M74,842.5 L74,641.5" stroke="#ffffff" stroke-opacity="0.36" stroke-width="1.8" stroke-dasharray="1.8 3.717" stroke-dashoffset="-0.8"/>
<path d="M218,842.5 L218,641.5" stroke="#ffffff" stroke-opacity="0.36" stroke-width="1.8" stroke-dasharray="1.8 3.717" stroke-dashoffset="-0.8"/>
<path d="M364.9,842.5 L364.9,641.5" stroke="#ffffff" stroke-opacity="0.36" stroke-width="1.8" stroke-dasharray="1.8 3.717" stroke-dashoffset="-0.8"/>
<path d="M504.9,842.5 L504.9,641.5" stroke="#ffffff" stroke-opacity="0.36" stroke-width="1.8" stroke-dasharray="1.8 3.717" stroke-dashoffset="-0.8"/>
<path d="M650.2,842.5 L650.2,641.5" stroke="#ffffff" stroke-opacity="0.36" stroke-width="1.8" stroke-dasharray="1.8 3.717" stroke-dashoffset="-0.8"/>
<path d="M797,842.5 L797,641.5" stroke="#ffffff" stroke-opacity="0.36" stroke-width="1.8" stroke-dasharray="1.8 3.717" stroke-dashoffset="-0.8"/>
<path d="M940,842.5 L940,641.5" stroke="#ffffff" stroke-opacity="0.36" stroke-width="1.8" stroke-dasharray="1.8 3.717" stroke-dashoffset="-0.8"/>
<path d="M1091,842.5 L1091,641.5" stroke="#ffffff" stroke-opacity="0.36" stroke-width="1.8" stroke-dasharray="1.8 3.717" stroke-dashoffset="-0.8"/>
<path d="M1239,842.5 L1239,641.5" stroke="#ffffff" stroke-opacity="0.36" stroke-width="1.8" stroke-dasharray="1.8 3.717" stroke-dashoffset="-0.8"/>
<path d="M1394,842.5 L1394,641.5" stroke="#ffffff" stroke-opacity="0.36" stroke-width="1.8" stroke-dasharray="1.8 3.717" stroke-dashoffset="-0.8"/>
<path d="M1548,842.5 L1548,641.5" stroke="#ffffff" stroke-opacity="0.36" stroke-width="1.8" stroke-dasharray="1.8 3.717" stroke-dashoffset="-0.8"/>
<path d="M1687,842.5 L1687,641.5" stroke="#ffffff" stroke-opacity="0.36" stroke-width="1.8" stroke-dasharray="1.8 3.717" stroke-dashoffset="-0.8"/>
<text x="117.10" y="831.50" font-size="11.77" fill="#f0f0f0" text-anchor="middle" textLength="19.89" lengthAdjust="spacingAndGlyphs" >KSE</text>
<text x="254.80" y="831.50" font-size="11.77" fill="#f0f0f0" text-anchor="middle" textLength="19.12" lengthAdjust="spacingAndGlyphs" >ETA</text>
<text x="494.60" y="831.50" font-size="11.77" fill="#f0f0f0" text-anchor="middle" textLength="22.06" lengthAdjust="spacingAndGlyphs" >NZC</text>
<text x="710.75" y="831.50" font-size="11.77" fill="#f0f0f0" text-anchor="middle" textLength="22.55" lengthAdjust="spacingAndGlyphs" >NDA</text>
<text x="852.75" y="831.50" font-size="11.77" fill="#f0f0f0" text-anchor="middle" textLength="19.34" lengthAdjust="spacingAndGlyphs" >SPE</text>
<text x="945.25" y="831.50" font-size="11.77" fill="#f0f0f0" text-anchor="middle" textLength="22.23" lengthAdjust="spacingAndGlyphs" >ARD</text>
<text x="1024.80" y="831.50" font-size="11.77" fill="#f0f0f0" text-anchor="middle" textLength="21.10" lengthAdjust="spacingAndGlyphs" >EGE</text>
<text x="1142.50" y="831.50" font-size="11.77" fill="#f0f0f0" text-anchor="middle" textLength="20.33" lengthAdjust="spacingAndGlyphs" >NTA</text>
<text x="1284.00" y="831.50" font-size="11.77" fill="#f0f0f0" text-anchor="middle" textLength="24.80" lengthAdjust="spacingAndGlyphs" >MON</text>
<text x="1343.60" y="831.50" font-size="11.77" fill="#f0f0f0" text-anchor="middle" textLength="21.33" lengthAdjust="spacingAndGlyphs" >URS</text>
<text x="1411.70" y="831.50" font-size="11.77" fill="#f0f0f0" text-anchor="middle" textLength="21.17" lengthAdjust="spacingAndGlyphs" >AHY</text>
<text x="1485.70" y="831.50" font-size="11.77" fill="#f0f0f0" text-anchor="middle" textLength="24.51" lengthAdjust="spacingAndGlyphs" >GUM</text>
<text x="1535.40" y="831.50" font-size="11.77" fill="#f0f0f0" text-anchor="middle" textLength="22.23" lengthAdjust="spacingAndGlyphs" >OHY</text>
<text x="1735.80" y="831.50" font-size="11.77" fill="#f0f0f0" text-anchor="middle" textLength="21.40" lengthAdjust="spacingAndGlyphs" >XHE</text>
<text x="1769.40" y="831.50" font-size="11.77" fill="#f0f0f0" text-anchor="middle" textLength="16.67" lengthAdjust="spacingAndGlyphs" >EVI</text>
<text x="175.20" y="815.17" font-size="11.77" fill="#f0f0f0" text-anchor="middle" textLength="20.56" lengthAdjust="spacingAndGlyphs" >AVB</text>
<text x="254.70" y="815.17" font-size="11.77" fill="#f0f0f0" text-anchor="middle" textLength="17.23" lengthAdjust="spacingAndGlyphs" >ELY</text>
<text x="323.70" y="815.17" font-size="11.77" fill="#f0f0f0" text-anchor="middle" textLength="23.22" lengthAdjust="spacingAndGlyphs" >CAM</text>
<text x="431.90" y="815.17" font-size="11.77" fill="#f0f0f0" text-anchor="middle" textLength="21.16" lengthAdjust="spacingAndGlyphs" >SSG</text>
<text x="578.50" y="815.17" font-size="11.77" fill="#f0f0f0" text-anchor="middle" textLength="20.53" lengthAdjust="spacingAndGlyphs" >PCA</text>
<text x="720.60" y="815.17" font-size="11.77" fill="#f0f0f0" text-anchor="middle" textLength="22.61" lengthAdjust="spacingAndGlyphs" >AUD</text>
<text x="808.20" y="815.17" font-size="11.77" fill="#f0f0f0" text-anchor="middle" textLength="21.84" lengthAdjust="spacingAndGlyphs" >AUR</text>
<text x="930.80" y="815.17" font-size="11.77" fill="#f0f0f0" text-anchor="middle" textLength="21.62" lengthAdjust="spacingAndGlyphs" >DSX</text>
<text x="1009.80" y="815.17" font-size="11.77" fill="#f0f0f0" text-anchor="middle" textLength="22.93" lengthAdjust="spacingAndGlyphs" >OCU</text>
<text x="1137.20" y="815.17" font-size="11.77" fill="#f0f0f0" text-anchor="middle" textLength="21.87" lengthAdjust="spacingAndGlyphs" >OER</text>
<text x="1255.00" y="815.17" font-size="11.77" fill="#f0f0f0" text-anchor="middle" textLength="22.71" lengthAdjust="spacingAndGlyphs" >DKD</text>
<text x="1304.20" y="815.17" font-size="11.77" fill="#f0f0f0" text-anchor="middle" textLength="21.61" lengthAdjust="spacingAndGlyphs" >DSV</text>
<text x="1352.90" y="815.17" font-size="11.77" fill="#f0f0f0" text-anchor="middle" textLength="17.77" lengthAdjust="spacingAndGlyphs" >ALY</text>
<text x="1407.50" y="815.17" font-size="11.77" fill="#f0f0f0" text-anchor="middle" textLength="15.36" lengthAdjust="spacingAndGlyphs" >ILE</text>
<text x="1471.50" y="815.17" font-size="11.77" fill="#f0f0f0" text-anchor="middle" textLength="21.01" lengthAdjust="spacingAndGlyphs" >SCC</text>
<text x="1559.00" y="815.17" font-size="11.77" fill="#f0f0f0" text-anchor="middle" textLength="19.57" lengthAdjust="spacingAndGlyphs" >FEV</text>
<text x="176.25" y="798.84" font-size="11.77" fill="#f0f0f0" text-anchor="middle" textLength="17.89" lengthAdjust="spacingAndGlyphs" >LYR</text>
<text x="372.90" y="798.84" font-size="11.77" fill="#f0f0f0" text-anchor="middle" textLength="19.20" lengthAdjust="spacingAndGlyphs" >JMC</text>
<text x="558.80" y="798.84" font-size="11.77" fill="#f0f0f0" text-anchor="middle" textLength="15.82" lengthAdjust="spacingAndGlyphs" >JPE</text>
<text x="671.50" y="798.84" font-size="11.77" fill="#f0f0f0" text-anchor="middle" textLength="20.18" lengthAdjust="spacingAndGlyphs" >PAU</text>
<text x="774.20" y="798.84" font-size="11.77" fill="#f0f0f0" text-anchor="middle" textLength="17.87" lengthAdjust="spacingAndGlyphs" >NIA</text>
<text x="1049.60" y="798.84" font-size="11.77" fill="#f0f0f0" text-anchor="middle" textLength="19.15" lengthAdjust="spacingAndGlyphs" >STA</text>
<text x="1205.40" y="798.84" font-size="11.77" fill="#f0f0f0" text-anchor="middle" textLength="24.02" lengthAdjust="spacingAndGlyphs" >NOO</text>
<text x="1353.30" y="798.84" font-size="11.77" fill="#f0f0f0" text-anchor="middle" textLength="24.28" lengthAdjust="spacingAndGlyphs" >COM</text>
<text x="1470.70" y="798.84" font-size="11.77" fill="#f0f0f0" text-anchor="middle" textLength="22.19" lengthAdjust="spacingAndGlyphs" >NCC</text>
<text x="1563.30" y="798.84" font-size="11.77" fill="#f0f0f0" text-anchor="middle" textLength="20.46" lengthAdjust="spacingAndGlyphs" >FED</text>
<text x="205.10" y="782.51" font-size="11.77" fill="#f0f0f0" text-anchor="middle" textLength="17.90" lengthAdjust="spacingAndGlyphs" >HVI</text>
<text x="411.80" y="782.51" font-size="11.77" fill="#f0f0f0" text-anchor="middle" textLength="17.32" lengthAdjust="spacingAndGlyphs" >ARI</text>
<text x="529.75" y="782.51" font-size="11.77" fill="#f0f0f0" text-anchor="middle" textLength="20.88" lengthAdjust="spacingAndGlyphs" >SZC</text>
<text x="617.50" y="782.51" font-size="11.77" fill="#f0f0f0" text-anchor="middle" textLength="20.53" lengthAdjust="spacingAndGlyphs" >CAP</text>
<text x="818.30" y="782.51" font-size="11.77" fill="#f0f0f0" text-anchor="middle" textLength="21.86" lengthAdjust="spacingAndGlyphs" >NUE</text>
<text x="961.20" y="782.51" font-size="11.77" fill="#f0f0f0" text-anchor="middle" textLength="21.68" lengthAdjust="spacingAndGlyphs" >OCT</text>
<text x="1059.30" y="782.51" font-size="11.77" fill="#f0f0f0" text-anchor="middle" textLength="18.38" lengthAdjust="spacingAndGlyphs" >ORI</text>
<text x="1186.25" y="782.51" font-size="11.77" fill="#f0f0f0" text-anchor="middle" textLength="24.14" lengthAdjust="spacingAndGlyphs" >AMO</text>
<text x="1255.25" y="782.51" font-size="11.77" fill="#f0f0f0" text-anchor="middle" textLength="21.42" lengthAdjust="spacingAndGlyphs" >DPC</text>
<text x="1329.00" y="782.51" font-size="11.77" fill="#f0f0f0" text-anchor="middle" textLength="17.22" lengthAdjust="spacingAndGlyphs" >XVI</text>
<text x="1407.75" y="782.51" font-size="11.77" fill="#f0f0f0" text-anchor="middle" textLength="22.79" lengthAdjust="spacingAndGlyphs" >QUA</text>
<text x="1559.50" y="782.51" font-size="11.77" fill="#f0f0f0" text-anchor="middle" textLength="22.13" lengthAdjust="spacingAndGlyphs" >AAN</text>
<text x="352.80" y="766.18" font-size="11.77" fill="#f0f0f0" text-anchor="middle" textLength="20.36" lengthAdjust="spacingAndGlyphs" >TAH</text>
<text x="431.30" y="766.18" font-size="11.77" fill="#f0f0f0" text-anchor="middle" textLength="16.67" lengthAdjust="spacingAndGlyphs" >JEA</text>
<text x="480.00" y="766.18" font-size="11.77" fill="#f0f0f0" text-anchor="middle" textLength="12.34" lengthAdjust="spacingAndGlyphs" >JIP</text>
<text x="538.75" y="766.18" font-size="11.77" fill="#f0f0f0" text-anchor="middle" textLength="19.04" lengthAdjust="spacingAndGlyphs" >PPS</text>
<text x="578.75" y="766.18" font-size="11.77" fill="#f0f0f0" text-anchor="middle" textLength="20.88" lengthAdjust="spacingAndGlyphs" >ZCS</text>
<text x="632.70" y="766.18" font-size="11.77" fill="#f0f0f0" text-anchor="middle" textLength="23.18" lengthAdjust="spacingAndGlyphs" >GDR</text>
<text x="970.00" y="766.18" font-size="11.77" fill="#f0f0f0" text-anchor="middle" textLength="21.77" lengthAdjust="spacingAndGlyphs" >DRA</text>
<text x="1073.30" y="766.18" font-size="11.77" fill="#f0f0f0" text-anchor="middle" textLength="21.80" lengthAdjust="spacingAndGlyphs" >LUM</text>
<text x="1112.90" y="766.18" font-size="11.77" fill="#f0f0f0" text-anchor="middle" textLength="21.00" lengthAdjust="spacingAndGlyphs" >RPU</text>
<text x="1176.40" y="766.18" font-size="11.77" fill="#f0f0f0" text-anchor="middle" textLength="21.17" lengthAdjust="spacingAndGlyphs" >THA</text>
<text x="1259.70" y="766.18" font-size="11.77" fill="#f0f0f0" text-anchor="middle" textLength="20.37" lengthAdjust="spacingAndGlyphs" >PSU</text>
<text x="1470.60" y="766.18" font-size="11.77" fill="#f0f0f0" text-anchor="middle" textLength="20.72" lengthAdjust="spacingAndGlyphs" >XCB</text>
<text x="431.25" y="749.85" font-size="11.77" fill="#f0f0f0" text-anchor="middle" textLength="17.00" lengthAdjust="spacingAndGlyphs" >JRC</text>
<text x="544.30" y="749.85" font-size="11.77" fill="#f0f0f0" text-anchor="middle" textLength="22.04" lengthAdjust="spacingAndGlyphs" >CAN</text>
<text x="578.20" y="749.85" font-size="11.77" fill="#f0f0f0" text-anchor="middle" textLength="19.85" lengthAdjust="spacingAndGlyphs" >FAN</text>
<text x="681.30" y="749.85" font-size="11.77" fill="#f0f0f0" text-anchor="middle" textLength="19.97" lengthAdjust="spacingAndGlyphs" >PER</text>
<text x="1049.20" y="749.85" font-size="11.77" fill="#f0f0f0" text-anchor="middle" textLength="19.81" lengthAdjust="spacingAndGlyphs" >CTA</text>
<text x="1264.30" y="749.85" font-size="11.77" fill="#f0f0f0" text-anchor="middle" textLength="22.06" lengthAdjust="spacingAndGlyphs" >HYD</text>
<text x="1481.30" y="749.85" font-size="11.77" fill="#f0f0f0" text-anchor="middle" textLength="23.58" lengthAdjust="spacingAndGlyphs" >XUM</text>
<text x="441.60" y="733.52" font-size="11.77" fill="#f0f0f0" text-anchor="middle" textLength="22.55" lengthAdjust="spacingAndGlyphs" >COR</text>
<text x="656.90" y="733.52" font-size="11.77" fill="#f0f0f0" text-anchor="middle" textLength="21.38" lengthAdjust="spacingAndGlyphs" >SDA</text>
<text x="1049.20" y="733.52" font-size="11.77" fill="#f0f0f0" text-anchor="middle" textLength="17.74" lengthAdjust="spacingAndGlyphs" >LMI</text>
<text x="1166.70" y="733.52" font-size="11.77" fill="#f0f0f0" text-anchor="middle" textLength="20.45" lengthAdjust="spacingAndGlyphs" >LEO</text>
<text x="1274.70" y="733.52" font-size="11.77" fill="#f0f0f0" text-anchor="middle" textLength="20.63" lengthAdjust="spacingAndGlyphs" >EHY</text>
<text x="1499.70" y="733.52" font-size="11.77" fill="#f0f0f0" text-anchor="middle" textLength="20.84" lengthAdjust="spacingAndGlyphs" >ECV</text>
<text x="602.75" y="717.19" font-size="11.77" fill="#f0f0f0" text-anchor="middle" textLength="17.22" lengthAdjust="spacingAndGlyphs" >JXA</text>
<text x="714.90" y="717.19" font-size="11.77" fill="#f0f0f0" text-anchor="middle" textLength="21.45" lengthAdjust="spacingAndGlyphs" >KCG</text>
<text x="1156.70" y="717.19" font-size="11.77" fill="#f0f0f0" text-anchor="middle" textLength="22.79" lengthAdjust="spacingAndGlyphs" >AND</text>
<text x="1274.75" y="717.19" font-size="11.77" fill="#f0f0f0" text-anchor="middle" textLength="22.77" lengthAdjust="spacingAndGlyphs" >DAD</text>
<text x="666.25" y="700.86" font-size="11.77" fill="#f0f0f0" text-anchor="middle" textLength="16.78" lengthAdjust="spacingAndGlyphs" >ERI</text>
<text x="1108.30" y="700.86" font-size="11.77" fill="#f0f0f0" text-anchor="middle" textLength="20.30" lengthAdjust="spacingAndGlyphs" >SLD</text>
<text x="1211.25" y="700.86" font-size="11.77" fill="#f0f0f0" text-anchor="middle" textLength="21.90" lengthAdjust="spacingAndGlyphs" >ORS</text>
<text x="1299.20" y="700.86" font-size="11.77" fill="#f0f0f0" text-anchor="middle" textLength="23.48" lengthAdjust="spacingAndGlyphs" >GEM</text>
<text x="1122.90" y="684.53" font-size="11.77" fill="#f0f0f0" text-anchor="middle" textLength="23.05" lengthAdjust="spacingAndGlyphs" >KUM</text>
<path d="M113.00,834.00 L121.00,834.00 M117.00,830.00 L117.00,838.00 M240.90,834.00 L248.90,834.00 M244.90,830.00 L244.90,838.00 M510.80,834.00 L518.80,834.00 M514.80,830.00 L514.80,838.00 M707.00,834.00 L715.00,834.00 M711.00,830.00 L711.00,838.00 M832.70,834.00 L840.70,834.00 M836.70,830.00 L836.70,838.00 M961.80,834.00 L969.80,834.00 M965.80,830.00 L965.80,838.00 M985.90,834.00 L993.90,834.00 M989.90,830.00 L989.90,838.00 M1115.80,834.00 L1123.80,834.00 M1119.80,830.00 L1119.80,838.00 M1294.70,834.00 L1302.70,834.00 M1298.70,830.00 L1298.70,838.00 M1341.60,834.00 L1349.60,834.00 M1345.60,830.00 L1345.60,838.00 M1412.90,834.00 L1420.90,834.00 M1416.90,830.00 L1416.90,838.00 M1481.70,834.00 L1489.70,834.00 M1485.70,830.00 L1485.70,838.00 M1530.70,834.00 L1538.70,834.00 M1534.70,830.00 L1534.70,838.00 M1732.20,834.00 L1740.20,834.00 M1736.20,830.00 L1736.20,838.00 M1765.50,834.00 L1773.50,834.00 M1769.50,830.00 L1769.50,838.00 M171.60,817.67 L179.60,817.67 M175.60,813.67 L175.60,821.67 M255.70,817.67 L263.70,817.67 M259.70,813.67 L259.70,821.67 M322.80,817.67 L330.80,817.67 M326.80,813.67 L326.80,821.67 M436.90,817.67 L444.90,817.67 M440.90,813.67 L440.90,821.67 M598.80,817.67 L606.80,817.67 M602.80,813.67 L602.80,821.67 M716.70,817.67 L724.70,817.67 M720.70,813.67 L720.70,821.67 M792.80,817.67 L800.80,817.67 M796.80,813.67 L796.80,821.67 M938.90,817.67 L946.90,817.67 M942.90,813.67 L942.90,821.67 M1005.80,817.67 L1013.80,817.67 M1009.80,813.67 L1009.80,821.67 M1152.80,817.67 L1160.80,817.67 M1156.80,813.67 L1156.80,821.67 M1250.70,817.67 L1258.70,817.67 M1254.70,813.67 L1254.70,821.67 M1299.90,817.67 L1307.90,817.67 M1303.90,813.67 L1303.90,821.67 M1348.80,817.67 L1356.80,817.67 M1352.80,813.67 L1352.80,821.67 M1403.00,817.67 L1411.00,817.67 M1407.00,813.67 L1407.00,821.67 M1466.70,817.67 L1474.70,817.67 M1470.70,813.67 L1470.70,821.67 M1554.70,817.67 L1562.70,817.67 M1558.70,813.67 L1558.70,821.67 M173.90,801.34 L181.90,801.34 M177.90,797.34 L177.90,805.34 M377.80,801.34 L385.80,801.34 M381.80,797.34 L381.80,805.34 M544.70,801.34 L552.70,801.34 M548.70,797.34 L548.70,805.34 M681.80,801.34 L689.80,801.34 M685.80,797.34 L685.80,805.34 M740.90,801.34 L748.90,801.34 M744.90,797.34 L744.90,805.34 M1074.70,801.34 L1082.70,801.34 M1078.70,797.34 L1078.70,805.34 M1216.80,801.34 L1224.80,801.34 M1220.80,797.34 L1220.80,805.34 M1304.80,801.34 L1312.80,801.34 M1308.80,797.34 L1308.80,805.34 M1466.70,801.34 L1474.70,801.34 M1470.70,797.34 L1470.70,805.34 M1559.70,801.34 L1567.70,801.34 M1563.70,797.34 L1563.70,805.34 M201.70,785.01 L209.70,785.01 M205.70,781.01 L205.70,789.01 M399.80,785.01 L407.80,785.01 M403.80,781.01 L403.80,789.01 M524.80,785.01 L532.80,785.01 M528.80,781.01 L528.80,789.01 M638.80,785.01 L646.80,785.01 M642.80,781.01 L642.80,789.01 M814.80,785.01 L822.80,785.01 M818.80,781.01 L818.80,789.01 M958.80,785.01 L966.80,785.01 M962.80,781.01 L962.80,789.01 M1039.60,785.01 L1047.60,785.01 M1043.60,781.01 L1043.60,789.01 M1187.80,785.01 L1195.80,785.01 M1191.80,781.01 L1191.80,789.01 M1250.70,785.01 L1258.70,785.01 M1254.70,781.01 L1254.70,789.01 M1324.70,785.01 L1332.70,785.01 M1328.70,781.01 L1328.70,789.01 M1403.00,785.01 L1411.00,785.01 M1407.00,781.01 L1407.00,789.01 M1545.70,785.01 L1553.70,785.01 M1549.70,781.01 L1549.70,789.01 M356.00,768.68 L364.00,768.68 M360.00,764.68 L360.00,772.68 M426.00,768.68 L434.00,768.68 M430.00,764.68 L430.00,772.68 M475.90,768.68 L483.90,768.68 M479.90,764.68 L479.90,772.68 M534.60,768.68 L542.60,768.68 M538.60,764.68 L538.60,772.68 M570.80,768.68 L578.80,768.68 M574.80,764.68 L574.80,772.68 M630.90,768.68 L638.90,768.68 M634.90,764.68 L634.90,772.68 M974.00,768.68 L982.00,768.68 M978.00,764.68 L978.00,772.68 M1069.80,768.68 L1077.80,768.68 M1073.80,764.68 L1073.80,772.68 M1108.60,768.68 L1116.60,768.68 M1112.60,764.68 L1112.60,772.68 M1178.00,768.68 L1186.00,768.68 M1182.00,764.68 L1182.00,772.68 M1255.90,768.68 L1263.90,768.68 M1259.90,764.68 L1259.90,772.68 M1466.70,768.68 L1474.70,768.68 M1470.70,764.68 L1470.70,772.68 M426.70,752.35 L434.70,752.35 M430.70,748.35 L430.70,756.35 M539.80,752.35 L547.80,752.35 M543.80,748.35 L543.80,756.35 M573.70,752.35 L581.70,752.35 M577.70,748.35 L577.70,756.35 M703.60,752.35 L711.60,752.35 M707.60,748.35 L707.60,756.35 M1093.60,752.35 L1101.60,752.35 M1097.60,748.35 L1097.60,756.35 M1270.90,752.35 L1278.90,752.35 M1274.90,748.35 L1274.90,756.35 M1476.80,752.35 L1484.80,752.35 M1480.80,748.35 L1480.80,756.35 M437.00,736.02 L445.00,736.02 M441.00,732.02 L441.00,740.02 M630.90,736.02 L638.90,736.02 M634.90,732.02 L634.90,740.02 M1038.70,736.02 L1046.70,736.02 M1042.70,732.02 L1042.70,740.02 M1167.90,736.02 L1175.90,736.02 M1171.90,732.02 L1171.90,740.02 M1275.00,736.02 L1283.00,736.02 M1279.00,732.02 L1279.00,740.02 M1496.80,736.02 L1504.80,736.02 M1500.80,732.02 L1500.80,740.02 M598.80,719.69 L606.80,719.69 M602.80,715.69 L602.80,723.69 M726.80,719.69 L734.80,719.69 M730.80,715.69 L730.80,723.69 M1187.80,719.69 L1195.80,719.69 M1191.80,715.69 L1191.80,723.69 M1270.90,719.69 L1278.90,719.69 M1274.90,715.69 L1274.90,723.69 M686.80,703.36 L694.80,703.36 M690.80,699.36 L690.80,707.36 M1101.60,703.36 L1109.60,703.36 M1105.60,699.36 L1105.60,707.36 M1207.00,703.36 L1215.00,703.36 M1211.00,699.36 L1211.00,707.36 M1299.90,703.36 L1307.90,703.36 M1303.90,699.36 L1303.90,707.36 M1119.00,687.03 L1127.00,687.03 M1123.00,683.03 L1123.00,691.03" stroke="#ffffff" stroke-width="2.3"/>
<rect x="19.5" y="641.5" width="1766.0" height="201.0" fill="none" stroke="#ffffff" stroke-width="1.1"/>
<path d="M19.50,842.5 L19.50,847.4" stroke="#ffffff" stroke-width="1.1"/>
<text x="19.50" y="862.00" font-size="14.72" fill="#ffffff" text-anchor="middle" textLength="8.83" lengthAdjust="spacingAndGlyphs" >0</text>
<path d="M264.70,842.5 L264.70,847.4" stroke="#ffffff" stroke-width="1.1"/>
<text x="264.70" y="862.00" font-size="14.72" fill="#ffffff" text-anchor="middle" textLength="17.66" lengthAdjust="spacingAndGlyphs" >50</text>
<path d="M509.90,842.5 L509.90,847.4" stroke="#ffffff" stroke-width="1.1"/>
<text x="509.90" y="862.00" font-size="14.72" fill="#ffffff" text-anchor="middle" textLength="26.48" lengthAdjust="spacingAndGlyphs" >100</text>
<path d="M755.10,842.5 L755.10,847.4" stroke="#ffffff" stroke-width="1.1"/>
<text x="755.10" y="862.00" font-size="14.72" fill="#ffffff" text-anchor="middle" textLength="26.48" lengthAdjust="spacingAndGlyphs" >150</text>
<path d="M1000.30,842.5 L1000.30,847.4" stroke="#ffffff" stroke-width="1.1"/>
<text x="1000.30" y="862.00" font-size="14.72" fill="#ffffff" text-anchor="middle" textLength="26.48" lengthAdjust="spacingAndGlyphs" >200</text>
<path d="M1245.50,842.5 L1245.50,847.4" stroke="#ffffff" stroke-width="1.1"/>
<text x="1245.50" y="862.00" font-size="14.72" fill="#ffffff" text-anchor="middle" textLength="26.48" lengthAdjust="spacingAndGlyphs" >250</text>
<path d="M1490.70,842.5 L1490.70,847.4" stroke="#ffffff" stroke-width="1.1"/>
<text x="1490.70" y="862.00" font-size="14.72" fill="#ffffff" text-anchor="middle" textLength="26.48" lengthAdjust="spacingAndGlyphs" >300</text>
<path d="M1735.90,842.5 L1735.90,847.4" stroke="#ffffff" stroke-width="1.1"/>
<text x="1735.90" y="862.00" font-size="14.72" fill="#ffffff" text-anchor="middle" textLength="26.48" lengthAdjust="spacingAndGlyphs" >350</text>
<text x="902.30" y="882.00" font-size="14.72" fill="#ffffff" text-anchor="middle" textLength="146.56" lengthAdjust="spacingAndGlyphs" >Solar longitude (deg)</text>
</svg>
</body></html>
